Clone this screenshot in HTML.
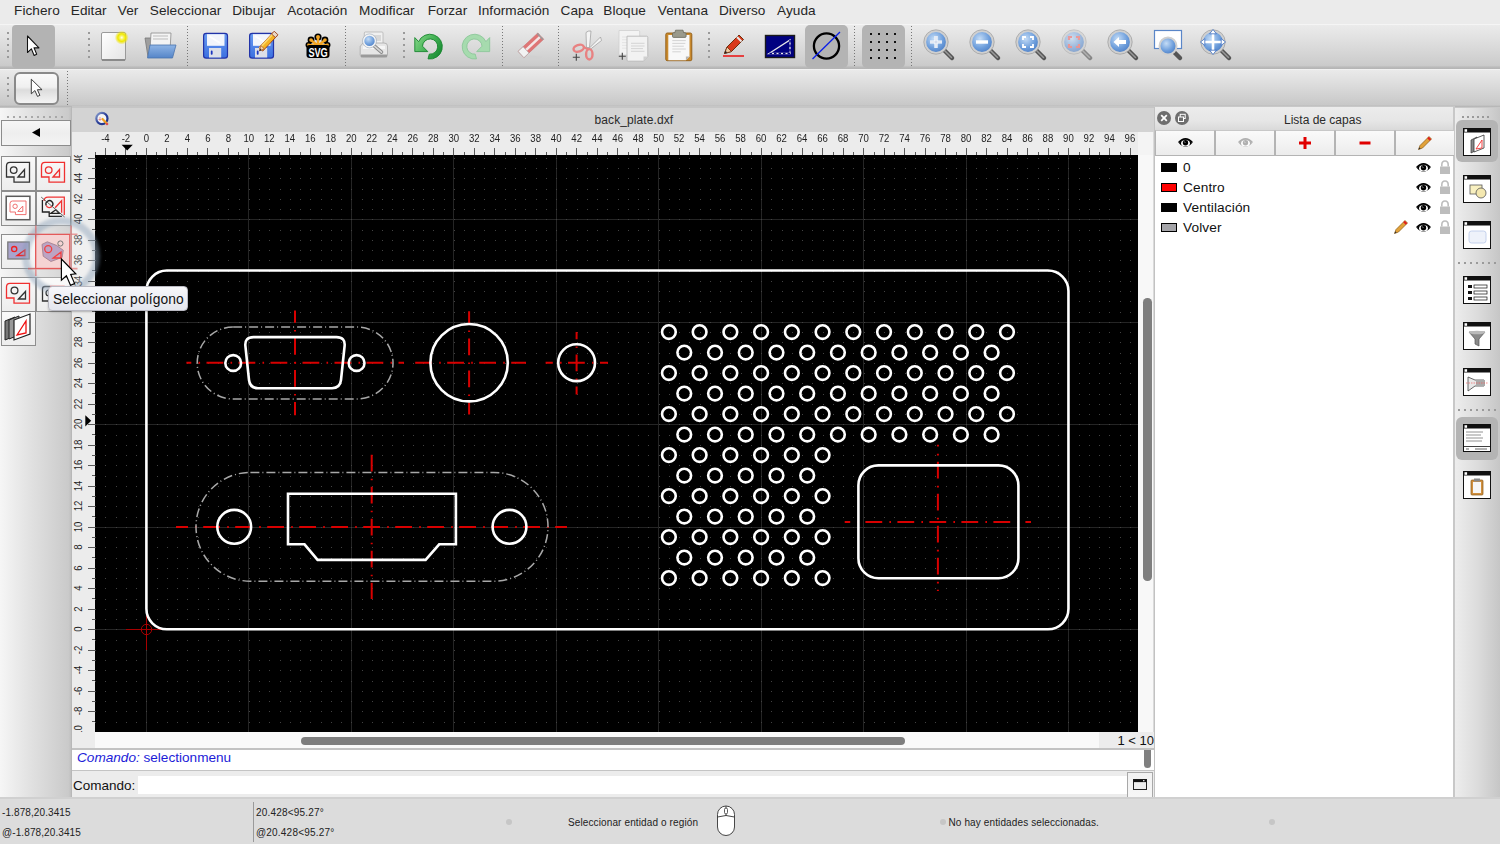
<!DOCTYPE html><html><head><meta charset="utf-8"><title>LibreCAD</title><style>
*{margin:0;padding:0;box-sizing:border-box}
html,body{width:1500px;height:844px;overflow:hidden;background:#ececec;font-family:"Liberation Sans",sans-serif;color:#222}
.a{position:absolute}
.t{position:absolute;white-space:nowrap;line-height:1}
</style></head><body><div class="a" style="left:0;top:0;width:1500px;height:24px;background:#ebebeb"></div><div class="t" style="left:14.1px;top:3.6px;font-size:13.6px;letter-spacing:0.05px;color:#262626">Fichero</div><div class="t" style="left:70.8px;top:3.6px;font-size:13.6px;letter-spacing:0.05px;color:#262626">Editar</div><div class="t" style="left:117.8px;top:3.6px;font-size:13.6px;letter-spacing:0.05px;color:#262626">Ver</div><div class="t" style="left:149.8px;top:3.6px;font-size:13.6px;letter-spacing:0.05px;color:#262626">Seleccionar</div><div class="t" style="left:232.2px;top:3.6px;font-size:13.6px;letter-spacing:0.05px;color:#262626">Dibujar</div><div class="t" style="left:287.2px;top:3.6px;font-size:13.6px;letter-spacing:0.05px;color:#262626">Acotación</div><div class="t" style="left:359.1px;top:3.6px;font-size:13.6px;letter-spacing:0.05px;color:#262626">Modificar</div><div class="t" style="left:427.7px;top:3.6px;font-size:13.6px;letter-spacing:0.05px;color:#262626">Forzar</div><div class="t" style="left:477.9px;top:3.6px;font-size:13.6px;letter-spacing:0.05px;color:#262626">Información</div><div class="t" style="left:560.6px;top:3.6px;font-size:13.6px;letter-spacing:0.05px;color:#262626">Capa</div><div class="t" style="left:603.3px;top:3.6px;font-size:13.6px;letter-spacing:0.05px;color:#262626">Bloque</div><div class="t" style="left:657.8px;top:3.6px;font-size:13.6px;letter-spacing:0.05px;color:#262626">Ventana</div><div class="t" style="left:719.0px;top:3.6px;font-size:13.6px;letter-spacing:0.05px;color:#262626">Diverso</div><div class="t" style="left:777.1px;top:3.6px;font-size:13.6px;letter-spacing:0.05px;color:#262626">Ayuda</div><div class="a" style="left:0;top:24px;width:1500px;height:45px;background:linear-gradient(#f5f5f5 0 1px,#ebebeb 1px,#e0e0e0 35%,#cbcbcb 92%,#bababa 96%,#b4b4b4)"></div><div class="a" style="left:0;top:69px;width:1500px;height:39px;background:linear-gradient(#f2f2f2 0 1px,#eaeaea 1px,#dedede 35%,#c8c8c8 92%,#b8b8b8 96%,#b4b4b4)"></div><div class="a" style="left:7px;top:32px;width:2px;height:2px;background:#9a9a9a"></div><div class="a" style="left:7px;top:38px;width:2px;height:2px;background:#9a9a9a"></div><div class="a" style="left:7px;top:44px;width:2px;height:2px;background:#9a9a9a"></div><div class="a" style="left:7px;top:50px;width:2px;height:2px;background:#9a9a9a"></div><div class="a" style="left:7px;top:56px;width:2px;height:2px;background:#9a9a9a"></div><div class="a" style="left:12px;top:25px;width:43px;height:43px;border-radius:4px;background:#b3b3b3"></div><div class="a" style="left:88px;top:32px;width:2px;height:2px;background:#9a9a9a"></div><div class="a" style="left:88px;top:38px;width:2px;height:2px;background:#9a9a9a"></div><div class="a" style="left:88px;top:44px;width:2px;height:2px;background:#9a9a9a"></div><div class="a" style="left:88px;top:50px;width:2px;height:2px;background:#9a9a9a"></div><div class="a" style="left:88px;top:56px;width:2px;height:2px;background:#9a9a9a"></div><div class="a" style="left:187px;top:26px;width:1px;height:40px;background:repeating-linear-gradient(#777 0 1px,transparent 1px 3px)"></div><div class="a" style="left:345px;top:26px;width:1px;height:40px;background:repeating-linear-gradient(#777 0 1px,transparent 1px 3px)"></div><div class="a" style="left:403px;top:32px;width:2px;height:2px;background:#9a9a9a"></div><div class="a" style="left:403px;top:38px;width:2px;height:2px;background:#9a9a9a"></div><div class="a" style="left:403px;top:44px;width:2px;height:2px;background:#9a9a9a"></div><div class="a" style="left:403px;top:50px;width:2px;height:2px;background:#9a9a9a"></div><div class="a" style="left:403px;top:56px;width:2px;height:2px;background:#9a9a9a"></div><div class="a" style="left:502px;top:26px;width:1px;height:40px;background:repeating-linear-gradient(#777 0 1px,transparent 1px 3px)"></div><div class="a" style="left:558px;top:26px;width:1px;height:40px;background:repeating-linear-gradient(#777 0 1px,transparent 1px 3px)"></div><div class="a" style="left:708px;top:32px;width:2px;height:2px;background:#9a9a9a"></div><div class="a" style="left:708px;top:38px;width:2px;height:2px;background:#9a9a9a"></div><div class="a" style="left:708px;top:44px;width:2px;height:2px;background:#9a9a9a"></div><div class="a" style="left:708px;top:50px;width:2px;height:2px;background:#9a9a9a"></div><div class="a" style="left:708px;top:56px;width:2px;height:2px;background:#9a9a9a"></div><div class="a" style="left:805px;top:25px;width:43px;height:43px;border-radius:5px;background:#b4b4b4"></div><div class="a" style="left:854px;top:26px;width:1px;height:40px;background:repeating-linear-gradient(#777 0 1px,transparent 1px 3px)"></div><div class="a" style="left:862px;top:25px;width:43px;height:43px;border-radius:5px;background:#b4b4b4"></div><div class="a" style="left:911px;top:26px;width:1px;height:40px;background:repeating-linear-gradient(#777 0 1px,transparent 1px 3px)"></div><div class="a" style="left:7px;top:77px;width:2px;height:2px;background:#9a9a9a"></div><div class="a" style="left:7px;top:83px;width:2px;height:2px;background:#9a9a9a"></div><div class="a" style="left:7px;top:89px;width:2px;height:2px;background:#9a9a9a"></div><div class="a" style="left:7px;top:95px;width:2px;height:2px;background:#9a9a9a"></div><div class="a" style="left:14px;top:72px;width:45px;height:33px;border-radius:6px;border:2px solid #8a8a8a;background:linear-gradient(#fafafa,#f0f0f0 45%,#dcdcdc 55%,#f4f4f4)"></div><div class="a" style="left:67px;top:71px;width:1px;height:34px;background:repeating-linear-gradient(#777 0 1px,transparent 1px 3px)"></div><svg class="a" style="left:26px;top:35px;" width="16" height="24" viewBox="0 0 16 24"><path d="M0 0L0 17L4.2 13.2L7.2 20L10 18.8L7.1 12.2L12.5 12.2Z" transform="translate(1.5,1) scale(0.92,0.97)" fill="#fff" stroke="#111" stroke-width="1.15" stroke-linejoin="round"/></svg><svg class="a" style="left:29px;top:78px;" width="16" height="22" viewBox="0 0 16 22"><path d="M0 0L0 17L4.2 13.2L7.2 20L10 18.8L7.1 12.2L12.5 12.2Z" transform="translate(2.3,1.2) scale(0.86)" fill="#fff" stroke="#333" stroke-width="1.1" stroke-linejoin="round"/></svg><svg width="0" height="0" style="position:absolute"><defs>
<linearGradient id="gpage" x1="0" y1="0" x2="1" y2="1"><stop offset="0" stop-color="#fff"/><stop offset="1" stop-color="#e4e4e4"/></linearGradient>
<radialGradient id="gglow"><stop offset="0" stop-color="#fffff8"/><stop offset="0.25" stop-color="#f8f46a"/><stop offset="0.55" stop-color="#f0e800"/><stop offset="1" stop-color="#f0e000" stop-opacity="0"/></radialGradient>
<linearGradient id="gblue" x1="0" y1="0" x2="0" y2="1"><stop offset="0" stop-color="#8fb5e6"/><stop offset="1" stop-color="#5585c8"/></linearGradient>
<linearGradient id="gfl" x1="0" y1="0" x2="0" y2="1"><stop offset="0" stop-color="#6a9cf0"/><stop offset="1" stop-color="#3b6fe0"/></linearGradient>
<radialGradient id="glens" cx="0.4" cy="0.35" r="0.7"><stop offset="0" stop-color="#c4dcf6"/><stop offset="0.6" stop-color="#6f9fdc"/><stop offset="1" stop-color="#4a7cc4"/></radialGradient>
<linearGradient id="ggreen" x1="0" y1="0" x2="1" y2="1"><stop offset="0" stop-color="#7fd07f"/><stop offset="1" stop-color="#1f9a3a"/></linearGradient>
<linearGradient id="gbtn" x1="0" y1="0" x2="0" y2="1"><stop offset="0" stop-color="#fbfbfb"/><stop offset="1" stop-color="#e9e9e9"/></linearGradient>
</defs></svg><svg class="a" style="left:98px;top:30px;" width="34" height="32" viewBox="0 0 34 32"><rect x="3.5" y="2.5" width="24" height="28" rx="1.5" fill="url(#gpage)" stroke="#9a9a9a"/><rect x="4" y="29" width="23" height="2" fill="#8a8a8a"/><circle cx="23.7" cy="7.6" r="7" fill="url(#gglow)"/></svg><svg class="a" style="left:142px;top:30px;" width="36" height="32" viewBox="0 0 36 32"><path d="M3 8h8l2 2h8v17H6z" fill="#9e9e9e" stroke="#777" stroke-width="0.8"/><path d="M9 3h20l-1 18H8z" fill="#f4f4f4" stroke="#8a8a8a" stroke-width="0.8"/><path d="M11 6h15M11 9h15" stroke="#bbb" stroke-width="1"/><path d="M8 15h26l-3.5 13H5.5z" fill="url(#gblue)" stroke="#4a73ad" stroke-width="0.8"/></svg><svg class="a" style="left:200px;top:30px;" width="32" height="32" viewBox="200 30 32 32"><g transform="translate(0,0)"><rect x="203.6" y="33.3" width="23.9" height="24.8" rx="2.6" fill="url(#gfl)" stroke="#2233a8" stroke-width="1.2"/><rect x="207" y="34.2" width="17.5" height="11.6" fill="#f2f5fc"/><path d="M209 36l11 7" stroke="#fff" stroke-width="1.6" opacity="0.8"/><rect x="209" y="48" width="12.2" height="9.5" fill="#dcdfe8"/><rect x="210.8" y="50.6" width="1.8" height="4.2" rx="0.8" fill="#1b35c0"/></g></svg><svg class="a" style="left:245.8px;top:30px;" width="32" height="32" viewBox="245.8 30 32 32"><g transform="translate(45.8,0)"><rect x="203.6" y="33.3" width="23.9" height="24.8" rx="2.6" fill="url(#gfl)" stroke="#2233a8" stroke-width="1.2"/><rect x="207" y="34.2" width="17.5" height="11.6" fill="#f2f5fc"/><path d="M209 36l11 7" stroke="#fff" stroke-width="1.6" opacity="0.8"/><rect x="209" y="48" width="12.2" height="9.5" fill="#dcdfe8"/><rect x="210.8" y="50.6" width="1.8" height="4.2" rx="0.8" fill="#1b35c0"/></g></svg><svg class="a" style="left:256px;top:29px;" width="24" height="25" viewBox="256 29 24 25"><g transform="translate(268.05,41.65) rotate(-47)"><rect x="-10.5" y="-2.6" width="21" height="5.2" fill="#f5b323" stroke="#9a3a10" stroke-width="0.8"/><rect x="-10.5" y="-2.6" width="21" height="1.8" fill="#fbd66a"/><rect x="8" y="-2.6" width="3.8" height="5.2" fill="#e8d8c8" stroke="#9a3a10" stroke-width="0.8"/></g><path d="M259.4 50.9L260.9 45.6L264.3 48.8Z" fill="#f2d2a8" stroke="#9a3a10" stroke-width="0.6"/><path d="M259.4 50.9L260 48.6L261.7 50.2Z" fill="#222"/></svg><svg class="a" style="left:304px;top:32px;" width="28" height="28" viewBox="0 0 28 28"><g fill="#f4a623" stroke="#000" stroke-width="1.6"><circle cx="14" cy="5" r="2.8"/><circle cx="7" cy="8" r="2.6"/><circle cx="21" cy="8" r="2.6"/><circle cx="4.5" cy="13" r="2.2"/><circle cx="23.5" cy="13" r="2.2"/></g><path d="M14 14L14 6M14 14L7 8M14 14L21 8M14 14L4.5 13M14 14L23.5 13" stroke="#f4a623" stroke-width="2.4"/><rect x="2.5" y="13" width="23" height="13" rx="3" fill="#000"/><text transform="translate(14,25) scale(0.92,1.32)" x="0" y="0" font-family="Liberation Sans" font-weight="bold" font-size="10" fill="#fff" text-anchor="middle" letter-spacing="-0.2">SVG</text></svg><svg class="a" style="left:356px;top:28px;" width="36" height="34" viewBox="356 28 36 34"><rect x="364.3" y="32" width="18.7" height="12" rx="1" fill="#f0f0f0" stroke="#b4b4b4" stroke-width="0.8"/><rect x="372" y="35" width="9" height="6" fill="#d8d8d8"/><path d="M362 44.5Q362 43 364 43H384Q387.5 43 387.5 46V55Q387.5 57.2 385 57.2H362.5Q360.2 57.2 360.2 55V46Z" fill="#e6e6e6" stroke="#a8a8a8" stroke-width="0.8"/><rect x="363" y="46" width="22" height="3" fill="#f6f6f6"/><rect x="361" y="54.5" width="26" height="2.7" fill="#9a9a9a"/><path d="M374.5 46.2L381.5 52.2" stroke="#8a8a8a" stroke-width="3.6" stroke-linecap="round"/><path d="M374.5 46.2L381.5 52.2" stroke="#d6d6d6" stroke-width="1.6" stroke-linecap="round"/><circle cx="369.5" cy="40.9" r="6" fill="url(#glens)" stroke="#f4f4f4" stroke-width="1.6"/><circle cx="369.5" cy="40.9" r="7" fill="none" stroke="#9aa8b8" stroke-width="0.6"/></svg><svg class="a" style="left:410px;top:30px;" width="38" height="32" viewBox="410 30 38 32"><defs><linearGradient id="gun" x1="0" y1="0" x2="1" y2="0.6"><stop offset="0" stop-color="#8ad88c"/><stop offset="0.55" stop-color="#46b457"/><stop offset="1" stop-color="#1d8f37"/></linearGradient></defs><path d="M414.8 37.6V51.6H427.8L422.5 46.2A7.6 7.6 0 1 1 429.3 54.1L428 58.9A12.4 12.4 0 1 0 418.6 41.6Z" fill="url(#gun)" stroke="#17862e" stroke-width="0.9" stroke-linejoin="round"/></svg><svg class="a" style="left:456px;top:30px;" width="38" height="32" viewBox="456 30 38 32"><path d="M414.8 37.6V51.6H427.8L422.5 46.2A7.6 7.6 0 1 1 429.3 54.1L428 58.9A12.4 12.4 0 1 0 418.6 41.6Z" transform="translate(904.5,0) scale(-1,1)" fill="#a6dbae" stroke="#8cc79a" stroke-width="0.9" stroke-linejoin="round"/></svg><svg class="a" style="left:512px;top:28px;" width="40" height="34" viewBox="512 28 40 34"><ellipse cx="530.5" cy="57.3" rx="12" ry="1.6" fill="#cfcfcf" opacity="0.8"/><g transform="translate(530.9,45.3) rotate(-43)"><rect x="-13.5" y="-4.3" width="27" height="8.6" fill="#df7575" stroke="#c86a6a" stroke-width="0.5"/><rect x="-7" y="-1.2" width="20.5" height="2.6" fill="#f3e6e6"/><rect x="-13.5" y="-4.3" width="6.8" height="8.6" fill="#f2f2f2" stroke="#aaa" stroke-width="0.6"/><rect x="12" y="-4.3" width="1.5" height="8.6" fill="#999"/></g></svg><svg class="a" style="left:568px;top:28px;" width="36" height="34" viewBox="568 28 36 34"><path d="M586.5 47.5L586 32.5Q588 30.5 591 31L589.5 47.5Z" fill="#f4f4f4" stroke="#9a9a9a" stroke-width="0.7"/><path d="M589.5 48L600.5 37L601.5 40.5L590 49.5Z" fill="#f4f4f4" stroke="#9a9a9a" stroke-width="0.7"/><ellipse cx="578.7" cy="48.2" rx="5.3" ry="3.3" transform="rotate(-18 578.7 48.2)" fill="none" stroke="#e88282" stroke-width="2.4"/><ellipse cx="589.3" cy="54.3" rx="3.2" ry="5.2" fill="none" stroke="#e88282" stroke-width="2.4"/><path d="M583.5 47L588.5 49.5" stroke="#e88282" stroke-width="2.2"/><path d="M572.8 57.3h7M576.3 53.8v7" stroke="#444" stroke-width="1.1"/></svg><svg class="a" style="left:614px;top:27px;" width="38" height="37" viewBox="614 27 38 37"><path d="M619 30.5h19.5q1.2 0 1.2 1.2V55H619z" fill="#f3f3f3" stroke="#cfcfcf" stroke-width="0.8"/><path d="M622 37h15M622 39.8h15M622 42.6h15M622 45.4h15M622 48.2h15" stroke="#e2e2e2" stroke-width="0.9"/><path d="M627 36.2h19.6q1.2 0 1.2 1.2V56.5L643.5 61.2H628.2q-1.2 0-1.2-1.2z" fill="#f2f2f2" stroke="#b8b8b8" stroke-width="0.9"/><path d="M631 43.3h13.5M631 46h13.5M631 48.6h12M631 51.3h13.5" stroke="#d0d0d0" stroke-width="0.9"/><path d="M643.5 61.2L647.8 56.5H643.5z" fill="#d0d0d0"/><path d="M618.8 56.3h7M622.3 52.8v7" stroke="#444" stroke-width="1.1"/></svg><svg class="a" style="left:662px;top:27px;" width="34" height="37" viewBox="662 27 34 37"><rect x="665.8" y="33" width="26" height="27.7" rx="1.5" fill="#c98a2e" stroke="#8f5a12" stroke-width="0.9"/><path d="M668.3 35h21.2v21.6l-3.6 3.6h-17.6z" fill="#f8f8f8"/><path d="M672.3 40.6h13.5M672.3 43.4h13M672.3 46.2h11.5M672.3 49h13.5M672.3 51.8h8.5" stroke="#cfcfcf" stroke-width="0.9"/><path d="M685.9 60.2L689.5 56.6H685.9z" fill="#b4b4b4"/><path d="M675.5 30.2h7.5l0.6 2.5h1.5q1 0 1 1.2v2.5q0 1-1 1h-11.6q-1 0-1-1v-2.5q0-1.2 1-1.2h1.4z" fill="#9a9a8c" stroke="#6a6a5e" stroke-width="0.8"/></svg><svg class="a" style="left:721px;top:32px;" width="26" height="27" viewBox="0 0 26 27"><path d="M2 24H23" stroke="#e00" stroke-width="1.4"/><path d="M3.5 21.5L6 15L18 3L22.5 7.5L10.5 19.5Z" fill="#d93a1c" stroke="#6d2f0f" stroke-width="1"/><path d="M16 5l4.5 4.5" stroke="#e8e8e8" stroke-width="2"/><path d="M3.5 21.5L6 15L10.5 19.5Z" fill="#f0caa0" stroke="#6d2f0f" stroke-width="0.8"/><path d="M3.5 21.5L4.5 18.8L6.2 20.5Z" fill="#222"/></svg><svg class="a" style="left:764px;top:34px;" width="32" height="25" viewBox="0 0 32 25"><rect x="1.5" y="1.5" width="29" height="22" fill="#000080" stroke="#1a1a1a" stroke-width="1.4"/><path d="M5 19.5L26 6V19.5Z" fill="none" stroke="#e8e8e8" stroke-width="1.3" stroke-dasharray="0"/><path d="M26 6V19.5H5" fill="none" stroke="#000080" stroke-width="1.5" stroke-dasharray="2.5 2"/></svg><svg class="a" style="left:809px;top:30px;" width="34" height="32" viewBox="0 0 34 32"><circle cx="17.5" cy="16" r="12.6" fill="none" stroke="#000" stroke-width="2.3"/><path d="M3.5 29L31 2" stroke="#0a1ee8" stroke-width="1.3"/></svg><svg class="a" style="left:862px;top:25px;" width="43" height="43" viewBox="0 0 43 43"><rect x="8" y="8" width="2" height="2" fill="#111"/><rect x="8" y="16" width="2" height="2" fill="#111"/><rect x="8" y="24" width="2" height="2" fill="#111"/><rect x="8" y="32" width="2" height="2" fill="#111"/><rect x="16" y="8" width="2" height="2" fill="#111"/><rect x="16" y="16" width="2" height="2" fill="#111"/><rect x="16" y="24" width="2" height="2" fill="#111"/><rect x="16" y="32" width="2" height="2" fill="#111"/><rect x="24" y="8" width="2" height="2" fill="#111"/><rect x="24" y="16" width="2" height="2" fill="#111"/><rect x="24" y="24" width="2" height="2" fill="#111"/><rect x="24" y="32" width="2" height="2" fill="#111"/><rect x="32" y="8" width="2" height="2" fill="#111"/><rect x="32" y="16" width="2" height="2" fill="#111"/><rect x="32" y="24" width="2" height="2" fill="#111"/><rect x="32" y="32" width="2" height="2" fill="#111"/></svg><svg class="a" style="left:919px;top:25px;" width="38" height="38" viewBox="0 0 38 38"><g><path d="M25 25L33 33" stroke="#555" stroke-width="4.5" stroke-linecap="round"/><path d="M25.5 25.5L32.5 32.5" stroke="#999" stroke-width="1.5" stroke-linecap="round"/><circle cx="17" cy="17" r="11" fill="url(#glens)" stroke="#d0d0d0" stroke-width="2.2"/><circle cx="17" cy="17" r="12.2" fill="none" stroke="#9a9a9a" stroke-width="0.7"/><path d="M17 11v12M11 17h12" stroke="#fff" stroke-width="3.2"/><path d="M17 11v12M11 17h12" stroke="#2a58a8" stroke-width="0.6" opacity="0.4"/></g></svg><svg class="a" style="left:965px;top:25px;" width="38" height="38" viewBox="0 0 38 38"><g><path d="M25 25L33 33" stroke="#555" stroke-width="4.5" stroke-linecap="round"/><path d="M25.5 25.5L32.5 32.5" stroke="#999" stroke-width="1.5" stroke-linecap="round"/><circle cx="17" cy="17" r="11" fill="url(#glens)" stroke="#d0d0d0" stroke-width="2.2"/><circle cx="17" cy="17" r="12.2" fill="none" stroke="#9a9a9a" stroke-width="0.7"/><path d="M11 17h12" stroke="#fff" stroke-width="3.4"/></g></svg><svg class="a" style="left:1011px;top:25px;" width="38" height="38" viewBox="0 0 38 38"><g><path d="M25 25L33 33" stroke="#555" stroke-width="4.5" stroke-linecap="round"/><path d="M25.5 25.5L32.5 32.5" stroke="#999" stroke-width="1.5" stroke-linecap="round"/><circle cx="17" cy="17" r="11" fill="url(#glens)" stroke="#d0d0d0" stroke-width="2.2"/><circle cx="17" cy="17" r="12.2" fill="none" stroke="#9a9a9a" stroke-width="0.7"/><path d="M12 15v-3h3M19 12h3v3M22 19v3h-3M15 22h-3v-3" fill="none" stroke="#fff" stroke-width="1.8"/></g></svg><svg class="a" style="left:1057px;top:25px;" width="38" height="38" viewBox="0 0 38 38"><g opacity="0.6"><path d="M25 25L33 33" stroke="#555" stroke-width="4.5" stroke-linecap="round"/><path d="M25.5 25.5L32.5 32.5" stroke="#999" stroke-width="1.5" stroke-linecap="round"/><circle cx="17" cy="17" r="11" fill="url(#glens)" stroke="#d0d0d0" stroke-width="2.2"/><circle cx="17" cy="17" r="12.2" fill="none" stroke="#9a9a9a" stroke-width="0.7"/><path d="M12 15v-3h3M19 12h3v3M22 19v3h-3M15 22h-3v-3" fill="none" stroke="#f06a6a" stroke-width="2.2"/></g></svg><svg class="a" style="left:1103px;top:25px;" width="38" height="38" viewBox="0 0 38 38"><g><path d="M25 25L33 33" stroke="#555" stroke-width="4.5" stroke-linecap="round"/><path d="M25.5 25.5L32.5 32.5" stroke="#999" stroke-width="1.5" stroke-linecap="round"/><circle cx="17" cy="17" r="11" fill="url(#glens)" stroke="#d0d0d0" stroke-width="2.2"/><circle cx="17" cy="17" r="12.2" fill="none" stroke="#9a9a9a" stroke-width="0.7"/><path d="M10.5 17L16 12v3h7v4h-7v3z" fill="#fff"/></g></svg><svg class="a" style="left:1151px;top:27px;" width="38" height="38" viewBox="0 0 38 38"><rect x="3.5" y="3.5" width="27" height="18" fill="#fff" stroke="#5a86c8" stroke-width="1.2"/><path d="M21 23L29 31" stroke="#555" stroke-width="4.5" stroke-linecap="round"/><circle cx="17" cy="19" r="8.5" fill="url(#glens)" stroke="#d0d0d0" stroke-width="2"/></svg><svg class="a" style="left:1196px;top:25px;" width="38" height="38" viewBox="0 0 38 38"><g><path d="M25 25L33 33" stroke="#555" stroke-width="4.5" stroke-linecap="round"/><path d="M25.5 25.5L32.5 32.5" stroke="#999" stroke-width="1.5" stroke-linecap="round"/><circle cx="17" cy="17" r="11" fill="url(#glens)" stroke="#d0d0d0" stroke-width="2.2"/><circle cx="17" cy="17" r="12.2" fill="none" stroke="#9a9a9a" stroke-width="0.7"/><path d="M17 8v18M8 17h18" stroke="#fff" stroke-width="2.6"/><path d="M17 4.5l-3.4 4.3h6.8zM17 29.5l-3.4-4.3h6.8zM4.5 17l4.3-3.4v6.8zM29.5 17l-4.3-3.4v6.8z" fill="#fff" stroke="#3a6cc0" stroke-width="0.8" stroke-linejoin="round"/></g></svg><div class="a" style="left:0;top:107px;width:72px;height:690px;background:linear-gradient(90deg,#f6f6f6,#e0e0e0 45%,#cacaca 95%,#bcbcbc);border-top:1px solid #c4c4c4"></div><div class="a" style="left:71px;top:107px;width:1px;height:690px;background:#b8b8b8"></div><div class="a" style="left:7px;top:116px;width:2px;height:2px;background:#a8a8a8"></div><div class="a" style="left:13px;top:116px;width:2px;height:2px;background:#a8a8a8"></div><div class="a" style="left:19px;top:116px;width:2px;height:2px;background:#a8a8a8"></div><div class="a" style="left:25px;top:116px;width:2px;height:2px;background:#a8a8a8"></div><div class="a" style="left:31px;top:116px;width:2px;height:2px;background:#a8a8a8"></div><div class="a" style="left:37px;top:116px;width:2px;height:2px;background:#a8a8a8"></div><div class="a" style="left:43px;top:116px;width:2px;height:2px;background:#a8a8a8"></div><div class="a" style="left:49px;top:116px;width:2px;height:2px;background:#a8a8a8"></div><div class="a" style="left:55px;top:116px;width:2px;height:2px;background:#a8a8a8"></div><div class="a" style="left:61px;top:116px;width:2px;height:2px;background:#a8a8a8"></div><div class="a" style="left:1px;top:120px;width:70px;height:26px;border:1px solid #8c8c8c;background:linear-gradient(#f6f6f6,#eeeeee 50%,#f4f4f4)"></div><svg class="a" style="left:31px;top:127px;" width="10" height="11" viewBox="0 0 10 11"><path d="M1 5.5L9 1V10Z" fill="#000"/></svg><div class="a" style="left:1px;top:156px;width:35px;height:35px;border:1px solid #8e8e8e;background:linear-gradient(#f9f9f9,#ededed)"></div><svg class="a" style="left:1px;top:156px;" width="35" height="35" viewBox="0 0 35 35"><path d="M5.5 10Q5.5 6.4 9 6.4H28.5V26.1H13V21H5.5Z" fill="none" stroke="#333" stroke-width="1.3"/><circle cx="12.7" cy="14.1" r="3.3" fill="none" stroke="#333" stroke-width="1.3"/><path d="M17 21L23.5 13.5V21Z" fill="none" stroke="#333" stroke-width="1.3"/></svg><div class="a" style="left:36px;top:156px;width:35px;height:35px;border:1px solid #8e8e8e;background:linear-gradient(#f9f9f9,#ededed)"></div><svg class="a" style="left:36px;top:156px;" width="35" height="35" viewBox="0 0 35 35"><path d="M5.5 10Q5.5 6.4 9 6.4H28.5V26.1H13V21H5.5Z" fill="none" stroke="#f03030" stroke-width="1.3"/><circle cx="12.7" cy="14.1" r="3.3" fill="none" stroke="#f03030" stroke-width="1.3"/><path d="M17 21L23.5 13.5V21Z" fill="none" stroke="#f03030" stroke-width="1.3"/></svg><div class="a" style="left:1px;top:191px;width:35px;height:35px;border:1px solid #8e8e8e;background:linear-gradient(#f9f9f9,#ededed)"></div><svg class="a" style="left:1px;top:191px;" width="35" height="35" viewBox="0 0 35 35"><rect x="5.2" y="5.3" width="23.7" height="23.4" fill="#fff" stroke="#5a5a5a" stroke-width="1.5"/><path d="M9 12.5Q9 10 11.5 10H25V23.6H14.4V21H9Z" fill="none" stroke="#f07070" stroke-width="1"/><circle cx="14.1" cy="15.3" r="2.2" fill="none" stroke="#f07070" stroke-width="1"/><path d="M16.8 20.4L21.8 15V20.4Z" fill="none" stroke="#f07070" stroke-width="1"/></svg><div class="a" style="left:36px;top:191px;width:35px;height:35px;border:1px solid #8e8e8e;background:linear-gradient(#f9f9f9,#ededed)"></div><svg class="a" style="left:36px;top:191px;" width="35" height="35" viewBox="0 0 35 35"><path d="M8.1 10Q8.1 6.1 12 6.1H28.3V24" fill="none" stroke="#f03535" stroke-width="1.3"/><path d="M6.4 9.1V21H13.2V25.4H25.9" fill="none" stroke="#222" stroke-width="1.3"/><path d="M10.2 14.5A3.5 3.5 0 1 1 16.2 15.2" fill="none" stroke="#222" stroke-width="1.3"/><path d="M10.2 14.5A3.5 3.5 0 0 0 16.2 15.2" fill="none" stroke="#f03535" stroke-width="1.3"/><path d="M19.1 16.8L25.6 9.7V21.8" fill="none" stroke="#f03535" stroke-width="1.3"/><path d="M14.7 22.4H23.2L19.8 18.8Z" fill="none" stroke="#222" stroke-width="1.3"/><path d="M5.2 6.1L28.6 26" stroke="#555" stroke-width="0.9"/></svg><div class="a" style="left:1px;top:234px;width:35px;height:35px;border:1px solid #8e8e8e;background:linear-gradient(#f9f9f9,#ededed)"></div><svg class="a" style="left:1px;top:234px;" width="35" height="35" viewBox="0 0 35 35"><rect x="6.8" y="8" width="21.4" height="17" fill="#a9a4cc" stroke="#7a7a7a" stroke-width="1.3"/><circle cx="13.2" cy="15.1" r="2.6" fill="none" stroke="#f02020" stroke-width="1.3"/><path d="M16.1 21.5L23.9 16V21.5Z" fill="none" stroke="#f02020" stroke-width="1.3"/></svg><div class="a" style="left:35px;top:234px;width:35px;height:35px;border:1px solid #e04848;background:#f2c8c8"></div><svg class="a" style="left:35px;top:234px;" width="35" height="35" viewBox="0 0 35 35"><path d="M7 10.4L12.3 7.8L21.8 11.5L28.3 16.3L27.1 23.4L15.9 27.5L8.2 22.2Z" fill="#ab8db5" stroke="#8a5a6a" stroke-width="0.8"/><circle cx="13.2" cy="15.1" r="3.5" fill="none" stroke="#f01010" stroke-width="1.3"/><path d="M18.2 24L26 18V24Z" fill="none" stroke="#f01010" stroke-width="1.3"/><circle cx="25.4" cy="9.5" r="2.6" fill="none" stroke="#555" stroke-width="1"/></svg><div class="a" style="left:1px;top:277px;width:35px;height:35px;border:1px solid #8e8e8e;background:linear-gradient(#f9f9f9,#ededed)"></div><svg class="a" style="left:1px;top:277px;" width="35" height="35" viewBox="0 0 35 35"><path d="M5.5 10Q5.5 6.4 9 6.4H28.5V26.1H13V21H5.5Z" fill="none" stroke="#f03030" stroke-width="1.3"/><circle cx="13.5" cy="13.5" r="3.4" fill="none" stroke="#333" stroke-width="1.3"/><path d="M17.5 22L24.5 14.5V22Z" fill="none" stroke="#333" stroke-width="1.3"/></svg><div class="a" style="left:36px;top:277px;width:35px;height:35px;border:1px solid #8e8e8e;background:linear-gradient(#f9f9f9,#ededed)"></div><svg class="a" style="left:36px;top:277px;" width="35" height="35" viewBox="0 0 35 35"><path d="M6.5 12Q6.5 9.5 9 9.5H14M6.5 12V24H14" fill="none" stroke="#333" stroke-width="1.3"/><path d="M14 9.5H28V20" fill="none" stroke="#f03030" stroke-width="1.3"/><circle cx="13" cy="16" r="3" fill="none" stroke="#333" stroke-width="1.2"/></svg><div class="a" style="left:1px;top:311px;width:35px;height:35px;border:1px solid #8e8e8e;background:linear-gradient(#f9f9f9,#ededed)"></div><svg class="a" style="left:1px;top:311px;" width="35" height="35" viewBox="0 0 35 35"><path d="M4 10L14 6V25L4 29Z" fill="#777" stroke="#222" stroke-width="1"/><path d="M8 9L18 5V24L8 28Z" fill="#999" stroke="#222" stroke-width="1"/><path d="M13 9L29 3V23L13 29Z" fill="#fff" stroke="#222" stroke-width="1.2"/><path d="M16 24L25 10V22Z" fill="none" stroke="#f01010" stroke-width="1.3"/></svg><div class="a" style="left:72px;top:106px;width:1083px;height:2px;background:#c6c6c6"></div><div class="a" style="left:72px;top:108px;width:1082px;height:24px;background:#d3d3d3"></div><div class="t" style="left:594.5px;top:114px;font-size:12px;letter-spacing:0.1px;color:#2a2a2a">back_plate.dxf</div><svg class="a" style="left:92px;top:109px;" width="20" height="20" viewBox="92 109 20 20"><defs><linearGradient id="gring" x1="0" y1="0" x2="1" y2="1"><stop offset="0" stop-color="#8ea2d0"/><stop offset="0.5" stop-color="#2a3f98"/><stop offset="1" stop-color="#1e3288"/></linearGradient></defs><circle cx="101.9" cy="118.5" r="5.6" fill="#f4f4f4" stroke="url(#gring)" stroke-width="2.2"/><path d="M98.5 119.5h3M100 117v4" stroke="#e06060" stroke-width="0.6"/><path d="M102.5 119L106.3 123" stroke="#f0a020" stroke-width="2.2" stroke-linecap="round"/><circle cx="107" cy="124" r="1.3" fill="#e05050"/></svg><div class="a" style="left:72px;top:132px;width:1082px;height:23px;background:#ececec"></div><div class="a" style="left:1138px;top:132px;width:16px;height:23px;background:#f4f4f4"></div><div class="a" style="left:72px;top:155px;width:23px;height:593px;background:#ececec"></div><div class="a" style="left:1138px;top:155px;width:16px;height:577px;background:#f8f8f8"></div><div class="a" style="left:1153px;top:132px;width:1px;height:616px;background:#dadada"></div><div class="a" style="left:1143px;top:298px;width:8.5px;height:283px;border-radius:4.25px;background:#7f7f7f"></div><div class="a" style="left:95px;top:732px;width:1004px;height:16px;background:#f9f9f9"></div><div class="a" style="left:301px;top:737px;width:604px;height:8px;border-radius:4px;background:#7d7d7d"></div><div class="a" style="left:1099px;top:732px;width:55px;height:16px;background:#ececec"></div><div class="t" style="right:346px;top:733.6px;font-size:13px;color:#111">1 &lt; 10</div><div class="a" style="left:72px;top:748px;width:1082px;height:2px;background:#c2c2c2"></div><div class="a" style="left:72px;top:750px;width:1082px;height:20px;background:#fff"></div><div class="t" style="left:77px;top:751.2px;font-size:13.6px;color:#1c1cd8"><i>Comando:</i> selectionmenu</div><div class="a" style="left:1144px;top:750px;width:7px;height:18px;border-radius:0 0 3.5px 3.5px;background:#808080"></div><div class="a" style="left:72px;top:770px;width:1082px;height:1px;background:#c4c4c4"></div><div class="a" style="left:72px;top:771px;width:1082px;height:27px;background:#ececec"></div><div class="t" style="left:73px;top:778.6px;font-size:13.5px;color:#111">Comando:</div><div class="a" style="left:138px;top:776px;width:989px;height:18px;background:#fff"></div><div class="a" style="left:1127px;top:772px;width:26px;height:26px;border:1px solid #a8a8a8;background:linear-gradient(#f2f2f2,#f6f6f6)"></div><svg class="a" style="left:1133px;top:779px;" width="15" height="12" viewBox="0 0 15 12"><rect x="0.5" y="0.5" width="13" height="10" fill="#eee" stroke="#222" stroke-width="1"/><rect x="0.5" y="0.5" width="13" height="2.6" fill="#111"/><rect x="10" y="1" width="1.5" height="1.3" fill="#ddd"/></svg><svg class="a" style="left:0px;top:0px;pointer-events:none" width="1500" height="160" viewBox="0 0 1500 160"><path d="M95.5 152V155M105.5 148V155M115.5 152V155M125.5 148V155M136.5 152V155M146.5 148V155M156.5 152V155M166.5 148V155M177.5 152V155M187.5 148V155M197.5 152V155M207.5 148V155M218.5 152V155M228.5 148V155M238.5 152V155M248.5 148V155M259.5 152V155M269.5 148V155M279.5 152V155M289.5 148V155M300.5 152V155M310.5 148V155M320.5 152V155M330.5 148V155M341.5 152V155M351.5 148V155M361.5 152V155M371.5 148V155M382.5 152V155M392.5 148V155M402.5 152V155M412.5 148V155M423.5 152V155M433.5 148V155M443.5 152V155M453.5 148V155M464.5 152V155M474.5 148V155M484.5 152V155M494.5 148V155M505.5 152V155M515.5 148V155M525.5 152V155M535.5 148V155M546.5 152V155M556.5 148V155M566.5 152V155M576.5 148V155M587.5 152V155M597.5 148V155M607.5 152V155M617.5 148V155M628.5 152V155M638.5 148V155M648.5 152V155M658.5 148V155M669.5 152V155M679.5 148V155M689.5 152V155M699.5 148V155M710.5 152V155M720.5 148V155M730.5 152V155M740.5 148V155M751.5 152V155M761.5 148V155M771.5 152V155M781.5 148V155M792.5 152V155M802.5 148V155M812.5 152V155M822.5 148V155M833.5 152V155M843.5 148V155M853.5 152V155M863.5 148V155M874.5 152V155M884.5 148V155M894.5 152V155M904.5 148V155M915.5 152V155M925.5 148V155M935.5 152V155M945.5 148V155M956.5 152V155M966.5 148V155M976.5 152V155M986.5 148V155M997.5 152V155M1007.5 148V155M1017.5 152V155M1027.5 148V155M1038.5 152V155M1048.5 148V155M1058.5 152V155M1068.5 148V155M1079.5 152V155M1089.5 148V155M1099.5 152V155M1109.5 148V155M1120.5 152V155M1130.5 148V155" stroke="#5a5a5a" stroke-width="1"/></svg><div class="t" style="left:85.42px;top:133.5px;width:40px;text-align:center;font-size:9.6px;transform:scaleY(1.08);color:#1e1e1e">-4</div><div class="t" style="left:105.91px;top:133.5px;width:40px;text-align:center;font-size:9.6px;transform:scaleY(1.08);color:#1e1e1e">-2</div><div class="t" style="left:126.40px;top:133.5px;width:40px;text-align:center;font-size:9.6px;transform:scaleY(1.08);color:#1e1e1e">0</div><div class="t" style="left:146.89px;top:133.5px;width:40px;text-align:center;font-size:9.6px;transform:scaleY(1.08);color:#1e1e1e">2</div><div class="t" style="left:167.38px;top:133.5px;width:40px;text-align:center;font-size:9.6px;transform:scaleY(1.08);color:#1e1e1e">4</div><div class="t" style="left:187.87px;top:133.5px;width:40px;text-align:center;font-size:9.6px;transform:scaleY(1.08);color:#1e1e1e">6</div><div class="t" style="left:208.36px;top:133.5px;width:40px;text-align:center;font-size:9.6px;transform:scaleY(1.08);color:#1e1e1e">8</div><div class="t" style="left:228.85px;top:133.5px;width:40px;text-align:center;font-size:9.6px;transform:scaleY(1.08);color:#1e1e1e">10</div><div class="t" style="left:249.34px;top:133.5px;width:40px;text-align:center;font-size:9.6px;transform:scaleY(1.08);color:#1e1e1e">12</div><div class="t" style="left:269.83px;top:133.5px;width:40px;text-align:center;font-size:9.6px;transform:scaleY(1.08);color:#1e1e1e">14</div><div class="t" style="left:290.32px;top:133.5px;width:40px;text-align:center;font-size:9.6px;transform:scaleY(1.08);color:#1e1e1e">16</div><div class="t" style="left:310.81px;top:133.5px;width:40px;text-align:center;font-size:9.6px;transform:scaleY(1.08);color:#1e1e1e">18</div><div class="t" style="left:331.30px;top:133.5px;width:40px;text-align:center;font-size:9.6px;transform:scaleY(1.08);color:#1e1e1e">20</div><div class="t" style="left:351.79px;top:133.5px;width:40px;text-align:center;font-size:9.6px;transform:scaleY(1.08);color:#1e1e1e">22</div><div class="t" style="left:372.28px;top:133.5px;width:40px;text-align:center;font-size:9.6px;transform:scaleY(1.08);color:#1e1e1e">24</div><div class="t" style="left:392.77px;top:133.5px;width:40px;text-align:center;font-size:9.6px;transform:scaleY(1.08);color:#1e1e1e">26</div><div class="t" style="left:413.26px;top:133.5px;width:40px;text-align:center;font-size:9.6px;transform:scaleY(1.08);color:#1e1e1e">28</div><div class="t" style="left:433.75px;top:133.5px;width:40px;text-align:center;font-size:9.6px;transform:scaleY(1.08);color:#1e1e1e">30</div><div class="t" style="left:454.24px;top:133.5px;width:40px;text-align:center;font-size:9.6px;transform:scaleY(1.08);color:#1e1e1e">32</div><div class="t" style="left:474.73px;top:133.5px;width:40px;text-align:center;font-size:9.6px;transform:scaleY(1.08);color:#1e1e1e">34</div><div class="t" style="left:495.22px;top:133.5px;width:40px;text-align:center;font-size:9.6px;transform:scaleY(1.08);color:#1e1e1e">36</div><div class="t" style="left:515.71px;top:133.5px;width:40px;text-align:center;font-size:9.6px;transform:scaleY(1.08);color:#1e1e1e">38</div><div class="t" style="left:536.20px;top:133.5px;width:40px;text-align:center;font-size:9.6px;transform:scaleY(1.08);color:#1e1e1e">40</div><div class="t" style="left:556.69px;top:133.5px;width:40px;text-align:center;font-size:9.6px;transform:scaleY(1.08);color:#1e1e1e">42</div><div class="t" style="left:577.18px;top:133.5px;width:40px;text-align:center;font-size:9.6px;transform:scaleY(1.08);color:#1e1e1e">44</div><div class="t" style="left:597.67px;top:133.5px;width:40px;text-align:center;font-size:9.6px;transform:scaleY(1.08);color:#1e1e1e">46</div><div class="t" style="left:618.16px;top:133.5px;width:40px;text-align:center;font-size:9.6px;transform:scaleY(1.08);color:#1e1e1e">48</div><div class="t" style="left:638.65px;top:133.5px;width:40px;text-align:center;font-size:9.6px;transform:scaleY(1.08);color:#1e1e1e">50</div><div class="t" style="left:659.14px;top:133.5px;width:40px;text-align:center;font-size:9.6px;transform:scaleY(1.08);color:#1e1e1e">52</div><div class="t" style="left:679.63px;top:133.5px;width:40px;text-align:center;font-size:9.6px;transform:scaleY(1.08);color:#1e1e1e">54</div><div class="t" style="left:700.12px;top:133.5px;width:40px;text-align:center;font-size:9.6px;transform:scaleY(1.08);color:#1e1e1e">56</div><div class="t" style="left:720.61px;top:133.5px;width:40px;text-align:center;font-size:9.6px;transform:scaleY(1.08);color:#1e1e1e">58</div><div class="t" style="left:741.10px;top:133.5px;width:40px;text-align:center;font-size:9.6px;transform:scaleY(1.08);color:#1e1e1e">60</div><div class="t" style="left:761.59px;top:133.5px;width:40px;text-align:center;font-size:9.6px;transform:scaleY(1.08);color:#1e1e1e">62</div><div class="t" style="left:782.08px;top:133.5px;width:40px;text-align:center;font-size:9.6px;transform:scaleY(1.08);color:#1e1e1e">64</div><div class="t" style="left:802.57px;top:133.5px;width:40px;text-align:center;font-size:9.6px;transform:scaleY(1.08);color:#1e1e1e">66</div><div class="t" style="left:823.06px;top:133.5px;width:40px;text-align:center;font-size:9.6px;transform:scaleY(1.08);color:#1e1e1e">68</div><div class="t" style="left:843.55px;top:133.5px;width:40px;text-align:center;font-size:9.6px;transform:scaleY(1.08);color:#1e1e1e">70</div><div class="t" style="left:864.04px;top:133.5px;width:40px;text-align:center;font-size:9.6px;transform:scaleY(1.08);color:#1e1e1e">72</div><div class="t" style="left:884.53px;top:133.5px;width:40px;text-align:center;font-size:9.6px;transform:scaleY(1.08);color:#1e1e1e">74</div><div class="t" style="left:905.02px;top:133.5px;width:40px;text-align:center;font-size:9.6px;transform:scaleY(1.08);color:#1e1e1e">76</div><div class="t" style="left:925.51px;top:133.5px;width:40px;text-align:center;font-size:9.6px;transform:scaleY(1.08);color:#1e1e1e">78</div><div class="t" style="left:946.00px;top:133.5px;width:40px;text-align:center;font-size:9.6px;transform:scaleY(1.08);color:#1e1e1e">80</div><div class="t" style="left:966.49px;top:133.5px;width:40px;text-align:center;font-size:9.6px;transform:scaleY(1.08);color:#1e1e1e">82</div><div class="t" style="left:986.98px;top:133.5px;width:40px;text-align:center;font-size:9.6px;transform:scaleY(1.08);color:#1e1e1e">84</div><div class="t" style="left:1007.47px;top:133.5px;width:40px;text-align:center;font-size:9.6px;transform:scaleY(1.08);color:#1e1e1e">86</div><div class="t" style="left:1027.96px;top:133.5px;width:40px;text-align:center;font-size:9.6px;transform:scaleY(1.08);color:#1e1e1e">88</div><div class="t" style="left:1048.45px;top:133.5px;width:40px;text-align:center;font-size:9.6px;transform:scaleY(1.08);color:#1e1e1e">90</div><div class="t" style="left:1068.94px;top:133.5px;width:40px;text-align:center;font-size:9.6px;transform:scaleY(1.08);color:#1e1e1e">92</div><div class="t" style="left:1089.43px;top:133.5px;width:40px;text-align:center;font-size:9.6px;transform:scaleY(1.08);color:#1e1e1e">94</div><div class="t" style="left:1109.92px;top:133.5px;width:40px;text-align:center;font-size:9.6px;transform:scaleY(1.08);color:#1e1e1e">96</div><svg class="a" style="left:0px;top:0px;" width="100" height="760" viewBox="0 0 100 760"><path d="M92 721.5H95M88 711.5H95M92 701.5H95M88 691.5H95M92 680.5H95M88 670.5H95M92 660.5H95M88 650.5H95M92 639.5H95M88 629.5H95M92 619.5H95M88 609.5H95M92 598.5H95M88 588.5H95M92 578.5H95M88 568.5H95M92 557.5H95M88 547.5H95M92 537.5H95M88 527.5H95M92 516.5H95M88 506.5H95M92 496.5H95M88 486.5H95M92 475.5H95M88 465.5H95M92 455.5H95M88 445.5H95M92 434.5H95M88 424.5H95M92 414.5H95M88 404.5H95M92 393.5H95M88 383.5H95M92 373.5H95M88 363.5H95M92 352.5H95M88 342.5H95M92 332.5H95M88 322.5H95M92 311.5H95M88 301.5H95M92 291.5H95M88 281.5H95M92 270.5H95M88 260.5H95M92 250.5H95M88 240.5H95M92 229.5H95M88 219.5H95M92 209.5H95M88 199.5H95M92 188.5H95M88 178.5H95M92 168.5H95M88 158.5H95" stroke="#5a5a5a" stroke-width="1"/></svg><div class="a" style="left:71px;top:155px;width:24px;height:577px;overflow:hidden"><div class="t" style="left:-12.5px;top:570.80px;width:40px;height:12px;text-align:center;font-size:9.6px;line-height:12px;color:#1e1e1e;transform:rotate(-90deg) scaleY(1.08)">-10</div><div class="t" style="left:-12.5px;top:550.30px;width:40px;height:12px;text-align:center;font-size:9.6px;line-height:12px;color:#1e1e1e;transform:rotate(-90deg) scaleY(1.08)">-8</div><div class="t" style="left:-12.5px;top:529.80px;width:40px;height:12px;text-align:center;font-size:9.6px;line-height:12px;color:#1e1e1e;transform:rotate(-90deg) scaleY(1.08)">-6</div><div class="t" style="left:-12.5px;top:509.30px;width:40px;height:12px;text-align:center;font-size:9.6px;line-height:12px;color:#1e1e1e;transform:rotate(-90deg) scaleY(1.08)">-4</div><div class="t" style="left:-12.5px;top:488.80px;width:40px;height:12px;text-align:center;font-size:9.6px;line-height:12px;color:#1e1e1e;transform:rotate(-90deg) scaleY(1.08)">-2</div><div class="t" style="left:-12.5px;top:468.30px;width:40px;height:12px;text-align:center;font-size:9.6px;line-height:12px;color:#1e1e1e;transform:rotate(-90deg) scaleY(1.08)">0</div><div class="t" style="left:-12.5px;top:447.80px;width:40px;height:12px;text-align:center;font-size:9.6px;line-height:12px;color:#1e1e1e;transform:rotate(-90deg) scaleY(1.08)">2</div><div class="t" style="left:-12.5px;top:427.30px;width:40px;height:12px;text-align:center;font-size:9.6px;line-height:12px;color:#1e1e1e;transform:rotate(-90deg) scaleY(1.08)">4</div><div class="t" style="left:-12.5px;top:406.80px;width:40px;height:12px;text-align:center;font-size:9.6px;line-height:12px;color:#1e1e1e;transform:rotate(-90deg) scaleY(1.08)">6</div><div class="t" style="left:-12.5px;top:386.30px;width:40px;height:12px;text-align:center;font-size:9.6px;line-height:12px;color:#1e1e1e;transform:rotate(-90deg) scaleY(1.08)">8</div><div class="t" style="left:-12.5px;top:365.80px;width:40px;height:12px;text-align:center;font-size:9.6px;line-height:12px;color:#1e1e1e;transform:rotate(-90deg) scaleY(1.08)">10</div><div class="t" style="left:-12.5px;top:345.30px;width:40px;height:12px;text-align:center;font-size:9.6px;line-height:12px;color:#1e1e1e;transform:rotate(-90deg) scaleY(1.08)">12</div><div class="t" style="left:-12.5px;top:324.80px;width:40px;height:12px;text-align:center;font-size:9.6px;line-height:12px;color:#1e1e1e;transform:rotate(-90deg) scaleY(1.08)">14</div><div class="t" style="left:-12.5px;top:304.30px;width:40px;height:12px;text-align:center;font-size:9.6px;line-height:12px;color:#1e1e1e;transform:rotate(-90deg) scaleY(1.08)">16</div><div class="t" style="left:-12.5px;top:283.80px;width:40px;height:12px;text-align:center;font-size:9.6px;line-height:12px;color:#1e1e1e;transform:rotate(-90deg) scaleY(1.08)">18</div><div class="t" style="left:-12.5px;top:263.30px;width:40px;height:12px;text-align:center;font-size:9.6px;line-height:12px;color:#1e1e1e;transform:rotate(-90deg) scaleY(1.08)">20</div><div class="t" style="left:-12.5px;top:242.80px;width:40px;height:12px;text-align:center;font-size:9.6px;line-height:12px;color:#1e1e1e;transform:rotate(-90deg) scaleY(1.08)">22</div><div class="t" style="left:-12.5px;top:222.30px;width:40px;height:12px;text-align:center;font-size:9.6px;line-height:12px;color:#1e1e1e;transform:rotate(-90deg) scaleY(1.08)">24</div><div class="t" style="left:-12.5px;top:201.80px;width:40px;height:12px;text-align:center;font-size:9.6px;line-height:12px;color:#1e1e1e;transform:rotate(-90deg) scaleY(1.08)">26</div><div class="t" style="left:-12.5px;top:181.30px;width:40px;height:12px;text-align:center;font-size:9.6px;line-height:12px;color:#1e1e1e;transform:rotate(-90deg) scaleY(1.08)">28</div><div class="t" style="left:-12.5px;top:160.80px;width:40px;height:12px;text-align:center;font-size:9.6px;line-height:12px;color:#1e1e1e;transform:rotate(-90deg) scaleY(1.08)">30</div><div class="t" style="left:-12.5px;top:140.30px;width:40px;height:12px;text-align:center;font-size:9.6px;line-height:12px;color:#1e1e1e;transform:rotate(-90deg) scaleY(1.08)">32</div><div class="t" style="left:-12.5px;top:119.80px;width:40px;height:12px;text-align:center;font-size:9.6px;line-height:12px;color:#1e1e1e;transform:rotate(-90deg) scaleY(1.08)">34</div><div class="t" style="left:-12.5px;top:99.30px;width:40px;height:12px;text-align:center;font-size:9.6px;line-height:12px;color:#1e1e1e;transform:rotate(-90deg) scaleY(1.08)">36</div><div class="t" style="left:-12.5px;top:78.80px;width:40px;height:12px;text-align:center;font-size:9.6px;line-height:12px;color:#1e1e1e;transform:rotate(-90deg) scaleY(1.08)">38</div><div class="t" style="left:-12.5px;top:58.30px;width:40px;height:12px;text-align:center;font-size:9.6px;line-height:12px;color:#1e1e1e;transform:rotate(-90deg) scaleY(1.08)">40</div><div class="t" style="left:-12.5px;top:37.80px;width:40px;height:12px;text-align:center;font-size:9.6px;line-height:12px;color:#1e1e1e;transform:rotate(-90deg) scaleY(1.08)">42</div><div class="t" style="left:-12.5px;top:17.30px;width:40px;height:12px;text-align:center;font-size:9.6px;line-height:12px;color:#1e1e1e;transform:rotate(-90deg) scaleY(1.08)">44</div><div class="t" style="left:-12.5px;top:-3.20px;width:40px;height:12px;text-align:center;font-size:9.6px;line-height:12px;color:#1e1e1e;transform:rotate(-90deg) scaleY(1.08)">46</div></div><svg class="a" style="left:120px;top:144px;" width="14" height="8" viewBox="0 0 14 8"><path d="M1.6 0.7H12.8L7.2 6.6Z" fill="#000"/></svg><svg class="a" style="left:84px;top:414px;" width="9" height="14" viewBox="0 0 9 14"><path d="M1.3 1.2V12.4L7.2 6.8Z" fill="#000"/></svg><svg class="a" style="left:95px;top:155px" width="1043" height="577" viewBox="95 155 1043 577"><rect x="95" y="155" width="1043" height="577" fill="#000"/><path d="M146.5 155V732M248.5 155V732M351.5 155V732M453.5 155V732M556.5 155V732M658.5 155V732M761.5 155V732M863.5 155V732M966.5 155V732M1068.5 155V732M95 629.5H1138M95 527.5H1138M95 424.5H1138M95 322.5H1138M95 219.5H1138" stroke="#252525" stroke-width="1"/><path d="M95 722.5h1M95 711.5h1M95 701.5h1M95 691.5h1M95 681.5h1M95 670.5h1M95 660.5h1M95 650.5h1M95 640.5h1M95 629.5h1M95 619.5h1M95 609.5h1M95 599.5h1M95 588.5h1M95 578.5h1M95 568.5h1M95 558.5h1M95 547.5h1M95 537.5h1M95 527.5h1M95 517.5h1M95 506.5h1M95 496.5h1M95 486.5h1M95 476.5h1M95 465.5h1M95 455.5h1M95 445.5h1M95 435.5h1M95 424.5h1M95 414.5h1M95 404.5h1M95 394.5h1M95 383.5h1M95 373.5h1M95 363.5h1M95 353.5h1M95 342.5h1M95 332.5h1M95 322.5h1M95 312.5h1M95 301.5h1M95 291.5h1M95 281.5h1M95 271.5h1M95 260.5h1M95 250.5h1M95 240.5h1M95 230.5h1M95 219.5h1M95 209.5h1M95 199.5h1M95 189.5h1M95 178.5h1M95 168.5h1M95 158.5h1M105 722.5h1M105 711.5h1M105 701.5h1M105 691.5h1M105 681.5h1M105 670.5h1M105 660.5h1M105 650.5h1M105 640.5h1M105 629.5h1M105 619.5h1M105 609.5h1M105 599.5h1M105 588.5h1M105 578.5h1M105 568.5h1M105 558.5h1M105 547.5h1M105 537.5h1M105 527.5h1M105 517.5h1M105 506.5h1M105 496.5h1M105 486.5h1M105 476.5h1M105 465.5h1M105 455.5h1M105 445.5h1M105 435.5h1M105 424.5h1M105 414.5h1M105 404.5h1M105 394.5h1M105 383.5h1M105 373.5h1M105 363.5h1M105 353.5h1M105 342.5h1M105 332.5h1M105 322.5h1M105 312.5h1M105 301.5h1M105 291.5h1M105 281.5h1M105 271.5h1M105 260.5h1M105 250.5h1M105 240.5h1M105 230.5h1M105 219.5h1M105 209.5h1M105 199.5h1M105 189.5h1M105 178.5h1M105 168.5h1M105 158.5h1M116 722.5h1M116 711.5h1M116 701.5h1M116 691.5h1M116 681.5h1M116 670.5h1M116 660.5h1M116 650.5h1M116 640.5h1M116 629.5h1M116 619.5h1M116 609.5h1M116 599.5h1M116 588.5h1M116 578.5h1M116 568.5h1M116 558.5h1M116 547.5h1M116 537.5h1M116 527.5h1M116 517.5h1M116 506.5h1M116 496.5h1M116 486.5h1M116 476.5h1M116 465.5h1M116 455.5h1M116 445.5h1M116 435.5h1M116 424.5h1M116 414.5h1M116 404.5h1M116 394.5h1M116 383.5h1M116 373.5h1M116 363.5h1M116 353.5h1M116 342.5h1M116 332.5h1M116 322.5h1M116 312.5h1M116 301.5h1M116 291.5h1M116 281.5h1M116 271.5h1M116 260.5h1M116 250.5h1M116 240.5h1M116 230.5h1M116 219.5h1M116 209.5h1M116 199.5h1M116 189.5h1M116 178.5h1M116 168.5h1M116 158.5h1M126 722.5h1M126 711.5h1M126 701.5h1M126 691.5h1M126 681.5h1M126 670.5h1M126 660.5h1M126 650.5h1M126 640.5h1M126 629.5h1M126 619.5h1M126 609.5h1M126 599.5h1M126 588.5h1M126 578.5h1M126 568.5h1M126 558.5h1M126 547.5h1M126 537.5h1M126 527.5h1M126 517.5h1M126 506.5h1M126 496.5h1M126 486.5h1M126 476.5h1M126 465.5h1M126 455.5h1M126 445.5h1M126 435.5h1M126 424.5h1M126 414.5h1M126 404.5h1M126 394.5h1M126 383.5h1M126 373.5h1M126 363.5h1M126 353.5h1M126 342.5h1M126 332.5h1M126 322.5h1M126 312.5h1M126 301.5h1M126 291.5h1M126 281.5h1M126 271.5h1M126 260.5h1M126 250.5h1M126 240.5h1M126 230.5h1M126 219.5h1M126 209.5h1M126 199.5h1M126 189.5h1M126 178.5h1M126 168.5h1M126 158.5h1M136 722.5h1M136 711.5h1M136 701.5h1M136 691.5h1M136 681.5h1M136 670.5h1M136 660.5h1M136 650.5h1M136 640.5h1M136 629.5h1M136 619.5h1M136 609.5h1M136 599.5h1M136 588.5h1M136 578.5h1M136 568.5h1M136 558.5h1M136 547.5h1M136 537.5h1M136 527.5h1M136 517.5h1M136 506.5h1M136 496.5h1M136 486.5h1M136 476.5h1M136 465.5h1M136 455.5h1M136 445.5h1M136 435.5h1M136 424.5h1M136 414.5h1M136 404.5h1M136 394.5h1M136 383.5h1M136 373.5h1M136 363.5h1M136 353.5h1M136 342.5h1M136 332.5h1M136 322.5h1M136 312.5h1M136 301.5h1M136 291.5h1M136 281.5h1M136 271.5h1M136 260.5h1M136 250.5h1M136 240.5h1M136 230.5h1M136 219.5h1M136 209.5h1M136 199.5h1M136 189.5h1M136 178.5h1M136 168.5h1M136 158.5h1M146 722.5h1M146 711.5h1M146 701.5h1M146 691.5h1M146 681.5h1M146 670.5h1M146 660.5h1M146 650.5h1M146 640.5h1M146 629.5h1M146 619.5h1M146 609.5h1M146 599.5h1M146 588.5h1M146 578.5h1M146 568.5h1M146 558.5h1M146 547.5h1M146 537.5h1M146 527.5h1M146 517.5h1M146 506.5h1M146 496.5h1M146 486.5h1M146 476.5h1M146 465.5h1M146 455.5h1M146 445.5h1M146 435.5h1M146 424.5h1M146 414.5h1M146 404.5h1M146 394.5h1M146 383.5h1M146 373.5h1M146 363.5h1M146 353.5h1M146 342.5h1M146 332.5h1M146 322.5h1M146 312.5h1M146 301.5h1M146 291.5h1M146 281.5h1M146 271.5h1M146 260.5h1M146 250.5h1M146 240.5h1M146 230.5h1M146 219.5h1M146 209.5h1M146 199.5h1M146 189.5h1M146 178.5h1M146 168.5h1M146 158.5h1M157 722.5h1M157 711.5h1M157 701.5h1M157 691.5h1M157 681.5h1M157 670.5h1M157 660.5h1M157 650.5h1M157 640.5h1M157 629.5h1M157 619.5h1M157 609.5h1M157 599.5h1M157 588.5h1M157 578.5h1M157 568.5h1M157 558.5h1M157 547.5h1M157 537.5h1M157 527.5h1M157 517.5h1M157 506.5h1M157 496.5h1M157 486.5h1M157 476.5h1M157 465.5h1M157 455.5h1M157 445.5h1M157 435.5h1M157 424.5h1M157 414.5h1M157 404.5h1M157 394.5h1M157 383.5h1M157 373.5h1M157 363.5h1M157 353.5h1M157 342.5h1M157 332.5h1M157 322.5h1M157 312.5h1M157 301.5h1M157 291.5h1M157 281.5h1M157 271.5h1M157 260.5h1M157 250.5h1M157 240.5h1M157 230.5h1M157 219.5h1M157 209.5h1M157 199.5h1M157 189.5h1M157 178.5h1M157 168.5h1M157 158.5h1M167 722.5h1M167 711.5h1M167 701.5h1M167 691.5h1M167 681.5h1M167 670.5h1M167 660.5h1M167 650.5h1M167 640.5h1M167 629.5h1M167 619.5h1M167 609.5h1M167 599.5h1M167 588.5h1M167 578.5h1M167 568.5h1M167 558.5h1M167 547.5h1M167 537.5h1M167 527.5h1M167 517.5h1M167 506.5h1M167 496.5h1M167 486.5h1M167 476.5h1M167 465.5h1M167 455.5h1M167 445.5h1M167 435.5h1M167 424.5h1M167 414.5h1M167 404.5h1M167 394.5h1M167 383.5h1M167 373.5h1M167 363.5h1M167 353.5h1M167 342.5h1M167 332.5h1M167 322.5h1M167 312.5h1M167 301.5h1M167 291.5h1M167 281.5h1M167 271.5h1M167 260.5h1M167 250.5h1M167 240.5h1M167 230.5h1M167 219.5h1M167 209.5h1M167 199.5h1M167 189.5h1M167 178.5h1M167 168.5h1M167 158.5h1M177 722.5h1M177 711.5h1M177 701.5h1M177 691.5h1M177 681.5h1M177 670.5h1M177 660.5h1M177 650.5h1M177 640.5h1M177 629.5h1M177 619.5h1M177 609.5h1M177 599.5h1M177 588.5h1M177 578.5h1M177 568.5h1M177 558.5h1M177 547.5h1M177 537.5h1M177 527.5h1M177 517.5h1M177 506.5h1M177 496.5h1M177 486.5h1M177 476.5h1M177 465.5h1M177 455.5h1M177 445.5h1M177 435.5h1M177 424.5h1M177 414.5h1M177 404.5h1M177 394.5h1M177 383.5h1M177 373.5h1M177 363.5h1M177 353.5h1M177 342.5h1M177 332.5h1M177 322.5h1M177 312.5h1M177 301.5h1M177 291.5h1M177 281.5h1M177 271.5h1M177 260.5h1M177 250.5h1M177 240.5h1M177 230.5h1M177 219.5h1M177 209.5h1M177 199.5h1M177 189.5h1M177 178.5h1M177 168.5h1M177 158.5h1M187 722.5h1M187 711.5h1M187 701.5h1M187 691.5h1M187 681.5h1M187 670.5h1M187 660.5h1M187 650.5h1M187 640.5h1M187 629.5h1M187 619.5h1M187 609.5h1M187 599.5h1M187 588.5h1M187 578.5h1M187 568.5h1M187 558.5h1M187 547.5h1M187 537.5h1M187 527.5h1M187 517.5h1M187 506.5h1M187 496.5h1M187 486.5h1M187 476.5h1M187 465.5h1M187 455.5h1M187 445.5h1M187 435.5h1M187 424.5h1M187 414.5h1M187 404.5h1M187 394.5h1M187 383.5h1M187 373.5h1M187 363.5h1M187 353.5h1M187 342.5h1M187 332.5h1M187 322.5h1M187 312.5h1M187 301.5h1M187 291.5h1M187 281.5h1M187 271.5h1M187 260.5h1M187 250.5h1M187 240.5h1M187 230.5h1M187 219.5h1M187 209.5h1M187 199.5h1M187 189.5h1M187 178.5h1M187 168.5h1M187 158.5h1M198 722.5h1M198 711.5h1M198 701.5h1M198 691.5h1M198 681.5h1M198 670.5h1M198 660.5h1M198 650.5h1M198 640.5h1M198 629.5h1M198 619.5h1M198 609.5h1M198 599.5h1M198 588.5h1M198 578.5h1M198 568.5h1M198 558.5h1M198 547.5h1M198 537.5h1M198 527.5h1M198 517.5h1M198 506.5h1M198 496.5h1M198 486.5h1M198 476.5h1M198 465.5h1M198 455.5h1M198 445.5h1M198 435.5h1M198 424.5h1M198 414.5h1M198 404.5h1M198 394.5h1M198 383.5h1M198 373.5h1M198 363.5h1M198 353.5h1M198 342.5h1M198 332.5h1M198 322.5h1M198 312.5h1M198 301.5h1M198 291.5h1M198 281.5h1M198 271.5h1M198 260.5h1M198 250.5h1M198 240.5h1M198 230.5h1M198 219.5h1M198 209.5h1M198 199.5h1M198 189.5h1M198 178.5h1M198 168.5h1M198 158.5h1M208 722.5h1M208 711.5h1M208 701.5h1M208 691.5h1M208 681.5h1M208 670.5h1M208 660.5h1M208 650.5h1M208 640.5h1M208 629.5h1M208 619.5h1M208 609.5h1M208 599.5h1M208 588.5h1M208 578.5h1M208 568.5h1M208 558.5h1M208 547.5h1M208 537.5h1M208 527.5h1M208 517.5h1M208 506.5h1M208 496.5h1M208 486.5h1M208 476.5h1M208 465.5h1M208 455.5h1M208 445.5h1M208 435.5h1M208 424.5h1M208 414.5h1M208 404.5h1M208 394.5h1M208 383.5h1M208 373.5h1M208 363.5h1M208 353.5h1M208 342.5h1M208 332.5h1M208 322.5h1M208 312.5h1M208 301.5h1M208 291.5h1M208 281.5h1M208 271.5h1M208 260.5h1M208 250.5h1M208 240.5h1M208 230.5h1M208 219.5h1M208 209.5h1M208 199.5h1M208 189.5h1M208 178.5h1M208 168.5h1M208 158.5h1M218 722.5h1M218 711.5h1M218 701.5h1M218 691.5h1M218 681.5h1M218 670.5h1M218 660.5h1M218 650.5h1M218 640.5h1M218 629.5h1M218 619.5h1M218 609.5h1M218 599.5h1M218 588.5h1M218 578.5h1M218 568.5h1M218 558.5h1M218 547.5h1M218 537.5h1M218 527.5h1M218 517.5h1M218 506.5h1M218 496.5h1M218 486.5h1M218 476.5h1M218 465.5h1M218 455.5h1M218 445.5h1M218 435.5h1M218 424.5h1M218 414.5h1M218 404.5h1M218 394.5h1M218 383.5h1M218 373.5h1M218 363.5h1M218 353.5h1M218 342.5h1M218 332.5h1M218 322.5h1M218 312.5h1M218 301.5h1M218 291.5h1M218 281.5h1M218 271.5h1M218 260.5h1M218 250.5h1M218 240.5h1M218 230.5h1M218 219.5h1M218 209.5h1M218 199.5h1M218 189.5h1M218 178.5h1M218 168.5h1M218 158.5h1M228 722.5h1M228 711.5h1M228 701.5h1M228 691.5h1M228 681.5h1M228 670.5h1M228 660.5h1M228 650.5h1M228 640.5h1M228 629.5h1M228 619.5h1M228 609.5h1M228 599.5h1M228 588.5h1M228 578.5h1M228 568.5h1M228 558.5h1M228 547.5h1M228 537.5h1M228 527.5h1M228 517.5h1M228 506.5h1M228 496.5h1M228 486.5h1M228 476.5h1M228 465.5h1M228 455.5h1M228 445.5h1M228 435.5h1M228 424.5h1M228 414.5h1M228 404.5h1M228 394.5h1M228 383.5h1M228 373.5h1M228 363.5h1M228 353.5h1M228 342.5h1M228 332.5h1M228 322.5h1M228 312.5h1M228 301.5h1M228 291.5h1M228 281.5h1M228 271.5h1M228 260.5h1M228 250.5h1M228 240.5h1M228 230.5h1M228 219.5h1M228 209.5h1M228 199.5h1M228 189.5h1M228 178.5h1M228 168.5h1M228 158.5h1M239 722.5h1M239 711.5h1M239 701.5h1M239 691.5h1M239 681.5h1M239 670.5h1M239 660.5h1M239 650.5h1M239 640.5h1M239 629.5h1M239 619.5h1M239 609.5h1M239 599.5h1M239 588.5h1M239 578.5h1M239 568.5h1M239 558.5h1M239 547.5h1M239 537.5h1M239 527.5h1M239 517.5h1M239 506.5h1M239 496.5h1M239 486.5h1M239 476.5h1M239 465.5h1M239 455.5h1M239 445.5h1M239 435.5h1M239 424.5h1M239 414.5h1M239 404.5h1M239 394.5h1M239 383.5h1M239 373.5h1M239 363.5h1M239 353.5h1M239 342.5h1M239 332.5h1M239 322.5h1M239 312.5h1M239 301.5h1M239 291.5h1M239 281.5h1M239 271.5h1M239 260.5h1M239 250.5h1M239 240.5h1M239 230.5h1M239 219.5h1M239 209.5h1M239 199.5h1M239 189.5h1M239 178.5h1M239 168.5h1M239 158.5h1M249 722.5h1M249 711.5h1M249 701.5h1M249 691.5h1M249 681.5h1M249 670.5h1M249 660.5h1M249 650.5h1M249 640.5h1M249 629.5h1M249 619.5h1M249 609.5h1M249 599.5h1M249 588.5h1M249 578.5h1M249 568.5h1M249 558.5h1M249 547.5h1M249 537.5h1M249 527.5h1M249 517.5h1M249 506.5h1M249 496.5h1M249 486.5h1M249 476.5h1M249 465.5h1M249 455.5h1M249 445.5h1M249 435.5h1M249 424.5h1M249 414.5h1M249 404.5h1M249 394.5h1M249 383.5h1M249 373.5h1M249 363.5h1M249 353.5h1M249 342.5h1M249 332.5h1M249 322.5h1M249 312.5h1M249 301.5h1M249 291.5h1M249 281.5h1M249 271.5h1M249 260.5h1M249 250.5h1M249 240.5h1M249 230.5h1M249 219.5h1M249 209.5h1M249 199.5h1M249 189.5h1M249 178.5h1M249 168.5h1M249 158.5h1M259 722.5h1M259 711.5h1M259 701.5h1M259 691.5h1M259 681.5h1M259 670.5h1M259 660.5h1M259 650.5h1M259 640.5h1M259 629.5h1M259 619.5h1M259 609.5h1M259 599.5h1M259 588.5h1M259 578.5h1M259 568.5h1M259 558.5h1M259 547.5h1M259 537.5h1M259 527.5h1M259 517.5h1M259 506.5h1M259 496.5h1M259 486.5h1M259 476.5h1M259 465.5h1M259 455.5h1M259 445.5h1M259 435.5h1M259 424.5h1M259 414.5h1M259 404.5h1M259 394.5h1M259 383.5h1M259 373.5h1M259 363.5h1M259 353.5h1M259 342.5h1M259 332.5h1M259 322.5h1M259 312.5h1M259 301.5h1M259 291.5h1M259 281.5h1M259 271.5h1M259 260.5h1M259 250.5h1M259 240.5h1M259 230.5h1M259 219.5h1M259 209.5h1M259 199.5h1M259 189.5h1M259 178.5h1M259 168.5h1M259 158.5h1M269 722.5h1M269 711.5h1M269 701.5h1M269 691.5h1M269 681.5h1M269 670.5h1M269 660.5h1M269 650.5h1M269 640.5h1M269 629.5h1M269 619.5h1M269 609.5h1M269 599.5h1M269 588.5h1M269 578.5h1M269 568.5h1M269 558.5h1M269 547.5h1M269 537.5h1M269 527.5h1M269 517.5h1M269 506.5h1M269 496.5h1M269 486.5h1M269 476.5h1M269 465.5h1M269 455.5h1M269 445.5h1M269 435.5h1M269 424.5h1M269 414.5h1M269 404.5h1M269 394.5h1M269 383.5h1M269 373.5h1M269 363.5h1M269 353.5h1M269 342.5h1M269 332.5h1M269 322.5h1M269 312.5h1M269 301.5h1M269 291.5h1M269 281.5h1M269 271.5h1M269 260.5h1M269 250.5h1M269 240.5h1M269 230.5h1M269 219.5h1M269 209.5h1M269 199.5h1M269 189.5h1M269 178.5h1M269 168.5h1M269 158.5h1M280 722.5h1M280 711.5h1M280 701.5h1M280 691.5h1M280 681.5h1M280 670.5h1M280 660.5h1M280 650.5h1M280 640.5h1M280 629.5h1M280 619.5h1M280 609.5h1M280 599.5h1M280 588.5h1M280 578.5h1M280 568.5h1M280 558.5h1M280 547.5h1M280 537.5h1M280 527.5h1M280 517.5h1M280 506.5h1M280 496.5h1M280 486.5h1M280 476.5h1M280 465.5h1M280 455.5h1M280 445.5h1M280 435.5h1M280 424.5h1M280 414.5h1M280 404.5h1M280 394.5h1M280 383.5h1M280 373.5h1M280 363.5h1M280 353.5h1M280 342.5h1M280 332.5h1M280 322.5h1M280 312.5h1M280 301.5h1M280 291.5h1M280 281.5h1M280 271.5h1M280 260.5h1M280 250.5h1M280 240.5h1M280 230.5h1M280 219.5h1M280 209.5h1M280 199.5h1M280 189.5h1M280 178.5h1M280 168.5h1M280 158.5h1M290 722.5h1M290 711.5h1M290 701.5h1M290 691.5h1M290 681.5h1M290 670.5h1M290 660.5h1M290 650.5h1M290 640.5h1M290 629.5h1M290 619.5h1M290 609.5h1M290 599.5h1M290 588.5h1M290 578.5h1M290 568.5h1M290 558.5h1M290 547.5h1M290 537.5h1M290 527.5h1M290 517.5h1M290 506.5h1M290 496.5h1M290 486.5h1M290 476.5h1M290 465.5h1M290 455.5h1M290 445.5h1M290 435.5h1M290 424.5h1M290 414.5h1M290 404.5h1M290 394.5h1M290 383.5h1M290 373.5h1M290 363.5h1M290 353.5h1M290 342.5h1M290 332.5h1M290 322.5h1M290 312.5h1M290 301.5h1M290 291.5h1M290 281.5h1M290 271.5h1M290 260.5h1M290 250.5h1M290 240.5h1M290 230.5h1M290 219.5h1M290 209.5h1M290 199.5h1M290 189.5h1M290 178.5h1M290 168.5h1M290 158.5h1M300 722.5h1M300 711.5h1M300 701.5h1M300 691.5h1M300 681.5h1M300 670.5h1M300 660.5h1M300 650.5h1M300 640.5h1M300 629.5h1M300 619.5h1M300 609.5h1M300 599.5h1M300 588.5h1M300 578.5h1M300 568.5h1M300 558.5h1M300 547.5h1M300 537.5h1M300 527.5h1M300 517.5h1M300 506.5h1M300 496.5h1M300 486.5h1M300 476.5h1M300 465.5h1M300 455.5h1M300 445.5h1M300 435.5h1M300 424.5h1M300 414.5h1M300 404.5h1M300 394.5h1M300 383.5h1M300 373.5h1M300 363.5h1M300 353.5h1M300 342.5h1M300 332.5h1M300 322.5h1M300 312.5h1M300 301.5h1M300 291.5h1M300 281.5h1M300 271.5h1M300 260.5h1M300 250.5h1M300 240.5h1M300 230.5h1M300 219.5h1M300 209.5h1M300 199.5h1M300 189.5h1M300 178.5h1M300 168.5h1M300 158.5h1M310 722.5h1M310 711.5h1M310 701.5h1M310 691.5h1M310 681.5h1M310 670.5h1M310 660.5h1M310 650.5h1M310 640.5h1M310 629.5h1M310 619.5h1M310 609.5h1M310 599.5h1M310 588.5h1M310 578.5h1M310 568.5h1M310 558.5h1M310 547.5h1M310 537.5h1M310 527.5h1M310 517.5h1M310 506.5h1M310 496.5h1M310 486.5h1M310 476.5h1M310 465.5h1M310 455.5h1M310 445.5h1M310 435.5h1M310 424.5h1M310 414.5h1M310 404.5h1M310 394.5h1M310 383.5h1M310 373.5h1M310 363.5h1M310 353.5h1M310 342.5h1M310 332.5h1M310 322.5h1M310 312.5h1M310 301.5h1M310 291.5h1M310 281.5h1M310 271.5h1M310 260.5h1M310 250.5h1M310 240.5h1M310 230.5h1M310 219.5h1M310 209.5h1M310 199.5h1M310 189.5h1M310 178.5h1M310 168.5h1M310 158.5h1M321 722.5h1M321 711.5h1M321 701.5h1M321 691.5h1M321 681.5h1M321 670.5h1M321 660.5h1M321 650.5h1M321 640.5h1M321 629.5h1M321 619.5h1M321 609.5h1M321 599.5h1M321 588.5h1M321 578.5h1M321 568.5h1M321 558.5h1M321 547.5h1M321 537.5h1M321 527.5h1M321 517.5h1M321 506.5h1M321 496.5h1M321 486.5h1M321 476.5h1M321 465.5h1M321 455.5h1M321 445.5h1M321 435.5h1M321 424.5h1M321 414.5h1M321 404.5h1M321 394.5h1M321 383.5h1M321 373.5h1M321 363.5h1M321 353.5h1M321 342.5h1M321 332.5h1M321 322.5h1M321 312.5h1M321 301.5h1M321 291.5h1M321 281.5h1M321 271.5h1M321 260.5h1M321 250.5h1M321 240.5h1M321 230.5h1M321 219.5h1M321 209.5h1M321 199.5h1M321 189.5h1M321 178.5h1M321 168.5h1M321 158.5h1M331 722.5h1M331 711.5h1M331 701.5h1M331 691.5h1M331 681.5h1M331 670.5h1M331 660.5h1M331 650.5h1M331 640.5h1M331 629.5h1M331 619.5h1M331 609.5h1M331 599.5h1M331 588.5h1M331 578.5h1M331 568.5h1M331 558.5h1M331 547.5h1M331 537.5h1M331 527.5h1M331 517.5h1M331 506.5h1M331 496.5h1M331 486.5h1M331 476.5h1M331 465.5h1M331 455.5h1M331 445.5h1M331 435.5h1M331 424.5h1M331 414.5h1M331 404.5h1M331 394.5h1M331 383.5h1M331 373.5h1M331 363.5h1M331 353.5h1M331 342.5h1M331 332.5h1M331 322.5h1M331 312.5h1M331 301.5h1M331 291.5h1M331 281.5h1M331 271.5h1M331 260.5h1M331 250.5h1M331 240.5h1M331 230.5h1M331 219.5h1M331 209.5h1M331 199.5h1M331 189.5h1M331 178.5h1M331 168.5h1M331 158.5h1M341 722.5h1M341 711.5h1M341 701.5h1M341 691.5h1M341 681.5h1M341 670.5h1M341 660.5h1M341 650.5h1M341 640.5h1M341 629.5h1M341 619.5h1M341 609.5h1M341 599.5h1M341 588.5h1M341 578.5h1M341 568.5h1M341 558.5h1M341 547.5h1M341 537.5h1M341 527.5h1M341 517.5h1M341 506.5h1M341 496.5h1M341 486.5h1M341 476.5h1M341 465.5h1M341 455.5h1M341 445.5h1M341 435.5h1M341 424.5h1M341 414.5h1M341 404.5h1M341 394.5h1M341 383.5h1M341 373.5h1M341 363.5h1M341 353.5h1M341 342.5h1M341 332.5h1M341 322.5h1M341 312.5h1M341 301.5h1M341 291.5h1M341 281.5h1M341 271.5h1M341 260.5h1M341 250.5h1M341 240.5h1M341 230.5h1M341 219.5h1M341 209.5h1M341 199.5h1M341 189.5h1M341 178.5h1M341 168.5h1M341 158.5h1M351 722.5h1M351 711.5h1M351 701.5h1M351 691.5h1M351 681.5h1M351 670.5h1M351 660.5h1M351 650.5h1M351 640.5h1M351 629.5h1M351 619.5h1M351 609.5h1M351 599.5h1M351 588.5h1M351 578.5h1M351 568.5h1M351 558.5h1M351 547.5h1M351 537.5h1M351 527.5h1M351 517.5h1M351 506.5h1M351 496.5h1M351 486.5h1M351 476.5h1M351 465.5h1M351 455.5h1M351 445.5h1M351 435.5h1M351 424.5h1M351 414.5h1M351 404.5h1M351 394.5h1M351 383.5h1M351 373.5h1M351 363.5h1M351 353.5h1M351 342.5h1M351 332.5h1M351 322.5h1M351 312.5h1M351 301.5h1M351 291.5h1M351 281.5h1M351 271.5h1M351 260.5h1M351 250.5h1M351 240.5h1M351 230.5h1M351 219.5h1M351 209.5h1M351 199.5h1M351 189.5h1M351 178.5h1M351 168.5h1M351 158.5h1M362 722.5h1M362 711.5h1M362 701.5h1M362 691.5h1M362 681.5h1M362 670.5h1M362 660.5h1M362 650.5h1M362 640.5h1M362 629.5h1M362 619.5h1M362 609.5h1M362 599.5h1M362 588.5h1M362 578.5h1M362 568.5h1M362 558.5h1M362 547.5h1M362 537.5h1M362 527.5h1M362 517.5h1M362 506.5h1M362 496.5h1M362 486.5h1M362 476.5h1M362 465.5h1M362 455.5h1M362 445.5h1M362 435.5h1M362 424.5h1M362 414.5h1M362 404.5h1M362 394.5h1M362 383.5h1M362 373.5h1M362 363.5h1M362 353.5h1M362 342.5h1M362 332.5h1M362 322.5h1M362 312.5h1M362 301.5h1M362 291.5h1M362 281.5h1M362 271.5h1M362 260.5h1M362 250.5h1M362 240.5h1M362 230.5h1M362 219.5h1M362 209.5h1M362 199.5h1M362 189.5h1M362 178.5h1M362 168.5h1M362 158.5h1M372 722.5h1M372 711.5h1M372 701.5h1M372 691.5h1M372 681.5h1M372 670.5h1M372 660.5h1M372 650.5h1M372 640.5h1M372 629.5h1M372 619.5h1M372 609.5h1M372 599.5h1M372 588.5h1M372 578.5h1M372 568.5h1M372 558.5h1M372 547.5h1M372 537.5h1M372 527.5h1M372 517.5h1M372 506.5h1M372 496.5h1M372 486.5h1M372 476.5h1M372 465.5h1M372 455.5h1M372 445.5h1M372 435.5h1M372 424.5h1M372 414.5h1M372 404.5h1M372 394.5h1M372 383.5h1M372 373.5h1M372 363.5h1M372 353.5h1M372 342.5h1M372 332.5h1M372 322.5h1M372 312.5h1M372 301.5h1M372 291.5h1M372 281.5h1M372 271.5h1M372 260.5h1M372 250.5h1M372 240.5h1M372 230.5h1M372 219.5h1M372 209.5h1M372 199.5h1M372 189.5h1M372 178.5h1M372 168.5h1M372 158.5h1M382 722.5h1M382 711.5h1M382 701.5h1M382 691.5h1M382 681.5h1M382 670.5h1M382 660.5h1M382 650.5h1M382 640.5h1M382 629.5h1M382 619.5h1M382 609.5h1M382 599.5h1M382 588.5h1M382 578.5h1M382 568.5h1M382 558.5h1M382 547.5h1M382 537.5h1M382 527.5h1M382 517.5h1M382 506.5h1M382 496.5h1M382 486.5h1M382 476.5h1M382 465.5h1M382 455.5h1M382 445.5h1M382 435.5h1M382 424.5h1M382 414.5h1M382 404.5h1M382 394.5h1M382 383.5h1M382 373.5h1M382 363.5h1M382 353.5h1M382 342.5h1M382 332.5h1M382 322.5h1M382 312.5h1M382 301.5h1M382 291.5h1M382 281.5h1M382 271.5h1M382 260.5h1M382 250.5h1M382 240.5h1M382 230.5h1M382 219.5h1M382 209.5h1M382 199.5h1M382 189.5h1M382 178.5h1M382 168.5h1M382 158.5h1M392 722.5h1M392 711.5h1M392 701.5h1M392 691.5h1M392 681.5h1M392 670.5h1M392 660.5h1M392 650.5h1M392 640.5h1M392 629.5h1M392 619.5h1M392 609.5h1M392 599.5h1M392 588.5h1M392 578.5h1M392 568.5h1M392 558.5h1M392 547.5h1M392 537.5h1M392 527.5h1M392 517.5h1M392 506.5h1M392 496.5h1M392 486.5h1M392 476.5h1M392 465.5h1M392 455.5h1M392 445.5h1M392 435.5h1M392 424.5h1M392 414.5h1M392 404.5h1M392 394.5h1M392 383.5h1M392 373.5h1M392 363.5h1M392 353.5h1M392 342.5h1M392 332.5h1M392 322.5h1M392 312.5h1M392 301.5h1M392 291.5h1M392 281.5h1M392 271.5h1M392 260.5h1M392 250.5h1M392 240.5h1M392 230.5h1M392 219.5h1M392 209.5h1M392 199.5h1M392 189.5h1M392 178.5h1M392 168.5h1M392 158.5h1M403 722.5h1M403 711.5h1M403 701.5h1M403 691.5h1M403 681.5h1M403 670.5h1M403 660.5h1M403 650.5h1M403 640.5h1M403 629.5h1M403 619.5h1M403 609.5h1M403 599.5h1M403 588.5h1M403 578.5h1M403 568.5h1M403 558.5h1M403 547.5h1M403 537.5h1M403 527.5h1M403 517.5h1M403 506.5h1M403 496.5h1M403 486.5h1M403 476.5h1M403 465.5h1M403 455.5h1M403 445.5h1M403 435.5h1M403 424.5h1M403 414.5h1M403 404.5h1M403 394.5h1M403 383.5h1M403 373.5h1M403 363.5h1M403 353.5h1M403 342.5h1M403 332.5h1M403 322.5h1M403 312.5h1M403 301.5h1M403 291.5h1M403 281.5h1M403 271.5h1M403 260.5h1M403 250.5h1M403 240.5h1M403 230.5h1M403 219.5h1M403 209.5h1M403 199.5h1M403 189.5h1M403 178.5h1M403 168.5h1M403 158.5h1M413 722.5h1M413 711.5h1M413 701.5h1M413 691.5h1M413 681.5h1M413 670.5h1M413 660.5h1M413 650.5h1M413 640.5h1M413 629.5h1M413 619.5h1M413 609.5h1M413 599.5h1M413 588.5h1M413 578.5h1M413 568.5h1M413 558.5h1M413 547.5h1M413 537.5h1M413 527.5h1M413 517.5h1M413 506.5h1M413 496.5h1M413 486.5h1M413 476.5h1M413 465.5h1M413 455.5h1M413 445.5h1M413 435.5h1M413 424.5h1M413 414.5h1M413 404.5h1M413 394.5h1M413 383.5h1M413 373.5h1M413 363.5h1M413 353.5h1M413 342.5h1M413 332.5h1M413 322.5h1M413 312.5h1M413 301.5h1M413 291.5h1M413 281.5h1M413 271.5h1M413 260.5h1M413 250.5h1M413 240.5h1M413 230.5h1M413 219.5h1M413 209.5h1M413 199.5h1M413 189.5h1M413 178.5h1M413 168.5h1M413 158.5h1M423 722.5h1M423 711.5h1M423 701.5h1M423 691.5h1M423 681.5h1M423 670.5h1M423 660.5h1M423 650.5h1M423 640.5h1M423 629.5h1M423 619.5h1M423 609.5h1M423 599.5h1M423 588.5h1M423 578.5h1M423 568.5h1M423 558.5h1M423 547.5h1M423 537.5h1M423 527.5h1M423 517.5h1M423 506.5h1M423 496.5h1M423 486.5h1M423 476.5h1M423 465.5h1M423 455.5h1M423 445.5h1M423 435.5h1M423 424.5h1M423 414.5h1M423 404.5h1M423 394.5h1M423 383.5h1M423 373.5h1M423 363.5h1M423 353.5h1M423 342.5h1M423 332.5h1M423 322.5h1M423 312.5h1M423 301.5h1M423 291.5h1M423 281.5h1M423 271.5h1M423 260.5h1M423 250.5h1M423 240.5h1M423 230.5h1M423 219.5h1M423 209.5h1M423 199.5h1M423 189.5h1M423 178.5h1M423 168.5h1M423 158.5h1M433 722.5h1M433 711.5h1M433 701.5h1M433 691.5h1M433 681.5h1M433 670.5h1M433 660.5h1M433 650.5h1M433 640.5h1M433 629.5h1M433 619.5h1M433 609.5h1M433 599.5h1M433 588.5h1M433 578.5h1M433 568.5h1M433 558.5h1M433 547.5h1M433 537.5h1M433 527.5h1M433 517.5h1M433 506.5h1M433 496.5h1M433 486.5h1M433 476.5h1M433 465.5h1M433 455.5h1M433 445.5h1M433 435.5h1M433 424.5h1M433 414.5h1M433 404.5h1M433 394.5h1M433 383.5h1M433 373.5h1M433 363.5h1M433 353.5h1M433 342.5h1M433 332.5h1M433 322.5h1M433 312.5h1M433 301.5h1M433 291.5h1M433 281.5h1M433 271.5h1M433 260.5h1M433 250.5h1M433 240.5h1M433 230.5h1M433 219.5h1M433 209.5h1M433 199.5h1M433 189.5h1M433 178.5h1M433 168.5h1M433 158.5h1M444 722.5h1M444 711.5h1M444 701.5h1M444 691.5h1M444 681.5h1M444 670.5h1M444 660.5h1M444 650.5h1M444 640.5h1M444 629.5h1M444 619.5h1M444 609.5h1M444 599.5h1M444 588.5h1M444 578.5h1M444 568.5h1M444 558.5h1M444 547.5h1M444 537.5h1M444 527.5h1M444 517.5h1M444 506.5h1M444 496.5h1M444 486.5h1M444 476.5h1M444 465.5h1M444 455.5h1M444 445.5h1M444 435.5h1M444 424.5h1M444 414.5h1M444 404.5h1M444 394.5h1M444 383.5h1M444 373.5h1M444 363.5h1M444 353.5h1M444 342.5h1M444 332.5h1M444 322.5h1M444 312.5h1M444 301.5h1M444 291.5h1M444 281.5h1M444 271.5h1M444 260.5h1M444 250.5h1M444 240.5h1M444 230.5h1M444 219.5h1M444 209.5h1M444 199.5h1M444 189.5h1M444 178.5h1M444 168.5h1M444 158.5h1M454 722.5h1M454 711.5h1M454 701.5h1M454 691.5h1M454 681.5h1M454 670.5h1M454 660.5h1M454 650.5h1M454 640.5h1M454 629.5h1M454 619.5h1M454 609.5h1M454 599.5h1M454 588.5h1M454 578.5h1M454 568.5h1M454 558.5h1M454 547.5h1M454 537.5h1M454 527.5h1M454 517.5h1M454 506.5h1M454 496.5h1M454 486.5h1M454 476.5h1M454 465.5h1M454 455.5h1M454 445.5h1M454 435.5h1M454 424.5h1M454 414.5h1M454 404.5h1M454 394.5h1M454 383.5h1M454 373.5h1M454 363.5h1M454 353.5h1M454 342.5h1M454 332.5h1M454 322.5h1M454 312.5h1M454 301.5h1M454 291.5h1M454 281.5h1M454 271.5h1M454 260.5h1M454 250.5h1M454 240.5h1M454 230.5h1M454 219.5h1M454 209.5h1M454 199.5h1M454 189.5h1M454 178.5h1M454 168.5h1M454 158.5h1M464 722.5h1M464 711.5h1M464 701.5h1M464 691.5h1M464 681.5h1M464 670.5h1M464 660.5h1M464 650.5h1M464 640.5h1M464 629.5h1M464 619.5h1M464 609.5h1M464 599.5h1M464 588.5h1M464 578.5h1M464 568.5h1M464 558.5h1M464 547.5h1M464 537.5h1M464 527.5h1M464 517.5h1M464 506.5h1M464 496.5h1M464 486.5h1M464 476.5h1M464 465.5h1M464 455.5h1M464 445.5h1M464 435.5h1M464 424.5h1M464 414.5h1M464 404.5h1M464 394.5h1M464 383.5h1M464 373.5h1M464 363.5h1M464 353.5h1M464 342.5h1M464 332.5h1M464 322.5h1M464 312.5h1M464 301.5h1M464 291.5h1M464 281.5h1M464 271.5h1M464 260.5h1M464 250.5h1M464 240.5h1M464 230.5h1M464 219.5h1M464 209.5h1M464 199.5h1M464 189.5h1M464 178.5h1M464 168.5h1M464 158.5h1M474 722.5h1M474 711.5h1M474 701.5h1M474 691.5h1M474 681.5h1M474 670.5h1M474 660.5h1M474 650.5h1M474 640.5h1M474 629.5h1M474 619.5h1M474 609.5h1M474 599.5h1M474 588.5h1M474 578.5h1M474 568.5h1M474 558.5h1M474 547.5h1M474 537.5h1M474 527.5h1M474 517.5h1M474 506.5h1M474 496.5h1M474 486.5h1M474 476.5h1M474 465.5h1M474 455.5h1M474 445.5h1M474 435.5h1M474 424.5h1M474 414.5h1M474 404.5h1M474 394.5h1M474 383.5h1M474 373.5h1M474 363.5h1M474 353.5h1M474 342.5h1M474 332.5h1M474 322.5h1M474 312.5h1M474 301.5h1M474 291.5h1M474 281.5h1M474 271.5h1M474 260.5h1M474 250.5h1M474 240.5h1M474 230.5h1M474 219.5h1M474 209.5h1M474 199.5h1M474 189.5h1M474 178.5h1M474 168.5h1M474 158.5h1M484 722.5h1M484 711.5h1M484 701.5h1M484 691.5h1M484 681.5h1M484 670.5h1M484 660.5h1M484 650.5h1M484 640.5h1M484 629.5h1M484 619.5h1M484 609.5h1M484 599.5h1M484 588.5h1M484 578.5h1M484 568.5h1M484 558.5h1M484 547.5h1M484 537.5h1M484 527.5h1M484 517.5h1M484 506.5h1M484 496.5h1M484 486.5h1M484 476.5h1M484 465.5h1M484 455.5h1M484 445.5h1M484 435.5h1M484 424.5h1M484 414.5h1M484 404.5h1M484 394.5h1M484 383.5h1M484 373.5h1M484 363.5h1M484 353.5h1M484 342.5h1M484 332.5h1M484 322.5h1M484 312.5h1M484 301.5h1M484 291.5h1M484 281.5h1M484 271.5h1M484 260.5h1M484 250.5h1M484 240.5h1M484 230.5h1M484 219.5h1M484 209.5h1M484 199.5h1M484 189.5h1M484 178.5h1M484 168.5h1M484 158.5h1M495 722.5h1M495 711.5h1M495 701.5h1M495 691.5h1M495 681.5h1M495 670.5h1M495 660.5h1M495 650.5h1M495 640.5h1M495 629.5h1M495 619.5h1M495 609.5h1M495 599.5h1M495 588.5h1M495 578.5h1M495 568.5h1M495 558.5h1M495 547.5h1M495 537.5h1M495 527.5h1M495 517.5h1M495 506.5h1M495 496.5h1M495 486.5h1M495 476.5h1M495 465.5h1M495 455.5h1M495 445.5h1M495 435.5h1M495 424.5h1M495 414.5h1M495 404.5h1M495 394.5h1M495 383.5h1M495 373.5h1M495 363.5h1M495 353.5h1M495 342.5h1M495 332.5h1M495 322.5h1M495 312.5h1M495 301.5h1M495 291.5h1M495 281.5h1M495 271.5h1M495 260.5h1M495 250.5h1M495 240.5h1M495 230.5h1M495 219.5h1M495 209.5h1M495 199.5h1M495 189.5h1M495 178.5h1M495 168.5h1M495 158.5h1M505 722.5h1M505 711.5h1M505 701.5h1M505 691.5h1M505 681.5h1M505 670.5h1M505 660.5h1M505 650.5h1M505 640.5h1M505 629.5h1M505 619.5h1M505 609.5h1M505 599.5h1M505 588.5h1M505 578.5h1M505 568.5h1M505 558.5h1M505 547.5h1M505 537.5h1M505 527.5h1M505 517.5h1M505 506.5h1M505 496.5h1M505 486.5h1M505 476.5h1M505 465.5h1M505 455.5h1M505 445.5h1M505 435.5h1M505 424.5h1M505 414.5h1M505 404.5h1M505 394.5h1M505 383.5h1M505 373.5h1M505 363.5h1M505 353.5h1M505 342.5h1M505 332.5h1M505 322.5h1M505 312.5h1M505 301.5h1M505 291.5h1M505 281.5h1M505 271.5h1M505 260.5h1M505 250.5h1M505 240.5h1M505 230.5h1M505 219.5h1M505 209.5h1M505 199.5h1M505 189.5h1M505 178.5h1M505 168.5h1M505 158.5h1M515 722.5h1M515 711.5h1M515 701.5h1M515 691.5h1M515 681.5h1M515 670.5h1M515 660.5h1M515 650.5h1M515 640.5h1M515 629.5h1M515 619.5h1M515 609.5h1M515 599.5h1M515 588.5h1M515 578.5h1M515 568.5h1M515 558.5h1M515 547.5h1M515 537.5h1M515 527.5h1M515 517.5h1M515 506.5h1M515 496.5h1M515 486.5h1M515 476.5h1M515 465.5h1M515 455.5h1M515 445.5h1M515 435.5h1M515 424.5h1M515 414.5h1M515 404.5h1M515 394.5h1M515 383.5h1M515 373.5h1M515 363.5h1M515 353.5h1M515 342.5h1M515 332.5h1M515 322.5h1M515 312.5h1M515 301.5h1M515 291.5h1M515 281.5h1M515 271.5h1M515 260.5h1M515 250.5h1M515 240.5h1M515 230.5h1M515 219.5h1M515 209.5h1M515 199.5h1M515 189.5h1M515 178.5h1M515 168.5h1M515 158.5h1M525 722.5h1M525 711.5h1M525 701.5h1M525 691.5h1M525 681.5h1M525 670.5h1M525 660.5h1M525 650.5h1M525 640.5h1M525 629.5h1M525 619.5h1M525 609.5h1M525 599.5h1M525 588.5h1M525 578.5h1M525 568.5h1M525 558.5h1M525 547.5h1M525 537.5h1M525 527.5h1M525 517.5h1M525 506.5h1M525 496.5h1M525 486.5h1M525 476.5h1M525 465.5h1M525 455.5h1M525 445.5h1M525 435.5h1M525 424.5h1M525 414.5h1M525 404.5h1M525 394.5h1M525 383.5h1M525 373.5h1M525 363.5h1M525 353.5h1M525 342.5h1M525 332.5h1M525 322.5h1M525 312.5h1M525 301.5h1M525 291.5h1M525 281.5h1M525 271.5h1M525 260.5h1M525 250.5h1M525 240.5h1M525 230.5h1M525 219.5h1M525 209.5h1M525 199.5h1M525 189.5h1M525 178.5h1M525 168.5h1M525 158.5h1M536 722.5h1M536 711.5h1M536 701.5h1M536 691.5h1M536 681.5h1M536 670.5h1M536 660.5h1M536 650.5h1M536 640.5h1M536 629.5h1M536 619.5h1M536 609.5h1M536 599.5h1M536 588.5h1M536 578.5h1M536 568.5h1M536 558.5h1M536 547.5h1M536 537.5h1M536 527.5h1M536 517.5h1M536 506.5h1M536 496.5h1M536 486.5h1M536 476.5h1M536 465.5h1M536 455.5h1M536 445.5h1M536 435.5h1M536 424.5h1M536 414.5h1M536 404.5h1M536 394.5h1M536 383.5h1M536 373.5h1M536 363.5h1M536 353.5h1M536 342.5h1M536 332.5h1M536 322.5h1M536 312.5h1M536 301.5h1M536 291.5h1M536 281.5h1M536 271.5h1M536 260.5h1M536 250.5h1M536 240.5h1M536 230.5h1M536 219.5h1M536 209.5h1M536 199.5h1M536 189.5h1M536 178.5h1M536 168.5h1M536 158.5h1M546 722.5h1M546 711.5h1M546 701.5h1M546 691.5h1M546 681.5h1M546 670.5h1M546 660.5h1M546 650.5h1M546 640.5h1M546 629.5h1M546 619.5h1M546 609.5h1M546 599.5h1M546 588.5h1M546 578.5h1M546 568.5h1M546 558.5h1M546 547.5h1M546 537.5h1M546 527.5h1M546 517.5h1M546 506.5h1M546 496.5h1M546 486.5h1M546 476.5h1M546 465.5h1M546 455.5h1M546 445.5h1M546 435.5h1M546 424.5h1M546 414.5h1M546 404.5h1M546 394.5h1M546 383.5h1M546 373.5h1M546 363.5h1M546 353.5h1M546 342.5h1M546 332.5h1M546 322.5h1M546 312.5h1M546 301.5h1M546 291.5h1M546 281.5h1M546 271.5h1M546 260.5h1M546 250.5h1M546 240.5h1M546 230.5h1M546 219.5h1M546 209.5h1M546 199.5h1M546 189.5h1M546 178.5h1M546 168.5h1M546 158.5h1M556 722.5h1M556 711.5h1M556 701.5h1M556 691.5h1M556 681.5h1M556 670.5h1M556 660.5h1M556 650.5h1M556 640.5h1M556 629.5h1M556 619.5h1M556 609.5h1M556 599.5h1M556 588.5h1M556 578.5h1M556 568.5h1M556 558.5h1M556 547.5h1M556 537.5h1M556 527.5h1M556 517.5h1M556 506.5h1M556 496.5h1M556 486.5h1M556 476.5h1M556 465.5h1M556 455.5h1M556 445.5h1M556 435.5h1M556 424.5h1M556 414.5h1M556 404.5h1M556 394.5h1M556 383.5h1M556 373.5h1M556 363.5h1M556 353.5h1M556 342.5h1M556 332.5h1M556 322.5h1M556 312.5h1M556 301.5h1M556 291.5h1M556 281.5h1M556 271.5h1M556 260.5h1M556 250.5h1M556 240.5h1M556 230.5h1M556 219.5h1M556 209.5h1M556 199.5h1M556 189.5h1M556 178.5h1M556 168.5h1M556 158.5h1M566 722.5h1M566 711.5h1M566 701.5h1M566 691.5h1M566 681.5h1M566 670.5h1M566 660.5h1M566 650.5h1M566 640.5h1M566 629.5h1M566 619.5h1M566 609.5h1M566 599.5h1M566 588.5h1M566 578.5h1M566 568.5h1M566 558.5h1M566 547.5h1M566 537.5h1M566 527.5h1M566 517.5h1M566 506.5h1M566 496.5h1M566 486.5h1M566 476.5h1M566 465.5h1M566 455.5h1M566 445.5h1M566 435.5h1M566 424.5h1M566 414.5h1M566 404.5h1M566 394.5h1M566 383.5h1M566 373.5h1M566 363.5h1M566 353.5h1M566 342.5h1M566 332.5h1M566 322.5h1M566 312.5h1M566 301.5h1M566 291.5h1M566 281.5h1M566 271.5h1M566 260.5h1M566 250.5h1M566 240.5h1M566 230.5h1M566 219.5h1M566 209.5h1M566 199.5h1M566 189.5h1M566 178.5h1M566 168.5h1M566 158.5h1M577 722.5h1M577 711.5h1M577 701.5h1M577 691.5h1M577 681.5h1M577 670.5h1M577 660.5h1M577 650.5h1M577 640.5h1M577 629.5h1M577 619.5h1M577 609.5h1M577 599.5h1M577 588.5h1M577 578.5h1M577 568.5h1M577 558.5h1M577 547.5h1M577 537.5h1M577 527.5h1M577 517.5h1M577 506.5h1M577 496.5h1M577 486.5h1M577 476.5h1M577 465.5h1M577 455.5h1M577 445.5h1M577 435.5h1M577 424.5h1M577 414.5h1M577 404.5h1M577 394.5h1M577 383.5h1M577 373.5h1M577 363.5h1M577 353.5h1M577 342.5h1M577 332.5h1M577 322.5h1M577 312.5h1M577 301.5h1M577 291.5h1M577 281.5h1M577 271.5h1M577 260.5h1M577 250.5h1M577 240.5h1M577 230.5h1M577 219.5h1M577 209.5h1M577 199.5h1M577 189.5h1M577 178.5h1M577 168.5h1M577 158.5h1M587 722.5h1M587 711.5h1M587 701.5h1M587 691.5h1M587 681.5h1M587 670.5h1M587 660.5h1M587 650.5h1M587 640.5h1M587 629.5h1M587 619.5h1M587 609.5h1M587 599.5h1M587 588.5h1M587 578.5h1M587 568.5h1M587 558.5h1M587 547.5h1M587 537.5h1M587 527.5h1M587 517.5h1M587 506.5h1M587 496.5h1M587 486.5h1M587 476.5h1M587 465.5h1M587 455.5h1M587 445.5h1M587 435.5h1M587 424.5h1M587 414.5h1M587 404.5h1M587 394.5h1M587 383.5h1M587 373.5h1M587 363.5h1M587 353.5h1M587 342.5h1M587 332.5h1M587 322.5h1M587 312.5h1M587 301.5h1M587 291.5h1M587 281.5h1M587 271.5h1M587 260.5h1M587 250.5h1M587 240.5h1M587 230.5h1M587 219.5h1M587 209.5h1M587 199.5h1M587 189.5h1M587 178.5h1M587 168.5h1M587 158.5h1M597 722.5h1M597 711.5h1M597 701.5h1M597 691.5h1M597 681.5h1M597 670.5h1M597 660.5h1M597 650.5h1M597 640.5h1M597 629.5h1M597 619.5h1M597 609.5h1M597 599.5h1M597 588.5h1M597 578.5h1M597 568.5h1M597 558.5h1M597 547.5h1M597 537.5h1M597 527.5h1M597 517.5h1M597 506.5h1M597 496.5h1M597 486.5h1M597 476.5h1M597 465.5h1M597 455.5h1M597 445.5h1M597 435.5h1M597 424.5h1M597 414.5h1M597 404.5h1M597 394.5h1M597 383.5h1M597 373.5h1M597 363.5h1M597 353.5h1M597 342.5h1M597 332.5h1M597 322.5h1M597 312.5h1M597 301.5h1M597 291.5h1M597 281.5h1M597 271.5h1M597 260.5h1M597 250.5h1M597 240.5h1M597 230.5h1M597 219.5h1M597 209.5h1M597 199.5h1M597 189.5h1M597 178.5h1M597 168.5h1M597 158.5h1M607 722.5h1M607 711.5h1M607 701.5h1M607 691.5h1M607 681.5h1M607 670.5h1M607 660.5h1M607 650.5h1M607 640.5h1M607 629.5h1M607 619.5h1M607 609.5h1M607 599.5h1M607 588.5h1M607 578.5h1M607 568.5h1M607 558.5h1M607 547.5h1M607 537.5h1M607 527.5h1M607 517.5h1M607 506.5h1M607 496.5h1M607 486.5h1M607 476.5h1M607 465.5h1M607 455.5h1M607 445.5h1M607 435.5h1M607 424.5h1M607 414.5h1M607 404.5h1M607 394.5h1M607 383.5h1M607 373.5h1M607 363.5h1M607 353.5h1M607 342.5h1M607 332.5h1M607 322.5h1M607 312.5h1M607 301.5h1M607 291.5h1M607 281.5h1M607 271.5h1M607 260.5h1M607 250.5h1M607 240.5h1M607 230.5h1M607 219.5h1M607 209.5h1M607 199.5h1M607 189.5h1M607 178.5h1M607 168.5h1M607 158.5h1M618 722.5h1M618 711.5h1M618 701.5h1M618 691.5h1M618 681.5h1M618 670.5h1M618 660.5h1M618 650.5h1M618 640.5h1M618 629.5h1M618 619.5h1M618 609.5h1M618 599.5h1M618 588.5h1M618 578.5h1M618 568.5h1M618 558.5h1M618 547.5h1M618 537.5h1M618 527.5h1M618 517.5h1M618 506.5h1M618 496.5h1M618 486.5h1M618 476.5h1M618 465.5h1M618 455.5h1M618 445.5h1M618 435.5h1M618 424.5h1M618 414.5h1M618 404.5h1M618 394.5h1M618 383.5h1M618 373.5h1M618 363.5h1M618 353.5h1M618 342.5h1M618 332.5h1M618 322.5h1M618 312.5h1M618 301.5h1M618 291.5h1M618 281.5h1M618 271.5h1M618 260.5h1M618 250.5h1M618 240.5h1M618 230.5h1M618 219.5h1M618 209.5h1M618 199.5h1M618 189.5h1M618 178.5h1M618 168.5h1M618 158.5h1M628 722.5h1M628 711.5h1M628 701.5h1M628 691.5h1M628 681.5h1M628 670.5h1M628 660.5h1M628 650.5h1M628 640.5h1M628 629.5h1M628 619.5h1M628 609.5h1M628 599.5h1M628 588.5h1M628 578.5h1M628 568.5h1M628 558.5h1M628 547.5h1M628 537.5h1M628 527.5h1M628 517.5h1M628 506.5h1M628 496.5h1M628 486.5h1M628 476.5h1M628 465.5h1M628 455.5h1M628 445.5h1M628 435.5h1M628 424.5h1M628 414.5h1M628 404.5h1M628 394.5h1M628 383.5h1M628 373.5h1M628 363.5h1M628 353.5h1M628 342.5h1M628 332.5h1M628 322.5h1M628 312.5h1M628 301.5h1M628 291.5h1M628 281.5h1M628 271.5h1M628 260.5h1M628 250.5h1M628 240.5h1M628 230.5h1M628 219.5h1M628 209.5h1M628 199.5h1M628 189.5h1M628 178.5h1M628 168.5h1M628 158.5h1M638 722.5h1M638 711.5h1M638 701.5h1M638 691.5h1M638 681.5h1M638 670.5h1M638 660.5h1M638 650.5h1M638 640.5h1M638 629.5h1M638 619.5h1M638 609.5h1M638 599.5h1M638 588.5h1M638 578.5h1M638 568.5h1M638 558.5h1M638 547.5h1M638 537.5h1M638 527.5h1M638 517.5h1M638 506.5h1M638 496.5h1M638 486.5h1M638 476.5h1M638 465.5h1M638 455.5h1M638 445.5h1M638 435.5h1M638 424.5h1M638 414.5h1M638 404.5h1M638 394.5h1M638 383.5h1M638 373.5h1M638 363.5h1M638 353.5h1M638 342.5h1M638 332.5h1M638 322.5h1M638 312.5h1M638 301.5h1M638 291.5h1M638 281.5h1M638 271.5h1M638 260.5h1M638 250.5h1M638 240.5h1M638 230.5h1M638 219.5h1M638 209.5h1M638 199.5h1M638 189.5h1M638 178.5h1M638 168.5h1M638 158.5h1M648 722.5h1M648 711.5h1M648 701.5h1M648 691.5h1M648 681.5h1M648 670.5h1M648 660.5h1M648 650.5h1M648 640.5h1M648 629.5h1M648 619.5h1M648 609.5h1M648 599.5h1M648 588.5h1M648 578.5h1M648 568.5h1M648 558.5h1M648 547.5h1M648 537.5h1M648 527.5h1M648 517.5h1M648 506.5h1M648 496.5h1M648 486.5h1M648 476.5h1M648 465.5h1M648 455.5h1M648 445.5h1M648 435.5h1M648 424.5h1M648 414.5h1M648 404.5h1M648 394.5h1M648 383.5h1M648 373.5h1M648 363.5h1M648 353.5h1M648 342.5h1M648 332.5h1M648 322.5h1M648 312.5h1M648 301.5h1M648 291.5h1M648 281.5h1M648 271.5h1M648 260.5h1M648 250.5h1M648 240.5h1M648 230.5h1M648 219.5h1M648 209.5h1M648 199.5h1M648 189.5h1M648 178.5h1M648 168.5h1M648 158.5h1M659 722.5h1M659 711.5h1M659 701.5h1M659 691.5h1M659 681.5h1M659 670.5h1M659 660.5h1M659 650.5h1M659 640.5h1M659 629.5h1M659 619.5h1M659 609.5h1M659 599.5h1M659 588.5h1M659 578.5h1M659 568.5h1M659 558.5h1M659 547.5h1M659 537.5h1M659 527.5h1M659 517.5h1M659 506.5h1M659 496.5h1M659 486.5h1M659 476.5h1M659 465.5h1M659 455.5h1M659 445.5h1M659 435.5h1M659 424.5h1M659 414.5h1M659 404.5h1M659 394.5h1M659 383.5h1M659 373.5h1M659 363.5h1M659 353.5h1M659 342.5h1M659 332.5h1M659 322.5h1M659 312.5h1M659 301.5h1M659 291.5h1M659 281.5h1M659 271.5h1M659 260.5h1M659 250.5h1M659 240.5h1M659 230.5h1M659 219.5h1M659 209.5h1M659 199.5h1M659 189.5h1M659 178.5h1M659 168.5h1M659 158.5h1M669 722.5h1M669 711.5h1M669 701.5h1M669 691.5h1M669 681.5h1M669 670.5h1M669 660.5h1M669 650.5h1M669 640.5h1M669 629.5h1M669 619.5h1M669 609.5h1M669 599.5h1M669 588.5h1M669 578.5h1M669 568.5h1M669 558.5h1M669 547.5h1M669 537.5h1M669 527.5h1M669 517.5h1M669 506.5h1M669 496.5h1M669 486.5h1M669 476.5h1M669 465.5h1M669 455.5h1M669 445.5h1M669 435.5h1M669 424.5h1M669 414.5h1M669 404.5h1M669 394.5h1M669 383.5h1M669 373.5h1M669 363.5h1M669 353.5h1M669 342.5h1M669 332.5h1M669 322.5h1M669 312.5h1M669 301.5h1M669 291.5h1M669 281.5h1M669 271.5h1M669 260.5h1M669 250.5h1M669 240.5h1M669 230.5h1M669 219.5h1M669 209.5h1M669 199.5h1M669 189.5h1M669 178.5h1M669 168.5h1M669 158.5h1M679 722.5h1M679 711.5h1M679 701.5h1M679 691.5h1M679 681.5h1M679 670.5h1M679 660.5h1M679 650.5h1M679 640.5h1M679 629.5h1M679 619.5h1M679 609.5h1M679 599.5h1M679 588.5h1M679 578.5h1M679 568.5h1M679 558.5h1M679 547.5h1M679 537.5h1M679 527.5h1M679 517.5h1M679 506.5h1M679 496.5h1M679 486.5h1M679 476.5h1M679 465.5h1M679 455.5h1M679 445.5h1M679 435.5h1M679 424.5h1M679 414.5h1M679 404.5h1M679 394.5h1M679 383.5h1M679 373.5h1M679 363.5h1M679 353.5h1M679 342.5h1M679 332.5h1M679 322.5h1M679 312.5h1M679 301.5h1M679 291.5h1M679 281.5h1M679 271.5h1M679 260.5h1M679 250.5h1M679 240.5h1M679 230.5h1M679 219.5h1M679 209.5h1M679 199.5h1M679 189.5h1M679 178.5h1M679 168.5h1M679 158.5h1M689 722.5h1M689 711.5h1M689 701.5h1M689 691.5h1M689 681.5h1M689 670.5h1M689 660.5h1M689 650.5h1M689 640.5h1M689 629.5h1M689 619.5h1M689 609.5h1M689 599.5h1M689 588.5h1M689 578.5h1M689 568.5h1M689 558.5h1M689 547.5h1M689 537.5h1M689 527.5h1M689 517.5h1M689 506.5h1M689 496.5h1M689 486.5h1M689 476.5h1M689 465.5h1M689 455.5h1M689 445.5h1M689 435.5h1M689 424.5h1M689 414.5h1M689 404.5h1M689 394.5h1M689 383.5h1M689 373.5h1M689 363.5h1M689 353.5h1M689 342.5h1M689 332.5h1M689 322.5h1M689 312.5h1M689 301.5h1M689 291.5h1M689 281.5h1M689 271.5h1M689 260.5h1M689 250.5h1M689 240.5h1M689 230.5h1M689 219.5h1M689 209.5h1M689 199.5h1M689 189.5h1M689 178.5h1M689 168.5h1M689 158.5h1M700 722.5h1M700 711.5h1M700 701.5h1M700 691.5h1M700 681.5h1M700 670.5h1M700 660.5h1M700 650.5h1M700 640.5h1M700 629.5h1M700 619.5h1M700 609.5h1M700 599.5h1M700 588.5h1M700 578.5h1M700 568.5h1M700 558.5h1M700 547.5h1M700 537.5h1M700 527.5h1M700 517.5h1M700 506.5h1M700 496.5h1M700 486.5h1M700 476.5h1M700 465.5h1M700 455.5h1M700 445.5h1M700 435.5h1M700 424.5h1M700 414.5h1M700 404.5h1M700 394.5h1M700 383.5h1M700 373.5h1M700 363.5h1M700 353.5h1M700 342.5h1M700 332.5h1M700 322.5h1M700 312.5h1M700 301.5h1M700 291.5h1M700 281.5h1M700 271.5h1M700 260.5h1M700 250.5h1M700 240.5h1M700 230.5h1M700 219.5h1M700 209.5h1M700 199.5h1M700 189.5h1M700 178.5h1M700 168.5h1M700 158.5h1M710 722.5h1M710 711.5h1M710 701.5h1M710 691.5h1M710 681.5h1M710 670.5h1M710 660.5h1M710 650.5h1M710 640.5h1M710 629.5h1M710 619.5h1M710 609.5h1M710 599.5h1M710 588.5h1M710 578.5h1M710 568.5h1M710 558.5h1M710 547.5h1M710 537.5h1M710 527.5h1M710 517.5h1M710 506.5h1M710 496.5h1M710 486.5h1M710 476.5h1M710 465.5h1M710 455.5h1M710 445.5h1M710 435.5h1M710 424.5h1M710 414.5h1M710 404.5h1M710 394.5h1M710 383.5h1M710 373.5h1M710 363.5h1M710 353.5h1M710 342.5h1M710 332.5h1M710 322.5h1M710 312.5h1M710 301.5h1M710 291.5h1M710 281.5h1M710 271.5h1M710 260.5h1M710 250.5h1M710 240.5h1M710 230.5h1M710 219.5h1M710 209.5h1M710 199.5h1M710 189.5h1M710 178.5h1M710 168.5h1M710 158.5h1M720 722.5h1M720 711.5h1M720 701.5h1M720 691.5h1M720 681.5h1M720 670.5h1M720 660.5h1M720 650.5h1M720 640.5h1M720 629.5h1M720 619.5h1M720 609.5h1M720 599.5h1M720 588.5h1M720 578.5h1M720 568.5h1M720 558.5h1M720 547.5h1M720 537.5h1M720 527.5h1M720 517.5h1M720 506.5h1M720 496.5h1M720 486.5h1M720 476.5h1M720 465.5h1M720 455.5h1M720 445.5h1M720 435.5h1M720 424.5h1M720 414.5h1M720 404.5h1M720 394.5h1M720 383.5h1M720 373.5h1M720 363.5h1M720 353.5h1M720 342.5h1M720 332.5h1M720 322.5h1M720 312.5h1M720 301.5h1M720 291.5h1M720 281.5h1M720 271.5h1M720 260.5h1M720 250.5h1M720 240.5h1M720 230.5h1M720 219.5h1M720 209.5h1M720 199.5h1M720 189.5h1M720 178.5h1M720 168.5h1M720 158.5h1M730 722.5h1M730 711.5h1M730 701.5h1M730 691.5h1M730 681.5h1M730 670.5h1M730 660.5h1M730 650.5h1M730 640.5h1M730 629.5h1M730 619.5h1M730 609.5h1M730 599.5h1M730 588.5h1M730 578.5h1M730 568.5h1M730 558.5h1M730 547.5h1M730 537.5h1M730 527.5h1M730 517.5h1M730 506.5h1M730 496.5h1M730 486.5h1M730 476.5h1M730 465.5h1M730 455.5h1M730 445.5h1M730 435.5h1M730 424.5h1M730 414.5h1M730 404.5h1M730 394.5h1M730 383.5h1M730 373.5h1M730 363.5h1M730 353.5h1M730 342.5h1M730 332.5h1M730 322.5h1M730 312.5h1M730 301.5h1M730 291.5h1M730 281.5h1M730 271.5h1M730 260.5h1M730 250.5h1M730 240.5h1M730 230.5h1M730 219.5h1M730 209.5h1M730 199.5h1M730 189.5h1M730 178.5h1M730 168.5h1M730 158.5h1M741 722.5h1M741 711.5h1M741 701.5h1M741 691.5h1M741 681.5h1M741 670.5h1M741 660.5h1M741 650.5h1M741 640.5h1M741 629.5h1M741 619.5h1M741 609.5h1M741 599.5h1M741 588.5h1M741 578.5h1M741 568.5h1M741 558.5h1M741 547.5h1M741 537.5h1M741 527.5h1M741 517.5h1M741 506.5h1M741 496.5h1M741 486.5h1M741 476.5h1M741 465.5h1M741 455.5h1M741 445.5h1M741 435.5h1M741 424.5h1M741 414.5h1M741 404.5h1M741 394.5h1M741 383.5h1M741 373.5h1M741 363.5h1M741 353.5h1M741 342.5h1M741 332.5h1M741 322.5h1M741 312.5h1M741 301.5h1M741 291.5h1M741 281.5h1M741 271.5h1M741 260.5h1M741 250.5h1M741 240.5h1M741 230.5h1M741 219.5h1M741 209.5h1M741 199.5h1M741 189.5h1M741 178.5h1M741 168.5h1M741 158.5h1M751 722.5h1M751 711.5h1M751 701.5h1M751 691.5h1M751 681.5h1M751 670.5h1M751 660.5h1M751 650.5h1M751 640.5h1M751 629.5h1M751 619.5h1M751 609.5h1M751 599.5h1M751 588.5h1M751 578.5h1M751 568.5h1M751 558.5h1M751 547.5h1M751 537.5h1M751 527.5h1M751 517.5h1M751 506.5h1M751 496.5h1M751 486.5h1M751 476.5h1M751 465.5h1M751 455.5h1M751 445.5h1M751 435.5h1M751 424.5h1M751 414.5h1M751 404.5h1M751 394.5h1M751 383.5h1M751 373.5h1M751 363.5h1M751 353.5h1M751 342.5h1M751 332.5h1M751 322.5h1M751 312.5h1M751 301.5h1M751 291.5h1M751 281.5h1M751 271.5h1M751 260.5h1M751 250.5h1M751 240.5h1M751 230.5h1M751 219.5h1M751 209.5h1M751 199.5h1M751 189.5h1M751 178.5h1M751 168.5h1M751 158.5h1M761 722.5h1M761 711.5h1M761 701.5h1M761 691.5h1M761 681.5h1M761 670.5h1M761 660.5h1M761 650.5h1M761 640.5h1M761 629.5h1M761 619.5h1M761 609.5h1M761 599.5h1M761 588.5h1M761 578.5h1M761 568.5h1M761 558.5h1M761 547.5h1M761 537.5h1M761 527.5h1M761 517.5h1M761 506.5h1M761 496.5h1M761 486.5h1M761 476.5h1M761 465.5h1M761 455.5h1M761 445.5h1M761 435.5h1M761 424.5h1M761 414.5h1M761 404.5h1M761 394.5h1M761 383.5h1M761 373.5h1M761 363.5h1M761 353.5h1M761 342.5h1M761 332.5h1M761 322.5h1M761 312.5h1M761 301.5h1M761 291.5h1M761 281.5h1M761 271.5h1M761 260.5h1M761 250.5h1M761 240.5h1M761 230.5h1M761 219.5h1M761 209.5h1M761 199.5h1M761 189.5h1M761 178.5h1M761 168.5h1M761 158.5h1M771 722.5h1M771 711.5h1M771 701.5h1M771 691.5h1M771 681.5h1M771 670.5h1M771 660.5h1M771 650.5h1M771 640.5h1M771 629.5h1M771 619.5h1M771 609.5h1M771 599.5h1M771 588.5h1M771 578.5h1M771 568.5h1M771 558.5h1M771 547.5h1M771 537.5h1M771 527.5h1M771 517.5h1M771 506.5h1M771 496.5h1M771 486.5h1M771 476.5h1M771 465.5h1M771 455.5h1M771 445.5h1M771 435.5h1M771 424.5h1M771 414.5h1M771 404.5h1M771 394.5h1M771 383.5h1M771 373.5h1M771 363.5h1M771 353.5h1M771 342.5h1M771 332.5h1M771 322.5h1M771 312.5h1M771 301.5h1M771 291.5h1M771 281.5h1M771 271.5h1M771 260.5h1M771 250.5h1M771 240.5h1M771 230.5h1M771 219.5h1M771 209.5h1M771 199.5h1M771 189.5h1M771 178.5h1M771 168.5h1M771 158.5h1M782 722.5h1M782 711.5h1M782 701.5h1M782 691.5h1M782 681.5h1M782 670.5h1M782 660.5h1M782 650.5h1M782 640.5h1M782 629.5h1M782 619.5h1M782 609.5h1M782 599.5h1M782 588.5h1M782 578.5h1M782 568.5h1M782 558.5h1M782 547.5h1M782 537.5h1M782 527.5h1M782 517.5h1M782 506.5h1M782 496.5h1M782 486.5h1M782 476.5h1M782 465.5h1M782 455.5h1M782 445.5h1M782 435.5h1M782 424.5h1M782 414.5h1M782 404.5h1M782 394.5h1M782 383.5h1M782 373.5h1M782 363.5h1M782 353.5h1M782 342.5h1M782 332.5h1M782 322.5h1M782 312.5h1M782 301.5h1M782 291.5h1M782 281.5h1M782 271.5h1M782 260.5h1M782 250.5h1M782 240.5h1M782 230.5h1M782 219.5h1M782 209.5h1M782 199.5h1M782 189.5h1M782 178.5h1M782 168.5h1M782 158.5h1M792 722.5h1M792 711.5h1M792 701.5h1M792 691.5h1M792 681.5h1M792 670.5h1M792 660.5h1M792 650.5h1M792 640.5h1M792 629.5h1M792 619.5h1M792 609.5h1M792 599.5h1M792 588.5h1M792 578.5h1M792 568.5h1M792 558.5h1M792 547.5h1M792 537.5h1M792 527.5h1M792 517.5h1M792 506.5h1M792 496.5h1M792 486.5h1M792 476.5h1M792 465.5h1M792 455.5h1M792 445.5h1M792 435.5h1M792 424.5h1M792 414.5h1M792 404.5h1M792 394.5h1M792 383.5h1M792 373.5h1M792 363.5h1M792 353.5h1M792 342.5h1M792 332.5h1M792 322.5h1M792 312.5h1M792 301.5h1M792 291.5h1M792 281.5h1M792 271.5h1M792 260.5h1M792 250.5h1M792 240.5h1M792 230.5h1M792 219.5h1M792 209.5h1M792 199.5h1M792 189.5h1M792 178.5h1M792 168.5h1M792 158.5h1M802 722.5h1M802 711.5h1M802 701.5h1M802 691.5h1M802 681.5h1M802 670.5h1M802 660.5h1M802 650.5h1M802 640.5h1M802 629.5h1M802 619.5h1M802 609.5h1M802 599.5h1M802 588.5h1M802 578.5h1M802 568.5h1M802 558.5h1M802 547.5h1M802 537.5h1M802 527.5h1M802 517.5h1M802 506.5h1M802 496.5h1M802 486.5h1M802 476.5h1M802 465.5h1M802 455.5h1M802 445.5h1M802 435.5h1M802 424.5h1M802 414.5h1M802 404.5h1M802 394.5h1M802 383.5h1M802 373.5h1M802 363.5h1M802 353.5h1M802 342.5h1M802 332.5h1M802 322.5h1M802 312.5h1M802 301.5h1M802 291.5h1M802 281.5h1M802 271.5h1M802 260.5h1M802 250.5h1M802 240.5h1M802 230.5h1M802 219.5h1M802 209.5h1M802 199.5h1M802 189.5h1M802 178.5h1M802 168.5h1M802 158.5h1M812 722.5h1M812 711.5h1M812 701.5h1M812 691.5h1M812 681.5h1M812 670.5h1M812 660.5h1M812 650.5h1M812 640.5h1M812 629.5h1M812 619.5h1M812 609.5h1M812 599.5h1M812 588.5h1M812 578.5h1M812 568.5h1M812 558.5h1M812 547.5h1M812 537.5h1M812 527.5h1M812 517.5h1M812 506.5h1M812 496.5h1M812 486.5h1M812 476.5h1M812 465.5h1M812 455.5h1M812 445.5h1M812 435.5h1M812 424.5h1M812 414.5h1M812 404.5h1M812 394.5h1M812 383.5h1M812 373.5h1M812 363.5h1M812 353.5h1M812 342.5h1M812 332.5h1M812 322.5h1M812 312.5h1M812 301.5h1M812 291.5h1M812 281.5h1M812 271.5h1M812 260.5h1M812 250.5h1M812 240.5h1M812 230.5h1M812 219.5h1M812 209.5h1M812 199.5h1M812 189.5h1M812 178.5h1M812 168.5h1M812 158.5h1M823 722.5h1M823 711.5h1M823 701.5h1M823 691.5h1M823 681.5h1M823 670.5h1M823 660.5h1M823 650.5h1M823 640.5h1M823 629.5h1M823 619.5h1M823 609.5h1M823 599.5h1M823 588.5h1M823 578.5h1M823 568.5h1M823 558.5h1M823 547.5h1M823 537.5h1M823 527.5h1M823 517.5h1M823 506.5h1M823 496.5h1M823 486.5h1M823 476.5h1M823 465.5h1M823 455.5h1M823 445.5h1M823 435.5h1M823 424.5h1M823 414.5h1M823 404.5h1M823 394.5h1M823 383.5h1M823 373.5h1M823 363.5h1M823 353.5h1M823 342.5h1M823 332.5h1M823 322.5h1M823 312.5h1M823 301.5h1M823 291.5h1M823 281.5h1M823 271.5h1M823 260.5h1M823 250.5h1M823 240.5h1M823 230.5h1M823 219.5h1M823 209.5h1M823 199.5h1M823 189.5h1M823 178.5h1M823 168.5h1M823 158.5h1M833 722.5h1M833 711.5h1M833 701.5h1M833 691.5h1M833 681.5h1M833 670.5h1M833 660.5h1M833 650.5h1M833 640.5h1M833 629.5h1M833 619.5h1M833 609.5h1M833 599.5h1M833 588.5h1M833 578.5h1M833 568.5h1M833 558.5h1M833 547.5h1M833 537.5h1M833 527.5h1M833 517.5h1M833 506.5h1M833 496.5h1M833 486.5h1M833 476.5h1M833 465.5h1M833 455.5h1M833 445.5h1M833 435.5h1M833 424.5h1M833 414.5h1M833 404.5h1M833 394.5h1M833 383.5h1M833 373.5h1M833 363.5h1M833 353.5h1M833 342.5h1M833 332.5h1M833 322.5h1M833 312.5h1M833 301.5h1M833 291.5h1M833 281.5h1M833 271.5h1M833 260.5h1M833 250.5h1M833 240.5h1M833 230.5h1M833 219.5h1M833 209.5h1M833 199.5h1M833 189.5h1M833 178.5h1M833 168.5h1M833 158.5h1M843 722.5h1M843 711.5h1M843 701.5h1M843 691.5h1M843 681.5h1M843 670.5h1M843 660.5h1M843 650.5h1M843 640.5h1M843 629.5h1M843 619.5h1M843 609.5h1M843 599.5h1M843 588.5h1M843 578.5h1M843 568.5h1M843 558.5h1M843 547.5h1M843 537.5h1M843 527.5h1M843 517.5h1M843 506.5h1M843 496.5h1M843 486.5h1M843 476.5h1M843 465.5h1M843 455.5h1M843 445.5h1M843 435.5h1M843 424.5h1M843 414.5h1M843 404.5h1M843 394.5h1M843 383.5h1M843 373.5h1M843 363.5h1M843 353.5h1M843 342.5h1M843 332.5h1M843 322.5h1M843 312.5h1M843 301.5h1M843 291.5h1M843 281.5h1M843 271.5h1M843 260.5h1M843 250.5h1M843 240.5h1M843 230.5h1M843 219.5h1M843 209.5h1M843 199.5h1M843 189.5h1M843 178.5h1M843 168.5h1M843 158.5h1M853 722.5h1M853 711.5h1M853 701.5h1M853 691.5h1M853 681.5h1M853 670.5h1M853 660.5h1M853 650.5h1M853 640.5h1M853 629.5h1M853 619.5h1M853 609.5h1M853 599.5h1M853 588.5h1M853 578.5h1M853 568.5h1M853 558.5h1M853 547.5h1M853 537.5h1M853 527.5h1M853 517.5h1M853 506.5h1M853 496.5h1M853 486.5h1M853 476.5h1M853 465.5h1M853 455.5h1M853 445.5h1M853 435.5h1M853 424.5h1M853 414.5h1M853 404.5h1M853 394.5h1M853 383.5h1M853 373.5h1M853 363.5h1M853 353.5h1M853 342.5h1M853 332.5h1M853 322.5h1M853 312.5h1M853 301.5h1M853 291.5h1M853 281.5h1M853 271.5h1M853 260.5h1M853 250.5h1M853 240.5h1M853 230.5h1M853 219.5h1M853 209.5h1M853 199.5h1M853 189.5h1M853 178.5h1M853 168.5h1M853 158.5h1M864 722.5h1M864 711.5h1M864 701.5h1M864 691.5h1M864 681.5h1M864 670.5h1M864 660.5h1M864 650.5h1M864 640.5h1M864 629.5h1M864 619.5h1M864 609.5h1M864 599.5h1M864 588.5h1M864 578.5h1M864 568.5h1M864 558.5h1M864 547.5h1M864 537.5h1M864 527.5h1M864 517.5h1M864 506.5h1M864 496.5h1M864 486.5h1M864 476.5h1M864 465.5h1M864 455.5h1M864 445.5h1M864 435.5h1M864 424.5h1M864 414.5h1M864 404.5h1M864 394.5h1M864 383.5h1M864 373.5h1M864 363.5h1M864 353.5h1M864 342.5h1M864 332.5h1M864 322.5h1M864 312.5h1M864 301.5h1M864 291.5h1M864 281.5h1M864 271.5h1M864 260.5h1M864 250.5h1M864 240.5h1M864 230.5h1M864 219.5h1M864 209.5h1M864 199.5h1M864 189.5h1M864 178.5h1M864 168.5h1M864 158.5h1M874 722.5h1M874 711.5h1M874 701.5h1M874 691.5h1M874 681.5h1M874 670.5h1M874 660.5h1M874 650.5h1M874 640.5h1M874 629.5h1M874 619.5h1M874 609.5h1M874 599.5h1M874 588.5h1M874 578.5h1M874 568.5h1M874 558.5h1M874 547.5h1M874 537.5h1M874 527.5h1M874 517.5h1M874 506.5h1M874 496.5h1M874 486.5h1M874 476.5h1M874 465.5h1M874 455.5h1M874 445.5h1M874 435.5h1M874 424.5h1M874 414.5h1M874 404.5h1M874 394.5h1M874 383.5h1M874 373.5h1M874 363.5h1M874 353.5h1M874 342.5h1M874 332.5h1M874 322.5h1M874 312.5h1M874 301.5h1M874 291.5h1M874 281.5h1M874 271.5h1M874 260.5h1M874 250.5h1M874 240.5h1M874 230.5h1M874 219.5h1M874 209.5h1M874 199.5h1M874 189.5h1M874 178.5h1M874 168.5h1M874 158.5h1M884 722.5h1M884 711.5h1M884 701.5h1M884 691.5h1M884 681.5h1M884 670.5h1M884 660.5h1M884 650.5h1M884 640.5h1M884 629.5h1M884 619.5h1M884 609.5h1M884 599.5h1M884 588.5h1M884 578.5h1M884 568.5h1M884 558.5h1M884 547.5h1M884 537.5h1M884 527.5h1M884 517.5h1M884 506.5h1M884 496.5h1M884 486.5h1M884 476.5h1M884 465.5h1M884 455.5h1M884 445.5h1M884 435.5h1M884 424.5h1M884 414.5h1M884 404.5h1M884 394.5h1M884 383.5h1M884 373.5h1M884 363.5h1M884 353.5h1M884 342.5h1M884 332.5h1M884 322.5h1M884 312.5h1M884 301.5h1M884 291.5h1M884 281.5h1M884 271.5h1M884 260.5h1M884 250.5h1M884 240.5h1M884 230.5h1M884 219.5h1M884 209.5h1M884 199.5h1M884 189.5h1M884 178.5h1M884 168.5h1M884 158.5h1M894 722.5h1M894 711.5h1M894 701.5h1M894 691.5h1M894 681.5h1M894 670.5h1M894 660.5h1M894 650.5h1M894 640.5h1M894 629.5h1M894 619.5h1M894 609.5h1M894 599.5h1M894 588.5h1M894 578.5h1M894 568.5h1M894 558.5h1M894 547.5h1M894 537.5h1M894 527.5h1M894 517.5h1M894 506.5h1M894 496.5h1M894 486.5h1M894 476.5h1M894 465.5h1M894 455.5h1M894 445.5h1M894 435.5h1M894 424.5h1M894 414.5h1M894 404.5h1M894 394.5h1M894 383.5h1M894 373.5h1M894 363.5h1M894 353.5h1M894 342.5h1M894 332.5h1M894 322.5h1M894 312.5h1M894 301.5h1M894 291.5h1M894 281.5h1M894 271.5h1M894 260.5h1M894 250.5h1M894 240.5h1M894 230.5h1M894 219.5h1M894 209.5h1M894 199.5h1M894 189.5h1M894 178.5h1M894 168.5h1M894 158.5h1M905 722.5h1M905 711.5h1M905 701.5h1M905 691.5h1M905 681.5h1M905 670.5h1M905 660.5h1M905 650.5h1M905 640.5h1M905 629.5h1M905 619.5h1M905 609.5h1M905 599.5h1M905 588.5h1M905 578.5h1M905 568.5h1M905 558.5h1M905 547.5h1M905 537.5h1M905 527.5h1M905 517.5h1M905 506.5h1M905 496.5h1M905 486.5h1M905 476.5h1M905 465.5h1M905 455.5h1M905 445.5h1M905 435.5h1M905 424.5h1M905 414.5h1M905 404.5h1M905 394.5h1M905 383.5h1M905 373.5h1M905 363.5h1M905 353.5h1M905 342.5h1M905 332.5h1M905 322.5h1M905 312.5h1M905 301.5h1M905 291.5h1M905 281.5h1M905 271.5h1M905 260.5h1M905 250.5h1M905 240.5h1M905 230.5h1M905 219.5h1M905 209.5h1M905 199.5h1M905 189.5h1M905 178.5h1M905 168.5h1M905 158.5h1M915 722.5h1M915 711.5h1M915 701.5h1M915 691.5h1M915 681.5h1M915 670.5h1M915 660.5h1M915 650.5h1M915 640.5h1M915 629.5h1M915 619.5h1M915 609.5h1M915 599.5h1M915 588.5h1M915 578.5h1M915 568.5h1M915 558.5h1M915 547.5h1M915 537.5h1M915 527.5h1M915 517.5h1M915 506.5h1M915 496.5h1M915 486.5h1M915 476.5h1M915 465.5h1M915 455.5h1M915 445.5h1M915 435.5h1M915 424.5h1M915 414.5h1M915 404.5h1M915 394.5h1M915 383.5h1M915 373.5h1M915 363.5h1M915 353.5h1M915 342.5h1M915 332.5h1M915 322.5h1M915 312.5h1M915 301.5h1M915 291.5h1M915 281.5h1M915 271.5h1M915 260.5h1M915 250.5h1M915 240.5h1M915 230.5h1M915 219.5h1M915 209.5h1M915 199.5h1M915 189.5h1M915 178.5h1M915 168.5h1M915 158.5h1M925 722.5h1M925 711.5h1M925 701.5h1M925 691.5h1M925 681.5h1M925 670.5h1M925 660.5h1M925 650.5h1M925 640.5h1M925 629.5h1M925 619.5h1M925 609.5h1M925 599.5h1M925 588.5h1M925 578.5h1M925 568.5h1M925 558.5h1M925 547.5h1M925 537.5h1M925 527.5h1M925 517.5h1M925 506.5h1M925 496.5h1M925 486.5h1M925 476.5h1M925 465.5h1M925 455.5h1M925 445.5h1M925 435.5h1M925 424.5h1M925 414.5h1M925 404.5h1M925 394.5h1M925 383.5h1M925 373.5h1M925 363.5h1M925 353.5h1M925 342.5h1M925 332.5h1M925 322.5h1M925 312.5h1M925 301.5h1M925 291.5h1M925 281.5h1M925 271.5h1M925 260.5h1M925 250.5h1M925 240.5h1M925 230.5h1M925 219.5h1M925 209.5h1M925 199.5h1M925 189.5h1M925 178.5h1M925 168.5h1M925 158.5h1M935 722.5h1M935 711.5h1M935 701.5h1M935 691.5h1M935 681.5h1M935 670.5h1M935 660.5h1M935 650.5h1M935 640.5h1M935 629.5h1M935 619.5h1M935 609.5h1M935 599.5h1M935 588.5h1M935 578.5h1M935 568.5h1M935 558.5h1M935 547.5h1M935 537.5h1M935 527.5h1M935 517.5h1M935 506.5h1M935 496.5h1M935 486.5h1M935 476.5h1M935 465.5h1M935 455.5h1M935 445.5h1M935 435.5h1M935 424.5h1M935 414.5h1M935 404.5h1M935 394.5h1M935 383.5h1M935 373.5h1M935 363.5h1M935 353.5h1M935 342.5h1M935 332.5h1M935 322.5h1M935 312.5h1M935 301.5h1M935 291.5h1M935 281.5h1M935 271.5h1M935 260.5h1M935 250.5h1M935 240.5h1M935 230.5h1M935 219.5h1M935 209.5h1M935 199.5h1M935 189.5h1M935 178.5h1M935 168.5h1M935 158.5h1M946 722.5h1M946 711.5h1M946 701.5h1M946 691.5h1M946 681.5h1M946 670.5h1M946 660.5h1M946 650.5h1M946 640.5h1M946 629.5h1M946 619.5h1M946 609.5h1M946 599.5h1M946 588.5h1M946 578.5h1M946 568.5h1M946 558.5h1M946 547.5h1M946 537.5h1M946 527.5h1M946 517.5h1M946 506.5h1M946 496.5h1M946 486.5h1M946 476.5h1M946 465.5h1M946 455.5h1M946 445.5h1M946 435.5h1M946 424.5h1M946 414.5h1M946 404.5h1M946 394.5h1M946 383.5h1M946 373.5h1M946 363.5h1M946 353.5h1M946 342.5h1M946 332.5h1M946 322.5h1M946 312.5h1M946 301.5h1M946 291.5h1M946 281.5h1M946 271.5h1M946 260.5h1M946 250.5h1M946 240.5h1M946 230.5h1M946 219.5h1M946 209.5h1M946 199.5h1M946 189.5h1M946 178.5h1M946 168.5h1M946 158.5h1M956 722.5h1M956 711.5h1M956 701.5h1M956 691.5h1M956 681.5h1M956 670.5h1M956 660.5h1M956 650.5h1M956 640.5h1M956 629.5h1M956 619.5h1M956 609.5h1M956 599.5h1M956 588.5h1M956 578.5h1M956 568.5h1M956 558.5h1M956 547.5h1M956 537.5h1M956 527.5h1M956 517.5h1M956 506.5h1M956 496.5h1M956 486.5h1M956 476.5h1M956 465.5h1M956 455.5h1M956 445.5h1M956 435.5h1M956 424.5h1M956 414.5h1M956 404.5h1M956 394.5h1M956 383.5h1M956 373.5h1M956 363.5h1M956 353.5h1M956 342.5h1M956 332.5h1M956 322.5h1M956 312.5h1M956 301.5h1M956 291.5h1M956 281.5h1M956 271.5h1M956 260.5h1M956 250.5h1M956 240.5h1M956 230.5h1M956 219.5h1M956 209.5h1M956 199.5h1M956 189.5h1M956 178.5h1M956 168.5h1M956 158.5h1M966 722.5h1M966 711.5h1M966 701.5h1M966 691.5h1M966 681.5h1M966 670.5h1M966 660.5h1M966 650.5h1M966 640.5h1M966 629.5h1M966 619.5h1M966 609.5h1M966 599.5h1M966 588.5h1M966 578.5h1M966 568.5h1M966 558.5h1M966 547.5h1M966 537.5h1M966 527.5h1M966 517.5h1M966 506.5h1M966 496.5h1M966 486.5h1M966 476.5h1M966 465.5h1M966 455.5h1M966 445.5h1M966 435.5h1M966 424.5h1M966 414.5h1M966 404.5h1M966 394.5h1M966 383.5h1M966 373.5h1M966 363.5h1M966 353.5h1M966 342.5h1M966 332.5h1M966 322.5h1M966 312.5h1M966 301.5h1M966 291.5h1M966 281.5h1M966 271.5h1M966 260.5h1M966 250.5h1M966 240.5h1M966 230.5h1M966 219.5h1M966 209.5h1M966 199.5h1M966 189.5h1M966 178.5h1M966 168.5h1M966 158.5h1M976 722.5h1M976 711.5h1M976 701.5h1M976 691.5h1M976 681.5h1M976 670.5h1M976 660.5h1M976 650.5h1M976 640.5h1M976 629.5h1M976 619.5h1M976 609.5h1M976 599.5h1M976 588.5h1M976 578.5h1M976 568.5h1M976 558.5h1M976 547.5h1M976 537.5h1M976 527.5h1M976 517.5h1M976 506.5h1M976 496.5h1M976 486.5h1M976 476.5h1M976 465.5h1M976 455.5h1M976 445.5h1M976 435.5h1M976 424.5h1M976 414.5h1M976 404.5h1M976 394.5h1M976 383.5h1M976 373.5h1M976 363.5h1M976 353.5h1M976 342.5h1M976 332.5h1M976 322.5h1M976 312.5h1M976 301.5h1M976 291.5h1M976 281.5h1M976 271.5h1M976 260.5h1M976 250.5h1M976 240.5h1M976 230.5h1M976 219.5h1M976 209.5h1M976 199.5h1M976 189.5h1M976 178.5h1M976 168.5h1M976 158.5h1M986 722.5h1M986 711.5h1M986 701.5h1M986 691.5h1M986 681.5h1M986 670.5h1M986 660.5h1M986 650.5h1M986 640.5h1M986 629.5h1M986 619.5h1M986 609.5h1M986 599.5h1M986 588.5h1M986 578.5h1M986 568.5h1M986 558.5h1M986 547.5h1M986 537.5h1M986 527.5h1M986 517.5h1M986 506.5h1M986 496.5h1M986 486.5h1M986 476.5h1M986 465.5h1M986 455.5h1M986 445.5h1M986 435.5h1M986 424.5h1M986 414.5h1M986 404.5h1M986 394.5h1M986 383.5h1M986 373.5h1M986 363.5h1M986 353.5h1M986 342.5h1M986 332.5h1M986 322.5h1M986 312.5h1M986 301.5h1M986 291.5h1M986 281.5h1M986 271.5h1M986 260.5h1M986 250.5h1M986 240.5h1M986 230.5h1M986 219.5h1M986 209.5h1M986 199.5h1M986 189.5h1M986 178.5h1M986 168.5h1M986 158.5h1M997 722.5h1M997 711.5h1M997 701.5h1M997 691.5h1M997 681.5h1M997 670.5h1M997 660.5h1M997 650.5h1M997 640.5h1M997 629.5h1M997 619.5h1M997 609.5h1M997 599.5h1M997 588.5h1M997 578.5h1M997 568.5h1M997 558.5h1M997 547.5h1M997 537.5h1M997 527.5h1M997 517.5h1M997 506.5h1M997 496.5h1M997 486.5h1M997 476.5h1M997 465.5h1M997 455.5h1M997 445.5h1M997 435.5h1M997 424.5h1M997 414.5h1M997 404.5h1M997 394.5h1M997 383.5h1M997 373.5h1M997 363.5h1M997 353.5h1M997 342.5h1M997 332.5h1M997 322.5h1M997 312.5h1M997 301.5h1M997 291.5h1M997 281.5h1M997 271.5h1M997 260.5h1M997 250.5h1M997 240.5h1M997 230.5h1M997 219.5h1M997 209.5h1M997 199.5h1M997 189.5h1M997 178.5h1M997 168.5h1M997 158.5h1M1007 722.5h1M1007 711.5h1M1007 701.5h1M1007 691.5h1M1007 681.5h1M1007 670.5h1M1007 660.5h1M1007 650.5h1M1007 640.5h1M1007 629.5h1M1007 619.5h1M1007 609.5h1M1007 599.5h1M1007 588.5h1M1007 578.5h1M1007 568.5h1M1007 558.5h1M1007 547.5h1M1007 537.5h1M1007 527.5h1M1007 517.5h1M1007 506.5h1M1007 496.5h1M1007 486.5h1M1007 476.5h1M1007 465.5h1M1007 455.5h1M1007 445.5h1M1007 435.5h1M1007 424.5h1M1007 414.5h1M1007 404.5h1M1007 394.5h1M1007 383.5h1M1007 373.5h1M1007 363.5h1M1007 353.5h1M1007 342.5h1M1007 332.5h1M1007 322.5h1M1007 312.5h1M1007 301.5h1M1007 291.5h1M1007 281.5h1M1007 271.5h1M1007 260.5h1M1007 250.5h1M1007 240.5h1M1007 230.5h1M1007 219.5h1M1007 209.5h1M1007 199.5h1M1007 189.5h1M1007 178.5h1M1007 168.5h1M1007 158.5h1M1017 722.5h1M1017 711.5h1M1017 701.5h1M1017 691.5h1M1017 681.5h1M1017 670.5h1M1017 660.5h1M1017 650.5h1M1017 640.5h1M1017 629.5h1M1017 619.5h1M1017 609.5h1M1017 599.5h1M1017 588.5h1M1017 578.5h1M1017 568.5h1M1017 558.5h1M1017 547.5h1M1017 537.5h1M1017 527.5h1M1017 517.5h1M1017 506.5h1M1017 496.5h1M1017 486.5h1M1017 476.5h1M1017 465.5h1M1017 455.5h1M1017 445.5h1M1017 435.5h1M1017 424.5h1M1017 414.5h1M1017 404.5h1M1017 394.5h1M1017 383.5h1M1017 373.5h1M1017 363.5h1M1017 353.5h1M1017 342.5h1M1017 332.5h1M1017 322.5h1M1017 312.5h1M1017 301.5h1M1017 291.5h1M1017 281.5h1M1017 271.5h1M1017 260.5h1M1017 250.5h1M1017 240.5h1M1017 230.5h1M1017 219.5h1M1017 209.5h1M1017 199.5h1M1017 189.5h1M1017 178.5h1M1017 168.5h1M1017 158.5h1M1027 722.5h1M1027 711.5h1M1027 701.5h1M1027 691.5h1M1027 681.5h1M1027 670.5h1M1027 660.5h1M1027 650.5h1M1027 640.5h1M1027 629.5h1M1027 619.5h1M1027 609.5h1M1027 599.5h1M1027 588.5h1M1027 578.5h1M1027 568.5h1M1027 558.5h1M1027 547.5h1M1027 537.5h1M1027 527.5h1M1027 517.5h1M1027 506.5h1M1027 496.5h1M1027 486.5h1M1027 476.5h1M1027 465.5h1M1027 455.5h1M1027 445.5h1M1027 435.5h1M1027 424.5h1M1027 414.5h1M1027 404.5h1M1027 394.5h1M1027 383.5h1M1027 373.5h1M1027 363.5h1M1027 353.5h1M1027 342.5h1M1027 332.5h1M1027 322.5h1M1027 312.5h1M1027 301.5h1M1027 291.5h1M1027 281.5h1M1027 271.5h1M1027 260.5h1M1027 250.5h1M1027 240.5h1M1027 230.5h1M1027 219.5h1M1027 209.5h1M1027 199.5h1M1027 189.5h1M1027 178.5h1M1027 168.5h1M1027 158.5h1M1038 722.5h1M1038 711.5h1M1038 701.5h1M1038 691.5h1M1038 681.5h1M1038 670.5h1M1038 660.5h1M1038 650.5h1M1038 640.5h1M1038 629.5h1M1038 619.5h1M1038 609.5h1M1038 599.5h1M1038 588.5h1M1038 578.5h1M1038 568.5h1M1038 558.5h1M1038 547.5h1M1038 537.5h1M1038 527.5h1M1038 517.5h1M1038 506.5h1M1038 496.5h1M1038 486.5h1M1038 476.5h1M1038 465.5h1M1038 455.5h1M1038 445.5h1M1038 435.5h1M1038 424.5h1M1038 414.5h1M1038 404.5h1M1038 394.5h1M1038 383.5h1M1038 373.5h1M1038 363.5h1M1038 353.5h1M1038 342.5h1M1038 332.5h1M1038 322.5h1M1038 312.5h1M1038 301.5h1M1038 291.5h1M1038 281.5h1M1038 271.5h1M1038 260.5h1M1038 250.5h1M1038 240.5h1M1038 230.5h1M1038 219.5h1M1038 209.5h1M1038 199.5h1M1038 189.5h1M1038 178.5h1M1038 168.5h1M1038 158.5h1M1048 722.5h1M1048 711.5h1M1048 701.5h1M1048 691.5h1M1048 681.5h1M1048 670.5h1M1048 660.5h1M1048 650.5h1M1048 640.5h1M1048 629.5h1M1048 619.5h1M1048 609.5h1M1048 599.5h1M1048 588.5h1M1048 578.5h1M1048 568.5h1M1048 558.5h1M1048 547.5h1M1048 537.5h1M1048 527.5h1M1048 517.5h1M1048 506.5h1M1048 496.5h1M1048 486.5h1M1048 476.5h1M1048 465.5h1M1048 455.5h1M1048 445.5h1M1048 435.5h1M1048 424.5h1M1048 414.5h1M1048 404.5h1M1048 394.5h1M1048 383.5h1M1048 373.5h1M1048 363.5h1M1048 353.5h1M1048 342.5h1M1048 332.5h1M1048 322.5h1M1048 312.5h1M1048 301.5h1M1048 291.5h1M1048 281.5h1M1048 271.5h1M1048 260.5h1M1048 250.5h1M1048 240.5h1M1048 230.5h1M1048 219.5h1M1048 209.5h1M1048 199.5h1M1048 189.5h1M1048 178.5h1M1048 168.5h1M1048 158.5h1M1058 722.5h1M1058 711.5h1M1058 701.5h1M1058 691.5h1M1058 681.5h1M1058 670.5h1M1058 660.5h1M1058 650.5h1M1058 640.5h1M1058 629.5h1M1058 619.5h1M1058 609.5h1M1058 599.5h1M1058 588.5h1M1058 578.5h1M1058 568.5h1M1058 558.5h1M1058 547.5h1M1058 537.5h1M1058 527.5h1M1058 517.5h1M1058 506.5h1M1058 496.5h1M1058 486.5h1M1058 476.5h1M1058 465.5h1M1058 455.5h1M1058 445.5h1M1058 435.5h1M1058 424.5h1M1058 414.5h1M1058 404.5h1M1058 394.5h1M1058 383.5h1M1058 373.5h1M1058 363.5h1M1058 353.5h1M1058 342.5h1M1058 332.5h1M1058 322.5h1M1058 312.5h1M1058 301.5h1M1058 291.5h1M1058 281.5h1M1058 271.5h1M1058 260.5h1M1058 250.5h1M1058 240.5h1M1058 230.5h1M1058 219.5h1M1058 209.5h1M1058 199.5h1M1058 189.5h1M1058 178.5h1M1058 168.5h1M1058 158.5h1M1068 722.5h1M1068 711.5h1M1068 701.5h1M1068 691.5h1M1068 681.5h1M1068 670.5h1M1068 660.5h1M1068 650.5h1M1068 640.5h1M1068 629.5h1M1068 619.5h1M1068 609.5h1M1068 599.5h1M1068 588.5h1M1068 578.5h1M1068 568.5h1M1068 558.5h1M1068 547.5h1M1068 537.5h1M1068 527.5h1M1068 517.5h1M1068 506.5h1M1068 496.5h1M1068 486.5h1M1068 476.5h1M1068 465.5h1M1068 455.5h1M1068 445.5h1M1068 435.5h1M1068 424.5h1M1068 414.5h1M1068 404.5h1M1068 394.5h1M1068 383.5h1M1068 373.5h1M1068 363.5h1M1068 353.5h1M1068 342.5h1M1068 332.5h1M1068 322.5h1M1068 312.5h1M1068 301.5h1M1068 291.5h1M1068 281.5h1M1068 271.5h1M1068 260.5h1M1068 250.5h1M1068 240.5h1M1068 230.5h1M1068 219.5h1M1068 209.5h1M1068 199.5h1M1068 189.5h1M1068 178.5h1M1068 168.5h1M1068 158.5h1M1079 722.5h1M1079 711.5h1M1079 701.5h1M1079 691.5h1M1079 681.5h1M1079 670.5h1M1079 660.5h1M1079 650.5h1M1079 640.5h1M1079 629.5h1M1079 619.5h1M1079 609.5h1M1079 599.5h1M1079 588.5h1M1079 578.5h1M1079 568.5h1M1079 558.5h1M1079 547.5h1M1079 537.5h1M1079 527.5h1M1079 517.5h1M1079 506.5h1M1079 496.5h1M1079 486.5h1M1079 476.5h1M1079 465.5h1M1079 455.5h1M1079 445.5h1M1079 435.5h1M1079 424.5h1M1079 414.5h1M1079 404.5h1M1079 394.5h1M1079 383.5h1M1079 373.5h1M1079 363.5h1M1079 353.5h1M1079 342.5h1M1079 332.5h1M1079 322.5h1M1079 312.5h1M1079 301.5h1M1079 291.5h1M1079 281.5h1M1079 271.5h1M1079 260.5h1M1079 250.5h1M1079 240.5h1M1079 230.5h1M1079 219.5h1M1079 209.5h1M1079 199.5h1M1079 189.5h1M1079 178.5h1M1079 168.5h1M1079 158.5h1M1089 722.5h1M1089 711.5h1M1089 701.5h1M1089 691.5h1M1089 681.5h1M1089 670.5h1M1089 660.5h1M1089 650.5h1M1089 640.5h1M1089 629.5h1M1089 619.5h1M1089 609.5h1M1089 599.5h1M1089 588.5h1M1089 578.5h1M1089 568.5h1M1089 558.5h1M1089 547.5h1M1089 537.5h1M1089 527.5h1M1089 517.5h1M1089 506.5h1M1089 496.5h1M1089 486.5h1M1089 476.5h1M1089 465.5h1M1089 455.5h1M1089 445.5h1M1089 435.5h1M1089 424.5h1M1089 414.5h1M1089 404.5h1M1089 394.5h1M1089 383.5h1M1089 373.5h1M1089 363.5h1M1089 353.5h1M1089 342.5h1M1089 332.5h1M1089 322.5h1M1089 312.5h1M1089 301.5h1M1089 291.5h1M1089 281.5h1M1089 271.5h1M1089 260.5h1M1089 250.5h1M1089 240.5h1M1089 230.5h1M1089 219.5h1M1089 209.5h1M1089 199.5h1M1089 189.5h1M1089 178.5h1M1089 168.5h1M1089 158.5h1M1099 722.5h1M1099 711.5h1M1099 701.5h1M1099 691.5h1M1099 681.5h1M1099 670.5h1M1099 660.5h1M1099 650.5h1M1099 640.5h1M1099 629.5h1M1099 619.5h1M1099 609.5h1M1099 599.5h1M1099 588.5h1M1099 578.5h1M1099 568.5h1M1099 558.5h1M1099 547.5h1M1099 537.5h1M1099 527.5h1M1099 517.5h1M1099 506.5h1M1099 496.5h1M1099 486.5h1M1099 476.5h1M1099 465.5h1M1099 455.5h1M1099 445.5h1M1099 435.5h1M1099 424.5h1M1099 414.5h1M1099 404.5h1M1099 394.5h1M1099 383.5h1M1099 373.5h1M1099 363.5h1M1099 353.5h1M1099 342.5h1M1099 332.5h1M1099 322.5h1M1099 312.5h1M1099 301.5h1M1099 291.5h1M1099 281.5h1M1099 271.5h1M1099 260.5h1M1099 250.5h1M1099 240.5h1M1099 230.5h1M1099 219.5h1M1099 209.5h1M1099 199.5h1M1099 189.5h1M1099 178.5h1M1099 168.5h1M1099 158.5h1M1109 722.5h1M1109 711.5h1M1109 701.5h1M1109 691.5h1M1109 681.5h1M1109 670.5h1M1109 660.5h1M1109 650.5h1M1109 640.5h1M1109 629.5h1M1109 619.5h1M1109 609.5h1M1109 599.5h1M1109 588.5h1M1109 578.5h1M1109 568.5h1M1109 558.5h1M1109 547.5h1M1109 537.5h1M1109 527.5h1M1109 517.5h1M1109 506.5h1M1109 496.5h1M1109 486.5h1M1109 476.5h1M1109 465.5h1M1109 455.5h1M1109 445.5h1M1109 435.5h1M1109 424.5h1M1109 414.5h1M1109 404.5h1M1109 394.5h1M1109 383.5h1M1109 373.5h1M1109 363.5h1M1109 353.5h1M1109 342.5h1M1109 332.5h1M1109 322.5h1M1109 312.5h1M1109 301.5h1M1109 291.5h1M1109 281.5h1M1109 271.5h1M1109 260.5h1M1109 250.5h1M1109 240.5h1M1109 230.5h1M1109 219.5h1M1109 209.5h1M1109 199.5h1M1109 189.5h1M1109 178.5h1M1109 168.5h1M1109 158.5h1M1120 722.5h1M1120 711.5h1M1120 701.5h1M1120 691.5h1M1120 681.5h1M1120 670.5h1M1120 660.5h1M1120 650.5h1M1120 640.5h1M1120 629.5h1M1120 619.5h1M1120 609.5h1M1120 599.5h1M1120 588.5h1M1120 578.5h1M1120 568.5h1M1120 558.5h1M1120 547.5h1M1120 537.5h1M1120 527.5h1M1120 517.5h1M1120 506.5h1M1120 496.5h1M1120 486.5h1M1120 476.5h1M1120 465.5h1M1120 455.5h1M1120 445.5h1M1120 435.5h1M1120 424.5h1M1120 414.5h1M1120 404.5h1M1120 394.5h1M1120 383.5h1M1120 373.5h1M1120 363.5h1M1120 353.5h1M1120 342.5h1M1120 332.5h1M1120 322.5h1M1120 312.5h1M1120 301.5h1M1120 291.5h1M1120 281.5h1M1120 271.5h1M1120 260.5h1M1120 250.5h1M1120 240.5h1M1120 230.5h1M1120 219.5h1M1120 209.5h1M1120 199.5h1M1120 189.5h1M1120 178.5h1M1120 168.5h1M1120 158.5h1M1130 722.5h1M1130 711.5h1M1130 701.5h1M1130 691.5h1M1130 681.5h1M1130 670.5h1M1130 660.5h1M1130 650.5h1M1130 640.5h1M1130 629.5h1M1130 619.5h1M1130 609.5h1M1130 599.5h1M1130 588.5h1M1130 578.5h1M1130 568.5h1M1130 558.5h1M1130 547.5h1M1130 537.5h1M1130 527.5h1M1130 517.5h1M1130 506.5h1M1130 496.5h1M1130 486.5h1M1130 476.5h1M1130 465.5h1M1130 455.5h1M1130 445.5h1M1130 435.5h1M1130 424.5h1M1130 414.5h1M1130 404.5h1M1130 394.5h1M1130 383.5h1M1130 373.5h1M1130 363.5h1M1130 353.5h1M1130 342.5h1M1130 332.5h1M1130 322.5h1M1130 312.5h1M1130 301.5h1M1130 291.5h1M1130 281.5h1M1130 271.5h1M1130 260.5h1M1130 250.5h1M1130 240.5h1M1130 230.5h1M1130 219.5h1M1130 209.5h1M1130 199.5h1M1130 189.5h1M1130 178.5h1M1130 168.5h1M1130 158.5h1" stroke="#424242" stroke-width="1"/><path d="M126 629.5H167M146.5 609V650" stroke="#a80000" stroke-width="1"/><circle cx="146.5" cy="629.5" r="5.2" fill="none" stroke="#a80000" stroke-width="1"/><rect x="146.4" y="270.54999999999995" width="922.05" height="358.75" rx="20.5" fill="none" stroke="#ffffff" stroke-width="2.6"/><path d="M186.4 362.8H404" stroke="#d80000" stroke-width="2" stroke-dasharray="16.8 7.2 1.6 6.4" stroke-dashoffset="11.90"/><path d="M295.0 310.4V415.2" stroke="#d80000" stroke-width="2" stroke-dasharray="16.8 7.2 1.6 6.4" stroke-dashoffset="4.40"/><rect x="197.2" y="327.1" width="195.8" height="71.8" rx="35.9" fill="none" stroke="#a8a8a8" stroke-width="1.5" stroke-dasharray="9 3 1 3"/><path d="M253.5 337.1H336.5Q345.5 337.1 344.6 346L341 380Q340 388.2 332 388.2H258Q250 388.2 249 380L245.4 346Q244.5 337.1 253.5 337.1Z" fill="none" stroke="#ffffff" stroke-width="2.6"/><circle cx="233.2" cy="363" r="7.9" fill="none" stroke="#ffffff" stroke-width="2.6"/><circle cx="356.6" cy="363" r="7.9" fill="none" stroke="#ffffff" stroke-width="2.6"/><path d="M412.5 362.7H526" stroke="#d80000" stroke-width="2" stroke-dasharray="16.8 7.2 1.6 6.4" stroke-dashoffset="29.30"/><path d="M469.1 311.2V414.4" stroke="#d80000" stroke-width="2" stroke-dasharray="16.8 7.2 1.6 6.4" stroke-dashoffset="4.80"/><circle cx="469.1" cy="362.7" r="38.7" fill="none" stroke="#ffffff" stroke-width="2.6"/><path d="M545.6 362.7H608" stroke="#d80000" stroke-width="2" stroke-dasharray="16.8 7.2 1.6 6.4" stroke-dashoffset="9.60"/><path d="M576.6 332V394.4" stroke="#d80000" stroke-width="2" stroke-dasharray="16.8 7.2 1.6 6.4" stroke-dashoffset="9.60"/><circle cx="576.6" cy="362.7" r="18.4" fill="none" stroke="#ffffff" stroke-width="2.6"/><g fill="none" stroke="#ffffff" stroke-width="2.6"><circle cx="668.89" cy="332.05" r="6.85"/><circle cx="699.63" cy="332.05" r="6.85"/><circle cx="730.36" cy="332.05" r="6.85"/><circle cx="761.10" cy="332.05" r="6.85"/><circle cx="791.83" cy="332.05" r="6.85"/><circle cx="822.57" cy="332.05" r="6.85"/><circle cx="853.30" cy="332.05" r="6.85"/><circle cx="884.04" cy="332.05" r="6.85"/><circle cx="914.77" cy="332.05" r="6.85"/><circle cx="945.51" cy="332.05" r="6.85"/><circle cx="976.24" cy="332.05" r="6.85"/><circle cx="1006.98" cy="332.05" r="6.85"/><circle cx="684.26" cy="352.55" r="6.85"/><circle cx="715.00" cy="352.55" r="6.85"/><circle cx="745.73" cy="352.55" r="6.85"/><circle cx="776.47" cy="352.55" r="6.85"/><circle cx="807.20" cy="352.55" r="6.85"/><circle cx="837.94" cy="352.55" r="6.85"/><circle cx="868.67" cy="352.55" r="6.85"/><circle cx="899.41" cy="352.55" r="6.85"/><circle cx="930.14" cy="352.55" r="6.85"/><circle cx="960.88" cy="352.55" r="6.85"/><circle cx="991.61" cy="352.55" r="6.85"/><circle cx="668.89" cy="373.05" r="6.85"/><circle cx="699.63" cy="373.05" r="6.85"/><circle cx="730.36" cy="373.05" r="6.85"/><circle cx="761.10" cy="373.05" r="6.85"/><circle cx="791.83" cy="373.05" r="6.85"/><circle cx="822.57" cy="373.05" r="6.85"/><circle cx="853.30" cy="373.05" r="6.85"/><circle cx="884.04" cy="373.05" r="6.85"/><circle cx="914.77" cy="373.05" r="6.85"/><circle cx="945.51" cy="373.05" r="6.85"/><circle cx="976.24" cy="373.05" r="6.85"/><circle cx="1006.98" cy="373.05" r="6.85"/><circle cx="684.26" cy="393.55" r="6.85"/><circle cx="715.00" cy="393.55" r="6.85"/><circle cx="745.73" cy="393.55" r="6.85"/><circle cx="776.47" cy="393.55" r="6.85"/><circle cx="807.20" cy="393.55" r="6.85"/><circle cx="837.94" cy="393.55" r="6.85"/><circle cx="868.67" cy="393.55" r="6.85"/><circle cx="899.41" cy="393.55" r="6.85"/><circle cx="930.14" cy="393.55" r="6.85"/><circle cx="960.88" cy="393.55" r="6.85"/><circle cx="991.61" cy="393.55" r="6.85"/><circle cx="668.89" cy="414.05" r="6.85"/><circle cx="699.63" cy="414.05" r="6.85"/><circle cx="730.36" cy="414.05" r="6.85"/><circle cx="761.10" cy="414.05" r="6.85"/><circle cx="791.83" cy="414.05" r="6.85"/><circle cx="822.57" cy="414.05" r="6.85"/><circle cx="853.30" cy="414.05" r="6.85"/><circle cx="884.04" cy="414.05" r="6.85"/><circle cx="914.77" cy="414.05" r="6.85"/><circle cx="945.51" cy="414.05" r="6.85"/><circle cx="976.24" cy="414.05" r="6.85"/><circle cx="1006.98" cy="414.05" r="6.85"/><circle cx="684.26" cy="434.55" r="6.85"/><circle cx="715.00" cy="434.55" r="6.85"/><circle cx="745.73" cy="434.55" r="6.85"/><circle cx="776.47" cy="434.55" r="6.85"/><circle cx="807.20" cy="434.55" r="6.85"/><circle cx="837.94" cy="434.55" r="6.85"/><circle cx="868.67" cy="434.55" r="6.85"/><circle cx="899.41" cy="434.55" r="6.85"/><circle cx="930.14" cy="434.55" r="6.85"/><circle cx="960.88" cy="434.55" r="6.85"/><circle cx="991.61" cy="434.55" r="6.85"/><circle cx="668.89" cy="455.05" r="6.85"/><circle cx="699.63" cy="455.05" r="6.85"/><circle cx="730.36" cy="455.05" r="6.85"/><circle cx="761.10" cy="455.05" r="6.85"/><circle cx="791.83" cy="455.05" r="6.85"/><circle cx="822.57" cy="455.05" r="6.85"/><circle cx="684.26" cy="475.55" r="6.85"/><circle cx="715.00" cy="475.55" r="6.85"/><circle cx="745.73" cy="475.55" r="6.85"/><circle cx="776.47" cy="475.55" r="6.85"/><circle cx="807.20" cy="475.55" r="6.85"/><circle cx="668.89" cy="496.05" r="6.85"/><circle cx="699.63" cy="496.05" r="6.85"/><circle cx="730.36" cy="496.05" r="6.85"/><circle cx="761.10" cy="496.05" r="6.85"/><circle cx="791.83" cy="496.05" r="6.85"/><circle cx="822.57" cy="496.05" r="6.85"/><circle cx="684.26" cy="516.55" r="6.85"/><circle cx="715.00" cy="516.55" r="6.85"/><circle cx="745.73" cy="516.55" r="6.85"/><circle cx="776.47" cy="516.55" r="6.85"/><circle cx="807.20" cy="516.55" r="6.85"/><circle cx="668.89" cy="537.05" r="6.85"/><circle cx="699.63" cy="537.05" r="6.85"/><circle cx="730.36" cy="537.05" r="6.85"/><circle cx="761.10" cy="537.05" r="6.85"/><circle cx="791.83" cy="537.05" r="6.85"/><circle cx="822.57" cy="537.05" r="6.85"/><circle cx="684.26" cy="557.55" r="6.85"/><circle cx="715.00" cy="557.55" r="6.85"/><circle cx="745.73" cy="557.55" r="6.85"/><circle cx="776.47" cy="557.55" r="6.85"/><circle cx="807.20" cy="557.55" r="6.85"/><circle cx="668.89" cy="578.05" r="6.85"/><circle cx="699.63" cy="578.05" r="6.85"/><circle cx="730.36" cy="578.05" r="6.85"/><circle cx="761.10" cy="578.05" r="6.85"/><circle cx="791.83" cy="578.05" r="6.85"/><circle cx="822.57" cy="578.05" r="6.85"/></g><path d="M844.7 521.9H1031" stroke="#d80000" stroke-width="2" stroke-dasharray="16.8 7.2 1.6 6.4" stroke-dashoffset="11.30"/><path d="M937.9 444.7V591" stroke="#d80000" stroke-width="2" stroke-dasharray="16.8 7.2 1.6 6.4" stroke-dashoffset="14.90"/><rect x="858.4" y="465.4" width="160" height="112.9" rx="20" fill="none" stroke="#ffffff" stroke-width="2.6"/><path d="M176 527H567" stroke="#d80000" stroke-width="2" stroke-dasharray="16.8 7.2 1.6 6.4" stroke-dashoffset="4.80"/><path d="M371.7 454.7V599" stroke="#d80000" stroke-width="2" stroke-dasharray="16.8 7.2 1.6 6.4" stroke-dashoffset="0.00"/><rect x="196" y="472.4" width="352" height="108.8" rx="54.4" fill="none" stroke="#a8a8a8" stroke-width="1.5" stroke-dasharray="9 3 1 3"/><circle cx="234.2" cy="526.8" r="16.9" fill="none" stroke="#ffffff" stroke-width="2.6"/><circle cx="509.5" cy="526.8" r="16.9" fill="none" stroke="#ffffff" stroke-width="2.6"/><path d="M288 493.7H455.9V544.3H439.2L425.6 559.9H317.6L304.5 544.3H288Z" fill="none" stroke="#ffffff" stroke-width="2.6"/></svg><div class="a" style="left:1154px;top:107px;width:301px;height:691px;background:#fff"></div><div class="a" style="left:1154px;top:106px;width:301px;height:25px;background:linear-gradient(#c8c8c8 0 1px,#ececec 1px,#e6e6e6 60%,#d8d8d8)"></div><div class="a" style="left:1154px;top:107px;width:1px;height:691px;background:#c2c2c2"></div><div class="a" style="left:1453px;top:107px;width:1px;height:691px;background:#c8c8c8"></div><svg class="a" style="left:1156px;top:110px;" width="34" height="17" viewBox="0 0 34 17"><circle cx="8" cy="8" r="7" fill="#6e6e6e"/><path d="M5.2 5.2L10.8 10.8M10.8 5.2L5.2 10.8" stroke="#fff" stroke-width="1.8"/><circle cx="26" cy="8" r="7" fill="#6e6e6e"/><rect x="24.2" y="4.3" width="5" height="4.2" fill="none" stroke="#fff" stroke-width="1"/><rect x="22.5" y="7" width="5" height="4.5" fill="#6e6e6e" stroke="#fff" stroke-width="1"/></svg><div class="t" style="left:1284px;top:113.5px;font-size:12px;color:#2a2a2a">Lista de capas</div><div class="a" style="left:1155px;top:130px;width:60px;height:26px;border:1px solid #b4b4b4;border-top-color:#c8c8c8;background:linear-gradient(#fafafa,#ececec)"></div><div class="a" style="left:1215px;top:130px;width:60px;height:26px;border:1px solid #b4b4b4;border-top-color:#c8c8c8;background:linear-gradient(#fafafa,#ececec)"></div><div class="a" style="left:1275px;top:130px;width:60px;height:26px;border:1px solid #b4b4b4;border-top-color:#c8c8c8;background:linear-gradient(#fafafa,#ececec)"></div><div class="a" style="left:1335px;top:130px;width:60px;height:26px;border:1px solid #b4b4b4;border-top-color:#c8c8c8;background:linear-gradient(#fafafa,#ececec)"></div><div class="a" style="left:1395px;top:130px;width:60px;height:26px;border:1px solid #b4b4b4;border-top-color:#c8c8c8;background:linear-gradient(#fafafa,#ececec)"></div><svg class="a" style="left:1177.5px;top:138px;" width="15" height="11" viewBox="0 0 15 11"><path d="M0.8 5Q7.5 -2.5 14.2 5Q7.5 12.5 0.8 5Z" fill="#000"/><ellipse cx="7.5" cy="5.2" rx="4.4" ry="3.2" fill="#fff"/><circle cx="7.5" cy="4.8" r="2.7" fill="#000"/><path d="M6.2 3.5l1 1.2" stroke="#fff" stroke-width="0.7"/><path d="M0.5 4.5Q7.5 -3 14.5 4.5" fill="none" stroke="#000" stroke-width="1.3"/></svg><svg class="a" style="left:1237.5px;top:138px;" width="15" height="11" viewBox="0 0 15 11"><path d="M0.8 5Q7.5 -2.5 14.2 5Q7.5 12.5 0.8 5Z" fill="#b0b0b0"/><ellipse cx="7.5" cy="5.2" rx="4.4" ry="3.2" fill="#fff"/><circle cx="7.5" cy="4.8" r="2.7" fill="#b0b0b0"/><path d="M6.2 3.5l1 1.2" stroke="#fff" stroke-width="0.7"/><path d="M0.5 4.5Q7.5 -3 14.5 4.5" fill="none" stroke="#b0b0b0" stroke-width="1.3"/></svg><svg class="a" style="left:1297px;top:135px;" width="16" height="16" viewBox="0 0 16 16"><path d="M8 2V14M2 8H14" stroke="#e00000" stroke-width="3"/></svg><svg class="a" style="left:1357px;top:135px;" width="16" height="16" viewBox="0 0 16 16"><path d="M2.5 8H13.5" stroke="#e00000" stroke-width="3"/></svg><svg class="a" style="left:1417px;top:135px;" width="16" height="16" viewBox="0 0 16 16"><path d="M1.5 14.5L3 10.5L12 1.5L14.5 4L5.5 13Z" fill="#e2a23a" stroke="#8a5a14" stroke-width="0.7"/><path d="M11 2.5L13.5 5" stroke="#e02020" stroke-width="2.2"/><path d="M1.5 14.5L2.3 12.3L3.7 13.7Z" fill="#333"/></svg><div class="a" style="left:1161px;top:163.1px;width:16px;height:9px;background:#000;border:1px solid #000"></div><div class="t" style="left:1183px;top:161.2px;font-size:13.7px;letter-spacing:0.1px;color:#111">0</div><svg class="a" style="left:1415.5px;top:162.5px;" width="15" height="11" viewBox="0 0 15 11"><path d="M0.8 5Q7.5 -2.5 14.2 5Q7.5 12.5 0.8 5Z" fill="#000"/><ellipse cx="7.5" cy="5.2" rx="4.4" ry="3.2" fill="#fff"/><circle cx="7.5" cy="4.8" r="2.7" fill="#000"/><path d="M6.2 3.5l1 1.2" stroke="#fff" stroke-width="0.7"/><path d="M0.5 4.5Q7.5 -3 14.5 4.5" fill="none" stroke="#000" stroke-width="1.3"/></svg><svg class="a" style="left:1439px;top:159.8px;" width="12" height="15" viewBox="0 0 12 15"><path d="M2.8 6.5V4.8Q2.8 1 6 1Q9.2 1 9.2 4.8V6.5" fill="none" stroke="#bdbdbd" stroke-width="1.6"/><rect x="1" y="6.5" width="10" height="7.5" fill="#bdbdbd"/></svg><div class="a" style="left:1161px;top:183.1px;width:16px;height:9px;background:#ff0000;border:1px solid #000"></div><div class="t" style="left:1183px;top:181.2px;font-size:13.7px;letter-spacing:0.1px;color:#111">Centro</div><svg class="a" style="left:1415.5px;top:182.5px;" width="15" height="11" viewBox="0 0 15 11"><path d="M0.8 5Q7.5 -2.5 14.2 5Q7.5 12.5 0.8 5Z" fill="#000"/><ellipse cx="7.5" cy="5.2" rx="4.4" ry="3.2" fill="#fff"/><circle cx="7.5" cy="4.8" r="2.7" fill="#000"/><path d="M6.2 3.5l1 1.2" stroke="#fff" stroke-width="0.7"/><path d="M0.5 4.5Q7.5 -3 14.5 4.5" fill="none" stroke="#000" stroke-width="1.3"/></svg><svg class="a" style="left:1439px;top:179.8px;" width="12" height="15" viewBox="0 0 12 15"><path d="M2.8 6.5V4.8Q2.8 1 6 1Q9.2 1 9.2 4.8V6.5" fill="none" stroke="#bdbdbd" stroke-width="1.6"/><rect x="1" y="6.5" width="10" height="7.5" fill="#bdbdbd"/></svg><div class="a" style="left:1161px;top:203.1px;width:16px;height:9px;background:#000;border:1px solid #000"></div><div class="t" style="left:1183px;top:201.2px;font-size:13.7px;letter-spacing:0.1px;color:#111">Ventilación</div><svg class="a" style="left:1415.5px;top:202.5px;" width="15" height="11" viewBox="0 0 15 11"><path d="M0.8 5Q7.5 -2.5 14.2 5Q7.5 12.5 0.8 5Z" fill="#000"/><ellipse cx="7.5" cy="5.2" rx="4.4" ry="3.2" fill="#fff"/><circle cx="7.5" cy="4.8" r="2.7" fill="#000"/><path d="M6.2 3.5l1 1.2" stroke="#fff" stroke-width="0.7"/><path d="M0.5 4.5Q7.5 -3 14.5 4.5" fill="none" stroke="#000" stroke-width="1.3"/></svg><svg class="a" style="left:1439px;top:199.8px;" width="12" height="15" viewBox="0 0 12 15"><path d="M2.8 6.5V4.8Q2.8 1 6 1Q9.2 1 9.2 4.8V6.5" fill="none" stroke="#bdbdbd" stroke-width="1.6"/><rect x="1" y="6.5" width="10" height="7.5" fill="#bdbdbd"/></svg><div class="a" style="left:1161px;top:223.1px;width:16px;height:9px;background:#a4a4a8;border:1px solid #000"></div><div class="t" style="left:1183px;top:221.2px;font-size:13.7px;letter-spacing:0.1px;color:#111">Volver</div><svg class="a" style="left:1415.5px;top:222.5px;" width="15" height="11" viewBox="0 0 15 11"><path d="M0.8 5Q7.5 -2.5 14.2 5Q7.5 12.5 0.8 5Z" fill="#000"/><ellipse cx="7.5" cy="5.2" rx="4.4" ry="3.2" fill="#fff"/><circle cx="7.5" cy="4.8" r="2.7" fill="#000"/><path d="M6.2 3.5l1 1.2" stroke="#fff" stroke-width="0.7"/><path d="M0.5 4.5Q7.5 -3 14.5 4.5" fill="none" stroke="#000" stroke-width="1.3"/></svg><svg class="a" style="left:1439px;top:219.8px;" width="12" height="15" viewBox="0 0 12 15"><path d="M2.8 6.5V4.8Q2.8 1 6 1Q9.2 1 9.2 4.8V6.5" fill="none" stroke="#bdbdbd" stroke-width="1.6"/><rect x="1" y="6.5" width="10" height="7.5" fill="#bdbdbd"/></svg><svg class="a" style="left:1393px;top:219px;" width="16" height="16" viewBox="0 0 16 16"><path d="M1.5 14.5L3 10.5L12 1.5L14.5 4L5.5 13Z" fill="#e2a23a" stroke="#8a5a14" stroke-width="0.7"/><path d="M11 2.5L13.5 5" stroke="#e02020" stroke-width="2.2"/><path d="M1.5 14.5L2.3 12.3L3.7 13.7Z" fill="#333"/></svg><div class="a" style="left:1455px;top:107px;width:45px;height:691px;background:linear-gradient(90deg,#ededed,#dcdcdc 50%,#c6c6c6);border-top:1px solid #c8c8c8"></div><div class="a" style="left:1454px;top:107px;width:1px;height:691px;background:#c8c8c8"></div><div class="a" style="left:1462px;top:116px;width:1.5px;height:1.5px;background:#9a9a9a"></div><div class="a" style="left:1467px;top:116px;width:1.5px;height:1.5px;background:#9a9a9a"></div><div class="a" style="left:1472px;top:116px;width:1.5px;height:1.5px;background:#9a9a9a"></div><div class="a" style="left:1477px;top:116px;width:1.5px;height:1.5px;background:#9a9a9a"></div><div class="a" style="left:1482px;top:116px;width:1.5px;height:1.5px;background:#9a9a9a"></div><div class="a" style="left:1487px;top:116px;width:1.5px;height:1.5px;background:#9a9a9a"></div><div class="a" style="left:1458px;top:262px;width:1.5px;height:1.5px;background:#9a9a9a"></div><div class="a" style="left:1464px;top:262px;width:1.5px;height:1.5px;background:#9a9a9a"></div><div class="a" style="left:1470px;top:262px;width:1.5px;height:1.5px;background:#9a9a9a"></div><div class="a" style="left:1476px;top:262px;width:1.5px;height:1.5px;background:#9a9a9a"></div><div class="a" style="left:1482px;top:262px;width:1.5px;height:1.5px;background:#9a9a9a"></div><div class="a" style="left:1488px;top:262px;width:1.5px;height:1.5px;background:#9a9a9a"></div><div class="a" style="left:1494px;top:262px;width:1.5px;height:1.5px;background:#9a9a9a"></div><div class="a" style="left:1458px;top:409px;width:1.5px;height:1.5px;background:#9a9a9a"></div><div class="a" style="left:1464px;top:409px;width:1.5px;height:1.5px;background:#9a9a9a"></div><div class="a" style="left:1470px;top:409px;width:1.5px;height:1.5px;background:#9a9a9a"></div><div class="a" style="left:1476px;top:409px;width:1.5px;height:1.5px;background:#9a9a9a"></div><div class="a" style="left:1482px;top:409px;width:1.5px;height:1.5px;background:#9a9a9a"></div><div class="a" style="left:1488px;top:409px;width:1.5px;height:1.5px;background:#9a9a9a"></div><div class="a" style="left:1494px;top:409px;width:1.5px;height:1.5px;background:#9a9a9a"></div><div class="a" style="left:1456px;top:120px;width:42px;height:42px;border-radius:6px;background:#b4b4b4"></div><div class="a" style="left:1456px;top:417px;width:42px;height:43px;border-radius:6px;background:#b4b4b4"></div><svg class="a" style="left:1463px;top:127.5px;" width="29" height="29" viewBox="0 0 29 29"><rect x="0.5" y="0.5" width="27" height="27" fill="#fff" stroke="#111"/><rect x="0.5" y="0.5" width="27" height="4" fill="#111"/><rect x="1.5" y="1.2" width="2.6" height="2.6" fill="#fff"/><path d="M8 12L14 9V22L8 25Z" fill="#888" stroke="#333" stroke-width="0.7"/><path d="M11 11L21 7V20L11 24Z" fill="#fff" stroke="#333" stroke-width="0.8"/><path d="M13 21L19 12V20Z" fill="none" stroke="#f03030" stroke-width="0.9"/></svg><svg class="a" style="left:1463px;top:174.5px;" width="29" height="29" viewBox="0 0 29 29"><rect x="0.5" y="0.5" width="27" height="27" fill="#fff" stroke="#111"/><rect x="0.5" y="0.5" width="27" height="4" fill="#111"/><rect x="1.5" y="1.2" width="2.6" height="2.6" fill="#fff"/><rect x="7" y="10" width="12" height="9" fill="#f8f0c0" stroke="#555" stroke-width="0.8"/><circle cx="18" cy="18" r="5" fill="#f4e8b0" stroke="#555" stroke-width="0.8"/></svg><svg class="a" style="left:1463px;top:220.5px;" width="29" height="29" viewBox="0 0 29 29"><rect x="0.5" y="0.5" width="27" height="27" fill="#fff" stroke="#111"/><rect x="0.5" y="0.5" width="27" height="4" fill="#111"/><rect x="1.5" y="1.2" width="2.6" height="2.6" fill="#fff"/><rect x="6" y="10" width="17" height="12" rx="2.5" fill="#eef2fa" stroke="#b8c8e8" stroke-width="0.8"/></svg><svg class="a" style="left:1463px;top:275.5px;" width="29" height="29" viewBox="0 0 29 29"><rect x="0.5" y="0.5" width="27" height="27" fill="#fff" stroke="#111"/><rect x="0.5" y="0.5" width="27" height="4" fill="#111"/><rect x="1.5" y="1.2" width="2.6" height="2.6" fill="#fff"/><rect x="5" y="9" width="4" height="3" fill="#111"/><rect x="5" y="15" width="4" height="3" fill="#111"/><rect x="5" y="21" width="4" height="3" fill="#111"/><rect x="11" y="9" width="13" height="3" fill="none" stroke="#111" stroke-width="0.7"/><rect x="11" y="15" width="13" height="3" fill="none" stroke="#111" stroke-width="0.7"/><rect x="11" y="21" width="13" height="3" fill="none" stroke="#111" stroke-width="0.7"/></svg><svg class="a" style="left:1463px;top:321.5px;" width="29" height="29" viewBox="0 0 29 29"><rect x="0.5" y="0.5" width="27" height="27" fill="#fff" stroke="#111"/><rect x="0.5" y="0.5" width="27" height="4" fill="#111"/><rect x="1.5" y="1.2" width="2.6" height="2.6" fill="#fff"/><path d="M6 10H22L16 17V24L12 22V17Z" fill="#8a8a8a" stroke="#555" stroke-width="0.7"/><ellipse cx="14" cy="10.5" rx="8" ry="1.8" fill="#bbb"/></svg><svg class="a" style="left:1463px;top:367.5px;" width="29" height="29" viewBox="0 0 29 29"><rect x="0.5" y="0.5" width="27" height="27" fill="#fff" stroke="#111"/><rect x="0.5" y="0.5" width="27" height="4" fill="#111"/><rect x="1.5" y="1.2" width="2.6" height="2.6" fill="#fff"/><path d="M5 9V23L12 18H21V12H12Z" fill="#e8e8e8" stroke="#444" stroke-width="0.8"/><rect x="13" y="12" width="9" height="6" fill="#aaa"/><path d="M3 15H25" stroke="#f06060" stroke-width="0.7" stroke-dasharray="1.5 1"/></svg><svg class="a" style="left:1463px;top:423.5px;" width="29" height="29" viewBox="0 0 29 29"><rect x="0.5" y="0.5" width="27" height="27" fill="#fff" stroke="#111"/><rect x="0.5" y="0.5" width="27" height="4" fill="#111"/><rect x="1.5" y="1.2" width="2.6" height="2.6" fill="#fff"/><path d="M3 8H20M3 11H18M3 14H20M3 17H19" stroke="#777" stroke-width="0.8"/><path d="M0.5 22.5H27.5" stroke="#111" stroke-width="0.8"/><path d="M3 25H6M12 25H24" stroke="#555" stroke-width="0.9"/></svg><svg class="a" style="left:1463px;top:470.5px;" width="29" height="29" viewBox="0 0 29 29"><rect x="0.5" y="0.5" width="27" height="27" fill="#fff" stroke="#111"/><rect x="0.5" y="0.5" width="27" height="4" fill="#111"/><rect x="1.5" y="1.2" width="2.6" height="2.6" fill="#fff"/><rect x="8" y="9" width="12" height="15" rx="1" fill="#d09040" stroke="#8a5a14" stroke-width="0.7"/><rect x="10" y="11" width="8" height="11" fill="#f6f6f6"/><rect x="11" y="7.5" width="6" height="3" fill="#888"/></svg><div class="a" style="left:0;top:797px;width:1500px;height:47px;background:linear-gradient(#d0d0d0 0 2px,#dcdcdc 2px)"></div><div class="t" style="left:2px;top:807.5px;font-size:10px;letter-spacing:0.1px;color:#222">-1.878,20.3415</div><div class="t" style="left:2px;top:828px;font-size:10px;letter-spacing:0.1px;color:#222">@-1.878,20.3415</div><div class="a" style="left:253px;top:802px;width:1px;height:40px;background:#9a9a9a"></div><div class="t" style="left:256px;top:807.5px;font-size:10px;letter-spacing:0.2px;color:#222">20.428&lt;95.27°</div><div class="t" style="left:256px;top:828px;font-size:10px;letter-spacing:0.2px;color:#222">@20.428&lt;95.27°</div><div class="a" style="left:506.4px;top:819px;width:6px;height:6px;border-radius:3px;background:#c6c6c6"></div><div class="a" style="left:940.4px;top:819px;width:6px;height:6px;border-radius:3px;background:#c6c6c6"></div><div class="a" style="left:1269px;top:819px;width:6px;height:6px;border-radius:3px;background:#c6c6c6"></div><div class="t" style="left:568px;top:818.2px;font-size:10px;letter-spacing:0.12px;color:#222">Seleccionar entidad o región</div><div class="t" style="left:948.5px;top:818.2px;font-size:10px;letter-spacing:0.12px;color:#222">No hay entidades seleccionadas.</div><svg class="a" style="left:716px;top:805px;" width="20" height="32" viewBox="0 0 20 32"><rect x="1.5" y="1" width="17" height="29.5" rx="8.5" fill="#fff" stroke="#333" stroke-width="0.9"/><path d="M1.5 12Q10 9 18.5 12" fill="none" stroke="#333" stroke-width="0.9"/><path d="M10 1V11" stroke="#333" stroke-width="0.8"/><rect x="8.5" y="3" width="3" height="6" rx="1.5" fill="#fff" stroke="#333" stroke-width="0.8"/></svg><svg class="a" style="left:11px;top:205px;" width="100" height="100" viewBox="0 0 100 100"><defs><filter id="fb" x="-20%" y="-20%" width="140%" height="140%"><feGaussianBlur stdDeviation="1.5"/></filter></defs><circle cx="50.2" cy="51.2" r="35.3" fill="rgba(255,255,255,0.2)" stroke="rgba(125,150,178,0.4)" stroke-width="7.5" filter="url(#fb)"/></svg><svg class="a" style="left:20px;top:220px;" width="65" height="65" viewBox="0 0 65 65"><path d="M8 14.3H57.5M8 48.6H57.5M15.8 5.4V56M51 5.4V56" stroke="rgba(225,70,70,0.5)" stroke-width="1.6"/></svg><div class="a" style="left:47.5px;top:285.8px;width:140px;height:25px;border-radius:4px;border:1px solid #b9b9c2;background:linear-gradient(#f7f7fa,#e4e6ee);box-shadow:0 1px 2px rgba(0,0,0,0.25)"></div><div class="t" style="left:53px;top:292.6px;font-size:13.8px;letter-spacing:0.1px;color:#111">Seleccionar polígono</div><svg class="a" style="left:57px;top:255px;" width="24" height="34" viewBox="57 255 24 34"><path d="M61.4 259L61.4 280.3L66.4 275.8L70.5 285.3L74.6 283.6L70.7 274.4L75.8 273.9Z" fill="#fff" stroke="#000" stroke-width="1.15" stroke-linejoin="miter"/></svg></body></html>
